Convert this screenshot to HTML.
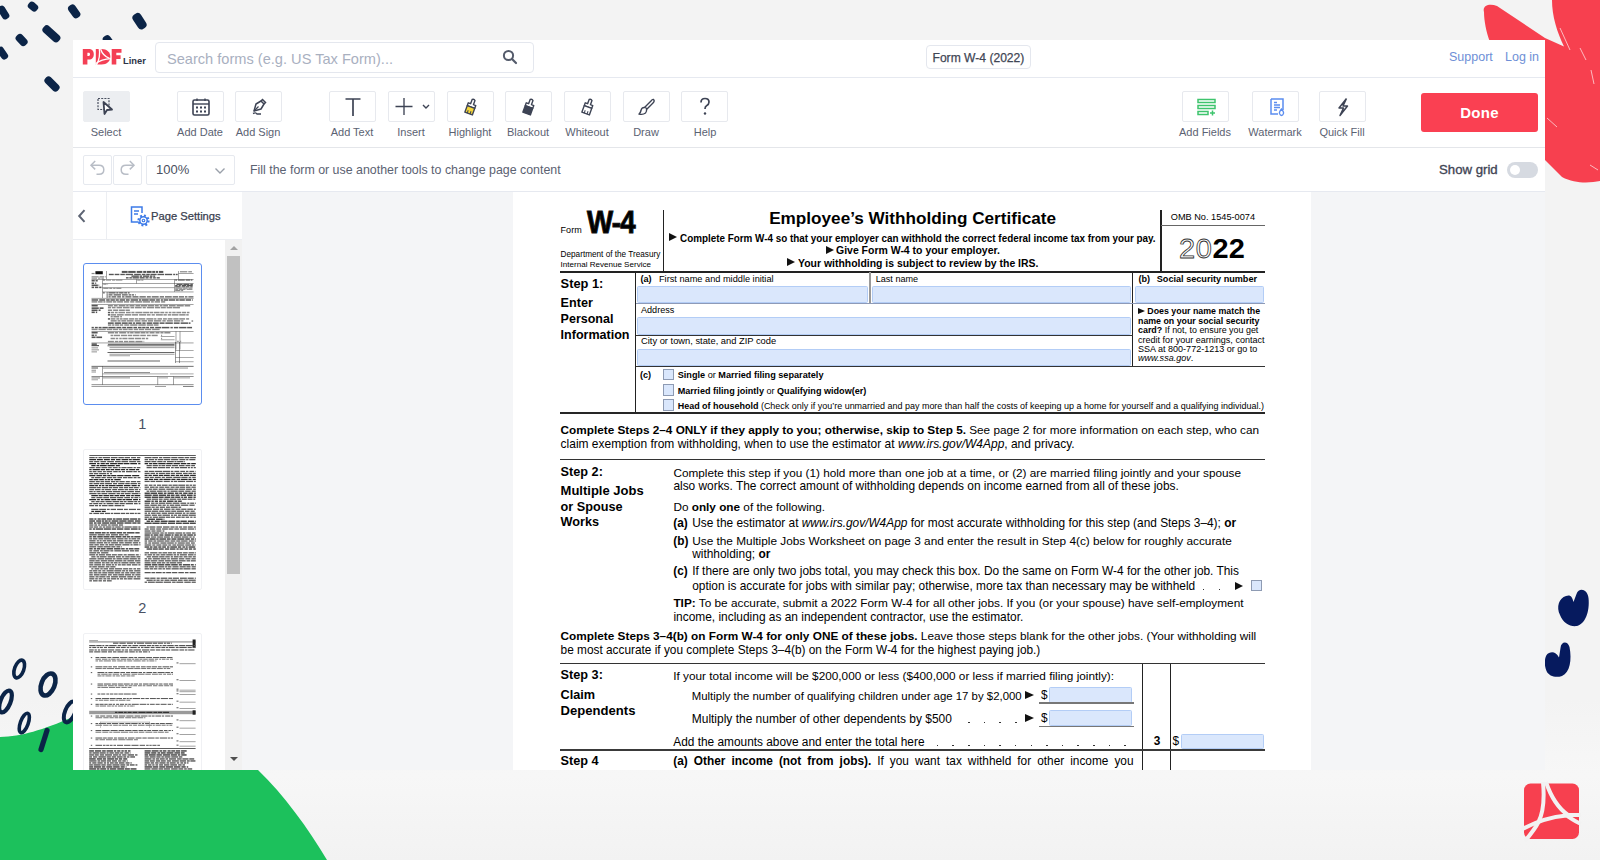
<!DOCTYPE html>
<html><head><meta charset="utf-8">
<style>
*{box-sizing:border-box;margin:0;padding:0}
html,body{width:1600px;height:860px;overflow:hidden}
body{position:relative;background:linear-gradient(to bottom,#f3f3f3 0,#f3f3f3 700px,#f7f7f7 775px,#f2f2f2 860px);font-family:"Liberation Sans",sans-serif;color:#3c4250}
.a{position:absolute}
#app{position:absolute;left:73px;top:40px;width:1472px;height:730px;background:#fff;overflow:hidden}
.line{position:absolute;left:0;width:1472px;height:1px;background:#e6e9f0}
.btn{position:absolute;top:51px;width:47px;height:31px;border:1px solid #e7e9ee;border-radius:2px;background:#fff}
.btn svg{position:absolute;left:50%;top:50%;transform:translate(-50%,-50%)}
.lbl{position:absolute;top:86px;font-size:11px;line-height:13px;color:#5b6272;text-align:center;width:100px;margin-left:-50px;white-space:nowrap}
#side{position:absolute;left:73px;top:192px;width:169px;height:578px;background:#fff;overflow:hidden}
#doc{position:absolute;left:242px;top:192px;width:1303px;height:578px;background:#f4f5f7;overflow:hidden;color:#000}
#doc .t,#side .t{position:absolute;white-space:nowrap;line-height:1;transform-origin:0 0}
#doc .r,#side .r{position:absolute}
</style></head>
<body>
<svg class="a" style="left:0;top:0" width="1600" height="860" viewBox="0 0 1600 860">
<g fill="#0b2447">
<rect x="-3.75" y="8.75" width="14.5" height="7.5" rx="3.15" transform="rotate(58 3.5 12.5)"/>
<rect x="27.75" y="2.70" width="10.5" height="7.8" rx="3.28" transform="rotate(40 33 6.6)"/>
<rect x="66.95" y="7.30" width="14.5" height="8.2" rx="3.44" transform="rotate(55 74.2 11.4)"/>
<rect x="131.00" y="16.50" width="17" height="9.4" rx="3.95" transform="rotate(57 139.5 21.2)"/>
<rect x="41.15" y="29.60" width="20.5" height="8.4" rx="3.53" transform="rotate(42 51.4 33.8)"/>
<rect x="15.10" y="35.90" width="13" height="8.2" rx="3.44" transform="rotate(47 21.6 40)"/>
<rect x="-4.25" y="49.60" width="13.5" height="7.2" rx="3.02" transform="rotate(55 2.5 53.2)"/>
<rect x="102.00" y="37.30" width="13" height="8.4" rx="3.53" transform="rotate(55 108.5 41.5)"/>
<rect x="43.25" y="80.10" width="17.5" height="7.8" rx="3.28" transform="rotate(45 52 84)"/>
</g>
<path d="M1484 12 C1482 5,1490 3,1497 6 L1545 38 L1564 46.5 C1557 32,1552 16,1552 0 L1600 0 L1600 181 C1590 183,1575 184,1562 177 L1545 160 L1520 110 L1490 42 C1486 32,1484 20,1484 12 Z" fill="#f7404f"/>
<g stroke="#fff" stroke-width="0.8" opacity="0.8"><path d="M1560 28 L1570 50"/><path d="M1580 48 L1586 60"/><path d="M1591 70 L1594 84"/><path d="M1547 118 L1557 127"/><path d="M1590 165 L1598 170"/></g>
<path d="M0 737 C22 736.5,42 730,73 717 L150 680 L258 770 C284 795,308 828,327 860 L0 860 Z" fill="#1cc15c"/>
<g fill="none" stroke="#0b2447">
<ellipse cx="19.2" cy="669" rx="4.6" ry="9.3" transform="rotate(20 19.2 669)" stroke-width="3.6"/>
<ellipse cx="48" cy="684.5" rx="6.6" ry="11.6" transform="rotate(22 48 684.5)" stroke-width="4.6"/>
<ellipse cx="5.5" cy="701.5" rx="5" ry="11.6" transform="rotate(22 5.5 701.5)" stroke-width="4.2"/>
<ellipse cx="24.3" cy="723" rx="3.9" ry="10.2" transform="rotate(20 24.3 723)" stroke-width="3.6"/>
<ellipse cx="70" cy="712" rx="5" ry="11" transform="rotate(22 70 712)" stroke-width="4"/>
</g>
<path d="M47 730.5 L41 749.5" stroke="#0b2447" stroke-width="5.2" stroke-linecap="round"/>
<g fill="#061a5e">
<path d="M1566 596 C1559 598,1556 607,1560 615 C1563 623,1570 627,1577 626 C1585 624,1590 612,1588.5 598 C1587.5 589,1579 587,1576.5 594 L1573.5 602 C1572 596,1570 594.5,1566 596 Z"/>
<path d="M1549 653 C1544 655,1544 665,1546.5 671 C1549 676.5,1556 678,1562 676 C1570 672.5,1572 660,1569.5 647 C1567.5 640.5,1561 641.5,1560.5 648 L1559 657.5 C1556 652,1552.5 651.5,1549 653 Z"/>
</g>
<rect x="1524" y="783.6" width="55" height="55.3" rx="6.5" fill="#f7404f"/>
<g fill="none" stroke="#f2f2f2" stroke-width="4">
<path d="M1543 782 C1544.5 798,1543.5 812,1538.5 822 C1535 829,1530 835,1525 841"/>
<path d="M1546 782 C1551 797,1558 808,1568 815 L1581 815"/>
<path d="M1521 830 C1535 822,1550 817,1566.5 815.5 C1571 818.5,1576 822,1581 824"/>
</g>
</svg>
<div id="app">
  <!-- header -->
  <svg class="a" style="left:-73px;top:-40px" width="200" height="80" viewBox="0 0 200 80"><g fill="#f43f55" fill-rule="evenodd">
<path d="M82.8 49.1 H89 C92.2 49.1 93.8 51.3 93.8 54.3 C93.8 57.4 92.2 59.6 89 59.6 H87.4 V64.6 H82.8 Z M87.4 52.7 V56 H88.7 C89.6 56 90 55.3 90 54.35 C90 53.4 89.6 52.7 88.7 52.7 Z"/>
<path d="M95.8 49.1 H101.6 C106.9 49.1 110.3 52.2 110.3 56.85 C110.3 61.5 106.9 64.6 101.6 64.6 H95.8 Z"/>
<path d="M111.7 49.1 H121.5 V52.8 H116.3 V55.3 H120.6 V58.9 H116.3 V64.6 H111.7 Z"/>
</g><g fill="none" stroke="#fff" stroke-width="1.3"><path d="M99.2 48 C100.2 53,99.8 58.5,96.3 65.5"/><path d="M100.6 49 C102 53.5,104.5 56.5,109.5 58.3"/><path d="M95.5 63.8 C99.5 60.5,104 58.8,111 58.6"/></g>
<text x="123" y="64.2" font-family="Liberation Sans" font-weight="bold" font-size="9.8" fill="#2c3447" textLength="22.8" lengthAdjust="spacingAndGlyphs">Liner</text></svg>
  <div class="a" style="left:81.5px;top:2px;width:379.5px;height:31px;border:1px solid #e4e7ee;border-radius:4px"></div>
  <div class="a" style="left:94px;top:10.6px;font-size:14.6px;line-height:17px;color:#a9b0bf;white-space:nowrap">Search forms (e.g. US Tax Form)...</div>
  <svg class="a" style="left:429px;top:9px" width="16" height="16" viewBox="0 0 16 16"><circle cx="6.5" cy="6.5" r="4.6" fill="none" stroke="#545b6b" stroke-width="2"/><path d="M10 10 L14 14" stroke="#545b6b" stroke-width="2.2" stroke-linecap="round"/></svg>
  <div class="a" style="left:853px;top:5px;width:105px;height:24px;border:1px solid #e4e7ee;border-radius:4px"></div>
  <div class="a" style="left:859.5px;top:10.7px;font-size:12.1px;line-height:14px;color:#3f4655;white-space:nowrap;-webkit-text-stroke:0.25px #3f4655">Form W-4 (2022)</div>
  <div class="a" style="left:1376px;top:10px;font-size:12.5px;line-height:14px;color:#6e8fd6;white-space:nowrap">Support</div>
  <div class="a" style="left:1432px;top:10px;font-size:12.5px;line-height:14px;color:#6e8fd6;white-space:nowrap">Log in</div>
  <div class="line" style="top:37px"></div>

  <!-- toolbar -->
  <div class="btn" style="left:10px;background:#eceef1;border-color:#eceef1"><svg width="24" height="20" viewBox="0 0 24 20"><rect x="3" y="1.5" width="11" height="11" fill="none" stroke="#4a5060" stroke-width="1.2" stroke-dasharray="2 1.2"/><path d="M8.5 5 L9.5 17 L12 13 L17 12.5 Z" fill="#fff" stroke="#3d4354" stroke-width="1.8" stroke-linejoin="round"/></svg></div>
  <div class="lbl" style="left:33px">Select</div>

  <div class="btn" style="left:104px"><svg width="20" height="20" viewBox="0 0 20 20"><rect x="2" y="3" width="16" height="15" rx="1.5" fill="none" stroke="#3d4354" stroke-width="1.6"/><path d="M2 7 H18" stroke="#3d4354" stroke-width="1.4"/><path d="M6 1.5 V4 M14 1.5 V4" stroke="#3d4354" stroke-width="1.4"/><g fill="#3d4354"><rect x="5" y="9.5" width="2" height="2"/><rect x="9" y="9.5" width="2" height="2"/><rect x="13" y="9.5" width="2" height="2"/><rect x="5" y="13.5" width="2" height="2"/><rect x="9" y="13.5" width="2" height="2"/><rect x="13" y="13.5" width="2" height="2"/></g></svg></div>
  <div class="lbl" style="left:127px">Add Date</div>

  <div class="btn" style="left:162px"><svg width="20" height="20" viewBox="0 0 20 20"><path d="M5 14 L7 7 L12 4 L15 7 L12 12 Z" fill="none" stroke="#3d4354" stroke-width="1.5" stroke-linejoin="round"/><path d="M12 4 L13.5 2.5 L16.5 5.5 L15 7" fill="none" stroke="#3d4354" stroke-width="1.5"/><path d="M5 14 L9.5 9.5" stroke="#3d4354" stroke-width="1.2"/><path d="M4 16.5 Q7 15 8 17 H12" fill="none" stroke="#3d4354" stroke-width="1.4"/></svg></div>
  <div class="lbl" style="left:185px">Add Sign</div>

  <div class="btn" style="left:256px"><svg width="20" height="22" viewBox="0 0 20 22"><path d="M2.5 3 H17.5 M10 3 V20" stroke="#3d4354" stroke-width="1.7"/></svg></div>
  <div class="lbl" style="left:279px">Add Text</div>

  <div class="btn" style="left:315px"><svg width="36" height="20" viewBox="0 0 36 20"><path d="M1.5 9.5 H18.5 M10 1 V18" stroke="#3d4354" stroke-width="1.35"/><path d="M29 8 L32 11 L35 8" fill="none" stroke="#3d4354" stroke-width="1.4"/></svg></div>
  <div class="lbl" style="left:338px">Insert</div>

  <div class="btn" style="left:374px"><svg width="20" height="20" viewBox="0 0 20 20"><g transform="rotate(20 10 10)"><path d="M8.5 2.5 Q10 1 11.5 2.5 V7 H14 V10 H6 V7 H8.5 Z" fill="none" stroke="#3d4354" stroke-width="1.4" stroke-linejoin="round"/><path d="M6 10 H14 V17 H6 Z" fill="#f5d63a" stroke="#3d4354" stroke-width="1.4" stroke-linejoin="round"/><path d="M8.5 14 V17 M11.5 14 V17" stroke="#3d4354" stroke-width="1"/></g></svg></div>
  <div class="lbl" style="left:397px">Highlight</div>

  <div class="btn" style="left:432px"><svg width="20" height="20" viewBox="0 0 20 20"><g transform="rotate(20 10 10)"><path d="M8.5 2.5 Q10 1 11.5 2.5 V7 H14 V10 H6 V7 H8.5 Z" fill="none" stroke="#3d4354" stroke-width="1.4" stroke-linejoin="round"/><path d="M6 10 H14 V17 H6 Z" fill="#3d4354" stroke="#3d4354" stroke-width="1.4" stroke-linejoin="round"/></g></svg></div>
  <div class="lbl" style="left:455px">Blackout</div>

  <div class="btn" style="left:491px"><svg width="20" height="20" viewBox="0 0 20 20"><g transform="rotate(20 10 10)"><path d="M8.5 2.5 Q10 1 11.5 2.5 V7 H14 V10 H6 V7 H8.5 Z" fill="none" stroke="#3d4354" stroke-width="1.4" stroke-linejoin="round"/><path d="M6 10 H14 V17 H6 Z" fill="#fff" stroke="#3d4354" stroke-width="1.4" stroke-linejoin="round"/><path d="M8.5 14 V17 M11.5 14 V17" stroke="#3d4354" stroke-width="1"/></g></svg></div>
  <div class="lbl" style="left:514px">Whiteout</div>

  <div class="btn" style="left:550px"><svg width="20" height="20" viewBox="0 0 20 20"><path d="M16.5 2.5 Q18 4 16 6 L10 12 L8 10 L14 4 Q15.5 2 16.5 2.5 Z" fill="none" stroke="#3d4354" stroke-width="1.4" stroke-linejoin="round"/><path d="M8 10.5 Q4.5 10 4 13.5 Q3.5 16 2 17 Q6 18 8.5 16 Q10 14.5 9.5 12" fill="none" stroke="#3d4354" stroke-width="1.4" stroke-linejoin="round"/></svg></div>
  <div class="lbl" style="left:573px">Draw</div>

  <div class="btn" style="left:608px"><svg width="20" height="22" viewBox="0 0 20 22"><path d="M6 6.5 Q6 2.5 10 2.5 Q14 2.5 14 6 Q14 8.5 11.5 9.8 Q10 10.6 10 13" fill="none" stroke="#3d4354" stroke-width="1.7"/><circle cx="10" cy="17.5" r="1.2" fill="#3d4354"/></svg></div>
  <div class="lbl" style="left:632px">Help</div>

  <div class="btn" style="left:1109px"><svg width="22" height="20" viewBox="0 0 22 20"><rect x="3" y="2.5" width="17" height="3" fill="none" stroke="#3ec46d" stroke-width="1.5"/><rect x="3" y="8.5" width="17" height="3" fill="none" stroke="#3ec46d" stroke-width="1.5"/><rect x="3" y="14.5" width="10" height="3" fill="none" stroke="#3ec46d" stroke-width="1.5"/><path d="M15 16 H20 M17.5 13.5 V18.5" stroke="#3ec46d" stroke-width="1.5"/></svg></div>
  <div class="lbl" style="left:1132px">Add Fields</div>

  <div class="btn" style="left:1179px"><svg width="20" height="20" viewBox="0 0 20 20"><path d="M5 2 H17 V13 M5 2 V17 H12" fill="none" stroke="#5b8def" stroke-width="1.5"/><path d="M8 5.5 H11 M8 8 H14 M8 10.5 H14 M8 13 H11" stroke="#5b8def" stroke-width="1.3"/><path d="M15.5 12 Q13 15 13.5 16.5 Q14.3 18.5 15.5 18.5 Q16.8 18.5 17.5 16.5 Q18 15 15.5 12 Z" fill="none" stroke="#5b8def" stroke-width="1.3"/></svg></div>
  <div class="lbl" style="left:1202px">Watermark</div>

  <div class="btn" style="left:1246px"><svg width="20" height="20" viewBox="0 0 20 20"><path d="M13.5 1.5 L6 11 H10.5 L7 18.5 L14.5 9 H10 L13.5 1.5" fill="none" stroke="#3d4354" stroke-width="1.5" stroke-linejoin="round"/></svg></div>
  <div class="lbl" style="left:1269px">Quick Fill</div>

  <div class="a" style="left:1348px;top:53px;width:117px;height:39px;background:#fa4052;border-radius:3px;color:#fff;font-weight:bold;font-size:15px;line-height:39px;text-align:center;letter-spacing:0.3px">Done</div>
  <div class="line" style="top:107px;background:#e4e6ea"></div>

  <!-- sub toolbar -->
  <div class="a" style="left:10.4px;top:115px;width:29px;height:30px;border:1px solid #e6e9ef;border-radius:2px"></div>
  <div class="a" style="left:40.2px;top:115px;width:28.4px;height:30px;border:1px solid #e6e9ef;border-radius:2px"></div>
  <svg class="a" style="left:15.5px;top:119px" width="18" height="18" viewBox="0 0 18 18"><path d="M6.2 2 L2 6.2 L6.2 10.4" fill="none" stroke="#b8bdc6" stroke-width="1.5"/><path d="M2.2 6.2 H10 Q14.8 6.2 14.8 10.7 Q14.8 15.2 10 15.2 H7.5" fill="none" stroke="#b8bdc6" stroke-width="1.5"/></svg>
  <svg class="a" style="left:44.5px;top:119px" width="18" height="18" viewBox="0 0 18 18"><path d="M11.8 2 L16 6.2 L11.8 10.4" fill="none" stroke="#b8bdc6" stroke-width="1.5"/><path d="M15.8 6.2 H8 Q3.2 6.2 3.2 10.7 Q3.2 15.2 8 15.2 H10.5" fill="none" stroke="#b8bdc6" stroke-width="1.5"/></svg>
  <div class="a" style="left:73px;top:115px;width:89px;height:30px;border:1px solid #e6e9ef;border-radius:2px"></div>
  <div class="a" style="left:83px;top:122px;font-size:13px;line-height:15px;color:#4a5060">100%</div>
  <svg class="a" style="left:141px;top:127px" width="12" height="8" viewBox="0 0 12 8"><path d="M1.5 1.5 L6 6 L10.5 1.5" fill="none" stroke="#9aa0aa" stroke-width="1.4"/></svg>
  <div class="a" style="left:177px;top:122.7px;font-size:12.4px;line-height:15px;color:#5b6272;white-space:nowrap">Fill the form or use another tools to change page content</div>
  <div class="a" style="left:1366px;top:122px;font-size:13.2px;line-height:15px;color:#3f4554;white-space:nowrap;-webkit-text-stroke:0.35px #3f4554">Show grid</div>
  <div class="a" style="left:1434px;top:122px;width:31px;height:16px;border-radius:8px;background:#d6dae1"></div>
  <div class="a" style="left:1437px;top:125px;width:10px;height:10px;border-radius:5px;background:#fff"></div>
  <div class="line" style="top:151px"></div>

</div>
<div id="side"><svg class="r" style="left:4px;top:16px" width="10" height="16" viewBox="0 0 10 16"><path d="M7.5 2.2 L2.2 8 L7.5 13.8" fill="none" stroke="#5d6473" stroke-width="2"/></svg>
<div class="r" style="left:32.50px;top:0.00px;width:1.00px;height:47.50px;background:#eceef2"></div>
<svg class="r" style="left:56px;top:13px" width="21" height="22" viewBox="0 0 21 22"><path d="M11 17 H2.5 V2 H13 V8" fill="none" stroke="#3d7be8" stroke-width="1.5"/><path d="M5 6 H10 M5 9 H9" stroke="#3d7be8" stroke-width="1.5"/><circle cx="14.5" cy="15.5" r="5" fill="#fff" stroke="#3d7be8" stroke-width="2.2" stroke-dasharray="1.9 2.0"/><circle cx="14.5" cy="15.5" r="3.7" fill="#fff" stroke="#3d7be8" stroke-width="1.5"/><circle cx="14.5" cy="15.5" r="1.3" fill="none" stroke="#3d7be8" stroke-width="1.1"/></svg>
<div class="t" style="left:78px;top:18.5px;font-size:11.2px;color:#3a4150;-webkit-text-stroke:0.25px #3a4150">Page Settings</div>
<div class="r" style="left:0.00px;top:47.00px;width:169.00px;height:1.00px;background:#eceef2"></div>
<div class="r" style="left:152.20px;top:48.00px;width:16.80px;height:530.00px;background:#f1f1f1"></div>
<div class="r" style="left:154.00px;top:63.80px;width:13.00px;height:318.70px;background:#c1c1c1"></div>
<div class="r" style="left:156.5px;top:54px;width:0;height:0;border-left:4px solid transparent;border-right:4px solid transparent;border-bottom:4px solid #a3a3a3"></div>
<div class="r" style="left:156.5px;top:565px;width:0;height:0;border-left:4px solid transparent;border-right:4px solid transparent;border-top:4px solid #505050"></div>
<div class="r" style="left:9.80px;top:71.30px;width:118.80px;height:141.40px;border:1.6px solid #5b8def;border-radius:3px;background:#fff"></div>
<div class="r" style="left:9.80px;top:256.50px;width:119.20px;height:141.20px;border:1px solid #f0f1f4;border-radius:2px;background:#fff"></div>
<div class="r" style="left:9.90px;top:440.60px;width:119.00px;height:167.40px;border:1px solid #f0f1f4;border-radius:2px;background:#fff"></div>
<div class="t" style="left:69.3px;top:224.5px;width:0;font-size:14.5px;color:#4a5263"><span style="position:absolute;left:-4px">1</span></div>
<div class="t" style="left:69.3px;top:408.5px;width:0;font-size:14.5px;color:#4a5263"><span style="position:absolute;left:-4px">2</span></div>
<svg class="r" style="left:0;top:0" width="169" height="578" viewBox="73 192 169 578"><rect x="106.38" y="270.99" width="0.45" height="8.31" fill="#333"/><rect x="178.43" y="271.01" width="0.45" height="8.29" fill="#333"/><rect x="178.52" y="273.05" width="15.06" height="0.45" fill="#333"/><rect x="91.50" y="279.22" width="102.08" height="0.45" fill="#333"/><rect x="95.41" y="271.19" width="7.38" height="3.06" fill="#111"/><rect x="102.36" y="279.30" width="0.45" height="18.75" fill="#333"/><rect x="136.29" y="279.30" width="0.45" height="4.19" fill="#333"/><rect x="174.33" y="279.30" width="0.45" height="12.53" fill="#333"/><rect x="102.45" y="283.43" width="91.14" height="0.45" fill="#333"/><rect x="102.45" y="287.61" width="71.98" height="0.45" fill="#333"/><rect x="102.45" y="291.75" width="91.14" height="0.45" fill="#333"/><rect x="106.39" y="292.13" width="1.67" height="1.53" fill="#888"/><rect x="106.39" y="294.22" width="1.67" height="1.53" fill="#888"/><rect x="106.39" y="296.19" width="1.67" height="1.53" fill="#888"/><rect x="91.50" y="297.95" width="102.08" height="0.45" fill="#333"/><rect x="91.50" y="304.19" width="102.08" height="0.45" fill="#333"/><rect x="191.51" y="320.29" width="1.64" height="1.50" fill="#888"/><rect x="91.50" y="331.30" width="102.08" height="0.45" fill="#333"/><rect x="175.77" y="331.38" width="0.45" height="18.14" fill="#333"/><rect x="179.78" y="331.38" width="0.45" height="18.14" fill="#333"/><rect x="160.79" y="336.54" width="13.76" height="0.45" fill="#333"/><rect x="160.79" y="339.67" width="13.76" height="0.45" fill="#333"/><rect x="91.50" y="342.74" width="102.08" height="0.45" fill="#333"/><rect x="107.86" y="343.81" width="66.61" height="1.1" fill="#666"/><rect x="91.59" y="272.91" width="3.00" height="1.22" fill="#8a8a8a"/><rect x="91.59" y="276.24" width="7.08" height="1.14" fill="#8a8a8a"/><rect x="99.50" y="276.24" width="4.79" height="1.14" fill="#8a8a8a"/><rect x="105.19" y="276.24" width="0.79" height="1.14" fill="#8a8a8a"/><rect x="91.59" y="277.58" width="5.46" height="1.12" fill="#8a8a8a"/><rect x="98.05" y="277.58" width="2.52" height="1.12" fill="#8a8a8a"/><rect x="101.32" y="277.58" width="2.50" height="1.12" fill="#8a8a8a"/><rect x="121.79" y="270.92" width="5.81" height="1.99" fill="#555"/><rect x="128.23" y="270.92" width="7.40" height="1.99" fill="#555"/><rect x="136.71" y="270.92" width="5.60" height="1.99" fill="#555"/><rect x="143.22" y="270.92" width="2.87" height="1.99" fill="#555"/><rect x="146.69" y="270.92" width="4.91" height="1.99" fill="#555"/><rect x="152.23" y="270.92" width="3.05" height="1.99" fill="#555"/><rect x="155.99" y="270.92" width="2.17" height="1.99" fill="#555"/><rect x="158.99" y="270.92" width="4.30" height="1.99" fill="#555"/><rect x="108.88" y="273.79" width="4.86" height="1.38" fill="#555"/><rect x="114.65" y="273.79" width="4.75" height="1.38" fill="#555"/><rect x="120.33" y="273.79" width="4.52" height="1.38" fill="#555"/><rect x="125.59" y="273.79" width="7.49" height="1.38" fill="#555"/><rect x="134.17" y="273.79" width="6.62" height="1.38" fill="#555"/><rect x="141.75" y="273.79" width="3.73" height="1.38" fill="#555"/><rect x="146.19" y="273.79" width="3.59" height="1.38" fill="#555"/><rect x="150.42" y="273.79" width="6.21" height="1.38" fill="#555"/><rect x="157.43" y="273.79" width="6.66" height="1.38" fill="#555"/><rect x="164.88" y="273.79" width="7.27" height="1.38" fill="#555"/><rect x="173.18" y="273.79" width="2.00" height="1.38" fill="#555"/><rect x="175.88" y="273.79" width="1.80" height="1.38" fill="#555"/><rect x="131.46" y="275.46" width="7.39" height="1.38" fill="#555"/><rect x="139.66" y="275.46" width="2.40" height="1.38" fill="#555"/><rect x="142.97" y="275.46" width="6.28" height="1.38" fill="#555"/><rect x="149.99" y="275.46" width="2.48" height="1.38" fill="#555"/><rect x="153.23" y="275.46" width="1.91" height="1.38" fill="#555"/><rect x="125.96" y="277.14" width="2.65" height="1.38" fill="#555"/><rect x="129.33" y="277.14" width="2.56" height="1.38" fill="#555"/><rect x="132.52" y="277.14" width="6.38" height="1.38" fill="#555"/><rect x="139.59" y="277.14" width="5.08" height="1.38" fill="#555"/><rect x="145.49" y="277.14" width="3.05" height="1.38" fill="#555"/><rect x="149.51" y="277.14" width="2.72" height="1.38" fill="#555"/><rect x="153.15" y="277.14" width="2.64" height="1.38" fill="#555"/><rect x="156.60" y="277.14" width="3.17" height="1.38" fill="#555"/><rect x="179.94" y="271.15" width="7.34" height="1.23" fill="#8a8a8a"/><rect x="188.28" y="271.15" width="3.67" height="1.23" fill="#8a8a8a"/><rect x="91.59" y="279.94" width="3.16" height="1.58" fill="#555"/><rect x="95.54" y="279.94" width="2.18" height="1.58" fill="#555"/><rect x="91.59" y="282.46" width="2.55" height="1.56" fill="#555"/><rect x="95.23" y="282.46" width="0.97" height="1.56" fill="#555"/><rect x="91.59" y="284.51" width="6.25" height="1.55" fill="#555"/><rect x="98.60" y="284.51" width="0.57" height="1.55" fill="#555"/><rect x="91.59" y="286.59" width="2.50" height="1.55" fill="#555"/><rect x="94.97" y="286.59" width="3.34" height="1.55" fill="#555"/><rect x="99.21" y="286.59" width="2.29" height="1.55" fill="#555"/><rect x="103.14" y="279.40" width="1.61" height="1.22" fill="#555"/><rect x="105.84" y="279.36" width="5.16" height="1.23" fill="#8a8a8a"/><rect x="112.03" y="279.36" width="3.01" height="1.23" fill="#8a8a8a"/><rect x="115.71" y="279.36" width="6.66" height="1.23" fill="#8a8a8a"/><rect x="137.21" y="279.38" width="3.37" height="1.22" fill="#8a8a8a"/><rect x="141.28" y="279.38" width="2.08" height="1.22" fill="#8a8a8a"/><rect x="175.27" y="279.38" width="1.68" height="1.22" fill="#555"/><rect x="177.92" y="279.37" width="6.85" height="1.22" fill="#555"/><rect x="185.67" y="279.37" width="4.32" height="1.22" fill="#555"/><rect x="190.64" y="279.37" width="1.74" height="1.22" fill="#555"/><rect x="103.23" y="283.49" width="3.31" height="1.22" fill="#8a8a8a"/><rect x="107.49" y="283.49" width="0.57" height="1.22" fill="#8a8a8a"/><rect x="103.23" y="287.65" width="5.28" height="1.24" fill="#8a8a8a"/><rect x="109.26" y="287.65" width="2.96" height="1.24" fill="#8a8a8a"/><rect x="113.18" y="287.65" width="2.38" height="1.24" fill="#8a8a8a"/><rect x="116.27" y="287.65" width="5.08" height="1.24" fill="#8a8a8a"/><rect x="103.08" y="292.24" width="1.61" height="1.22" fill="#555"/><rect x="108.54" y="292.24" width="7.05" height="1.23" fill="#555"/><rect x="116.29" y="292.24" width="2.09" height="1.23" fill="#555"/><rect x="119.12" y="292.24" width="4.45" height="1.23" fill="#555"/><rect x="124.20" y="292.24" width="2.97" height="1.23" fill="#555"/><rect x="127.95" y="292.24" width="1.67" height="1.23" fill="#555"/><rect x="108.54" y="294.28" width="3.99" height="1.22" fill="#555"/><rect x="113.58" y="294.28" width="7.39" height="1.22" fill="#555"/><rect x="121.90" y="294.28" width="5.80" height="1.22" fill="#555"/><rect x="128.60" y="294.28" width="2.77" height="1.22" fill="#555"/><rect x="131.98" y="294.28" width="2.10" height="1.22" fill="#555"/><rect x="135.14" y="294.28" width="0.67" height="1.22" fill="#555"/><rect x="108.54" y="296.26" width="2.12" height="1.21" fill="#555"/><rect x="111.58" y="296.26" width="4.65" height="1.21" fill="#555"/><rect x="117.20" y="296.26" width="3.75" height="1.21" fill="#555"/><rect x="122.05" y="296.26" width="2.41" height="1.21" fill="#555"/><rect x="125.34" y="296.26" width="6.05" height="1.21" fill="#555"/><rect x="132.44" y="296.26" width="6.05" height="1.21" fill="#555"/><rect x="139.45" y="296.26" width="6.36" height="1.21" fill="#555"/><rect x="146.87" y="296.26" width="3.94" height="1.21" fill="#555"/><rect x="151.74" y="296.26" width="6.95" height="1.21" fill="#555"/><rect x="159.73" y="296.26" width="4.29" height="1.21" fill="#555"/><rect x="165.02" y="296.26" width="6.75" height="1.21" fill="#555"/><rect x="172.66" y="296.26" width="5.44" height="1.21" fill="#555"/><rect x="178.89" y="296.26" width="5.20" height="1.21" fill="#555"/><rect x="185.00" y="296.26" width="2.44" height="1.21" fill="#555"/><rect x="188.36" y="296.26" width="5.08" height="1.21" fill="#555"/><rect x="176.54" y="283.73" width="6.01" height="1.20" fill="#555"/><rect x="183.34" y="283.73" width="6.04" height="1.20" fill="#555"/><rect x="190.27" y="283.73" width="2.59" height="1.20" fill="#555"/><rect x="175.19" y="284.99" width="2.46" height="1.19" fill="#555"/><rect x="178.63" y="284.99" width="2.16" height="1.19" fill="#555"/><rect x="181.69" y="284.99" width="4.65" height="1.19" fill="#555"/><rect x="187.06" y="284.99" width="5.69" height="1.19" fill="#555"/><rect x="175.19" y="286.22" width="5.38" height="1.20" fill="#555"/><rect x="181.63" y="286.22" width="3.41" height="1.20" fill="#555"/><rect x="185.65" y="286.22" width="3.66" height="1.20" fill="#555"/><rect x="190.24" y="286.22" width="2.36" height="1.20" fill="#555"/><rect x="175.19" y="287.46" width="6.98" height="1.22" fill="#8a8a8a"/><rect x="183.11" y="287.46" width="4.43" height="1.22" fill="#8a8a8a"/><rect x="188.58" y="287.46" width="3.80" height="1.22" fill="#8a8a8a"/><rect x="175.19" y="288.69" width="3.09" height="1.21" fill="#8a8a8a"/><rect x="179.10" y="288.69" width="6.43" height="1.21" fill="#8a8a8a"/><rect x="186.59" y="288.69" width="5.83" height="1.21" fill="#8a8a8a"/><rect x="175.19" y="289.95" width="5.21" height="1.22" fill="#8a8a8a"/><rect x="181.16" y="289.95" width="2.00" height="1.22" fill="#8a8a8a"/><rect x="91.59" y="299.25" width="6.60" height="1.48" fill="#555"/><rect x="99.22" y="299.25" width="5.91" height="1.48" fill="#555"/><rect x="106.20" y="299.25" width="3.52" height="1.48" fill="#555"/><rect x="110.41" y="299.25" width="4.48" height="1.48" fill="#555"/><rect x="115.63" y="299.25" width="3.18" height="1.48" fill="#555"/><rect x="119.61" y="299.25" width="5.44" height="1.48" fill="#555"/><rect x="125.90" y="299.25" width="3.73" height="1.48" fill="#555"/><rect x="130.65" y="299.25" width="7.40" height="1.48" fill="#555"/><rect x="138.88" y="299.25" width="2.41" height="1.48" fill="#555"/><rect x="141.91" y="299.25" width="6.80" height="1.48" fill="#555"/><rect x="149.33" y="299.25" width="5.90" height="1.48" fill="#555"/><rect x="156.11" y="299.25" width="3.70" height="1.48" fill="#555"/><rect x="160.81" y="299.25" width="2.11" height="1.48" fill="#555"/><rect x="163.58" y="299.25" width="4.50" height="1.48" fill="#555"/><rect x="168.69" y="299.25" width="6.56" height="1.48" fill="#555"/><rect x="175.97" y="299.25" width="2.77" height="1.48" fill="#555"/><rect x="179.37" y="299.25" width="5.46" height="1.48" fill="#555"/><rect x="185.66" y="299.25" width="5.46" height="1.48" fill="#555"/><rect x="192.05" y="299.25" width="0.74" height="1.48" fill="#555"/><rect x="91.59" y="301.13" width="5.76" height="1.50" fill="#8a8a8a"/><rect x="98.05" y="301.13" width="4.61" height="1.50" fill="#8a8a8a"/><rect x="103.35" y="301.13" width="2.06" height="1.50" fill="#8a8a8a"/><rect x="106.25" y="301.13" width="5.93" height="1.50" fill="#8a8a8a"/><rect x="112.87" y="301.13" width="3.50" height="1.50" fill="#8a8a8a"/><rect x="117.14" y="301.13" width="5.84" height="1.50" fill="#8a8a8a"/><rect x="123.83" y="301.13" width="5.38" height="1.50" fill="#8a8a8a"/><rect x="130.19" y="301.13" width="4.16" height="1.50" fill="#8a8a8a"/><rect x="135.35" y="301.13" width="6.98" height="1.50" fill="#8a8a8a"/><rect x="142.98" y="301.13" width="7.13" height="1.50" fill="#8a8a8a"/><rect x="151.07" y="301.13" width="2.71" height="1.50" fill="#8a8a8a"/><rect x="154.61" y="301.13" width="5.44" height="1.50" fill="#8a8a8a"/><rect x="161.11" y="301.13" width="4.07" height="1.50" fill="#8a8a8a"/><rect x="91.59" y="304.92" width="6.13" height="1.57" fill="#555"/><rect x="91.59" y="307.34" width="7.19" height="1.60" fill="#555"/><rect x="99.61" y="307.34" width="3.94" height="1.60" fill="#555"/><rect x="91.59" y="309.47" width="5.97" height="1.57" fill="#555"/><rect x="98.57" y="309.47" width="2.00" height="1.57" fill="#555"/><rect x="91.59" y="311.52" width="3.17" height="1.57" fill="#555"/><rect x="95.81" y="311.52" width="1.36" height="1.57" fill="#555"/><rect x="107.92" y="305.01" width="4.95" height="1.48" fill="#8a8a8a"/><rect x="113.87" y="305.01" width="3.76" height="1.48" fill="#8a8a8a"/><rect x="118.69" y="305.01" width="6.71" height="1.48" fill="#8a8a8a"/><rect x="126.17" y="305.01" width="2.46" height="1.48" fill="#8a8a8a"/><rect x="129.44" y="305.01" width="5.03" height="1.48" fill="#8a8a8a"/><rect x="135.45" y="305.01" width="4.68" height="1.48" fill="#8a8a8a"/><rect x="140.75" y="305.01" width="6.45" height="1.48" fill="#8a8a8a"/><rect x="147.83" y="305.01" width="6.40" height="1.48" fill="#8a8a8a"/><rect x="154.92" y="305.01" width="3.84" height="1.48" fill="#8a8a8a"/><rect x="159.75" y="305.01" width="2.77" height="1.48" fill="#8a8a8a"/><rect x="163.20" y="305.01" width="4.84" height="1.48" fill="#8a8a8a"/><rect x="169.00" y="305.01" width="6.62" height="1.48" fill="#8a8a8a"/><rect x="176.57" y="305.01" width="7.20" height="1.48" fill="#8a8a8a"/><rect x="184.62" y="305.01" width="5.57" height="1.48" fill="#8a8a8a"/><rect x="107.92" y="306.86" width="3.22" height="1.49" fill="#8a8a8a"/><rect x="112.00" y="306.86" width="3.60" height="1.49" fill="#8a8a8a"/><rect x="116.56" y="306.86" width="5.51" height="1.49" fill="#8a8a8a"/><rect x="122.94" y="306.86" width="6.64" height="1.49" fill="#8a8a8a"/><rect x="130.46" y="306.86" width="3.71" height="1.49" fill="#8a8a8a"/><rect x="134.96" y="306.86" width="6.65" height="1.49" fill="#8a8a8a"/><rect x="142.66" y="306.86" width="3.15" height="1.49" fill="#8a8a8a"/><rect x="146.83" y="306.86" width="7.33" height="1.49" fill="#8a8a8a"/><rect x="155.02" y="306.86" width="5.15" height="1.49" fill="#8a8a8a"/><rect x="160.87" y="306.86" width="4.95" height="1.49" fill="#8a8a8a"/><rect x="166.67" y="306.86" width="5.33" height="1.49" fill="#8a8a8a"/><rect x="172.61" y="306.86" width="7.33" height="1.49" fill="#8a8a8a"/><rect x="107.92" y="309.50" width="4.20" height="1.48" fill="#8a8a8a"/><rect x="113.12" y="309.50" width="5.10" height="1.48" fill="#8a8a8a"/><rect x="119.07" y="309.50" width="5.80" height="1.48" fill="#8a8a8a"/><rect x="125.50" y="309.50" width="4.34" height="1.48" fill="#8a8a8a"/><rect x="107.91" y="311.80" width="2.10" height="1.48" fill="#555"/><rect x="110.64" y="311.79" width="3.48" height="1.49" fill="#8a8a8a"/><rect x="114.96" y="311.79" width="2.70" height="1.49" fill="#8a8a8a"/><rect x="118.47" y="311.79" width="6.49" height="1.49" fill="#8a8a8a"/><rect x="126.01" y="311.79" width="4.62" height="1.49" fill="#8a8a8a"/><rect x="131.39" y="311.79" width="3.05" height="1.49" fill="#8a8a8a"/><rect x="135.35" y="311.79" width="7.09" height="1.49" fill="#8a8a8a"/><rect x="143.11" y="311.79" width="6.29" height="1.49" fill="#8a8a8a"/><rect x="150.00" y="311.79" width="3.07" height="1.49" fill="#8a8a8a"/><rect x="153.79" y="311.79" width="5.78" height="1.49" fill="#8a8a8a"/><rect x="160.33" y="311.79" width="3.95" height="1.49" fill="#8a8a8a"/><rect x="165.19" y="311.79" width="2.58" height="1.49" fill="#8a8a8a"/><rect x="168.73" y="311.79" width="2.68" height="1.49" fill="#8a8a8a"/><rect x="172.26" y="311.79" width="3.38" height="1.49" fill="#8a8a8a"/><rect x="176.34" y="311.79" width="4.92" height="1.49" fill="#8a8a8a"/><rect x="182.07" y="311.79" width="4.07" height="1.49" fill="#8a8a8a"/><rect x="186.95" y="311.79" width="2.49" height="1.49" fill="#8a8a8a"/><rect x="107.91" y="314.11" width="2.19" height="1.48" fill="#555"/><rect x="110.64" y="314.11" width="5.51" height="1.48" fill="#8a8a8a"/><rect x="117.02" y="314.11" width="6.68" height="1.48" fill="#8a8a8a"/><rect x="124.61" y="314.11" width="6.71" height="1.48" fill="#8a8a8a"/><rect x="132.04" y="314.11" width="6.07" height="1.48" fill="#8a8a8a"/><rect x="139.11" y="314.11" width="6.96" height="1.48" fill="#8a8a8a"/><rect x="146.84" y="314.11" width="3.73" height="1.48" fill="#8a8a8a"/><rect x="151.63" y="314.11" width="3.20" height="1.48" fill="#8a8a8a"/><rect x="155.93" y="314.11" width="6.88" height="1.48" fill="#8a8a8a"/><rect x="163.48" y="314.11" width="3.32" height="1.48" fill="#8a8a8a"/><rect x="167.76" y="314.11" width="3.43" height="1.48" fill="#8a8a8a"/><rect x="171.83" y="314.11" width="6.58" height="1.48" fill="#8a8a8a"/><rect x="179.22" y="314.11" width="6.34" height="1.48" fill="#8a8a8a"/><rect x="186.23" y="314.11" width="2.47" height="1.48" fill="#8a8a8a"/><rect x="110.64" y="315.93" width="2.10" height="1.49" fill="#8a8a8a"/><rect x="113.44" y="315.93" width="5.75" height="1.49" fill="#8a8a8a"/><rect x="120.25" y="315.93" width="1.66" height="1.49" fill="#8a8a8a"/><rect x="107.91" y="318.17" width="2.10" height="1.48" fill="#555"/><rect x="110.64" y="318.16" width="4.77" height="1.49" fill="#8a8a8a"/><rect x="116.35" y="318.16" width="3.04" height="1.49" fill="#8a8a8a"/><rect x="120.03" y="318.16" width="2.58" height="1.49" fill="#8a8a8a"/><rect x="123.23" y="318.16" width="5.03" height="1.49" fill="#8a8a8a"/><rect x="129.12" y="318.16" width="5.13" height="1.49" fill="#8a8a8a"/><rect x="134.92" y="318.16" width="3.01" height="1.49" fill="#8a8a8a"/><rect x="138.64" y="318.16" width="6.62" height="1.49" fill="#8a8a8a"/><rect x="146.35" y="318.16" width="7.10" height="1.49" fill="#8a8a8a"/><rect x="154.10" y="318.16" width="2.34" height="1.49" fill="#8a8a8a"/><rect x="157.52" y="318.16" width="4.54" height="1.49" fill="#8a8a8a"/><rect x="163.04" y="318.16" width="3.80" height="1.49" fill="#8a8a8a"/><rect x="167.67" y="318.16" width="4.83" height="1.49" fill="#8a8a8a"/><rect x="173.32" y="318.16" width="5.31" height="1.49" fill="#8a8a8a"/><rect x="179.23" y="318.16" width="5.86" height="1.49" fill="#8a8a8a"/><rect x="186.11" y="318.16" width="3.00" height="1.49" fill="#8a8a8a"/><rect x="110.64" y="320.11" width="6.07" height="1.49" fill="#8a8a8a"/><rect x="117.51" y="320.11" width="3.07" height="1.49" fill="#8a8a8a"/><rect x="121.27" y="320.11" width="4.82" height="1.49" fill="#8a8a8a"/><rect x="126.69" y="320.11" width="6.91" height="1.49" fill="#8a8a8a"/><rect x="134.61" y="320.11" width="5.88" height="1.49" fill="#8a8a8a"/><rect x="141.51" y="320.11" width="5.46" height="1.49" fill="#8a8a8a"/><rect x="147.78" y="320.11" width="5.30" height="1.49" fill="#8a8a8a"/><rect x="153.93" y="320.11" width="7.40" height="1.49" fill="#8a8a8a"/><rect x="162.33" y="320.11" width="3.42" height="1.49" fill="#8a8a8a"/><rect x="166.81" y="320.11" width="6.09" height="1.49" fill="#8a8a8a"/><rect x="173.89" y="320.11" width="6.48" height="1.49" fill="#8a8a8a"/><rect x="181.18" y="320.11" width="2.23" height="1.49" fill="#8a8a8a"/><rect x="107.92" y="322.40" width="5.82" height="1.48" fill="#555"/><rect x="114.73" y="322.40" width="6.21" height="1.48" fill="#555"/><rect x="121.74" y="322.40" width="5.97" height="1.48" fill="#555"/><rect x="128.35" y="322.40" width="3.88" height="1.48" fill="#555"/><rect x="133.06" y="322.40" width="2.06" height="1.48" fill="#555"/><rect x="135.90" y="322.40" width="5.51" height="1.48" fill="#555"/><rect x="142.32" y="322.40" width="3.28" height="1.48" fill="#555"/><rect x="146.67" y="322.40" width="5.66" height="1.48" fill="#555"/><rect x="153.10" y="322.40" width="5.63" height="1.48" fill="#555"/><rect x="159.62" y="322.40" width="4.93" height="1.48" fill="#555"/><rect x="165.34" y="322.40" width="7.50" height="1.48" fill="#555"/><rect x="173.76" y="322.40" width="5.86" height="1.48" fill="#555"/><rect x="180.60" y="322.40" width="7.39" height="1.48" fill="#555"/><rect x="188.60" y="322.40" width="1.88" height="1.48" fill="#555"/><rect x="107.92" y="324.28" width="3.41" height="1.49" fill="#8a8a8a"/><rect x="112.13" y="324.28" width="2.28" height="1.49" fill="#8a8a8a"/><rect x="115.11" y="324.28" width="4.07" height="1.49" fill="#8a8a8a"/><rect x="119.82" y="324.28" width="3.38" height="1.49" fill="#8a8a8a"/><rect x="124.26" y="324.28" width="5.03" height="1.49" fill="#8a8a8a"/><rect x="130.14" y="324.28" width="7.32" height="1.49" fill="#8a8a8a"/><rect x="138.34" y="324.28" width="7.47" height="1.49" fill="#8a8a8a"/><rect x="146.73" y="324.28" width="6.45" height="1.49" fill="#8a8a8a"/><rect x="153.82" y="324.28" width="4.72" height="1.49" fill="#8a8a8a"/><rect x="91.59" y="326.86" width="2.25" height="1.48" fill="#555"/><rect x="94.90" y="326.86" width="2.88" height="1.48" fill="#555"/><rect x="98.62" y="326.86" width="2.93" height="1.48" fill="#555"/><rect x="102.39" y="326.86" width="5.36" height="1.48" fill="#555"/><rect x="108.38" y="326.86" width="7.20" height="1.48" fill="#555"/><rect x="116.39" y="326.86" width="4.90" height="1.48" fill="#555"/><rect x="122.19" y="326.86" width="4.01" height="1.48" fill="#555"/><rect x="126.94" y="326.86" width="5.60" height="1.48" fill="#555"/><rect x="133.43" y="326.86" width="3.56" height="1.48" fill="#555"/><rect x="137.94" y="326.86" width="3.63" height="1.48" fill="#555"/><rect x="142.18" y="326.86" width="3.35" height="1.48" fill="#555"/><rect x="146.15" y="326.86" width="2.86" height="1.48" fill="#555"/><rect x="149.99" y="326.86" width="4.14" height="1.48" fill="#555"/><rect x="155.18" y="326.86" width="6.12" height="1.48" fill="#555"/><rect x="161.92" y="326.86" width="7.44" height="1.48" fill="#555"/><rect x="170.43" y="326.86" width="2.40" height="1.48" fill="#555"/><rect x="173.89" y="326.86" width="4.36" height="1.48" fill="#555"/><rect x="179.09" y="326.86" width="7.35" height="1.48" fill="#555"/><rect x="187.16" y="326.86" width="4.88" height="1.48" fill="#555"/><rect x="91.59" y="328.67" width="5.98" height="1.48" fill="#8a8a8a"/><rect x="98.40" y="328.67" width="7.38" height="1.48" fill="#8a8a8a"/><rect x="106.79" y="328.67" width="5.32" height="1.48" fill="#8a8a8a"/><rect x="112.77" y="328.67" width="5.43" height="1.48" fill="#8a8a8a"/><rect x="119.03" y="328.67" width="3.12" height="1.48" fill="#8a8a8a"/><rect x="122.77" y="328.67" width="4.90" height="1.48" fill="#8a8a8a"/><rect x="128.34" y="328.67" width="4.44" height="1.48" fill="#8a8a8a"/><rect x="133.71" y="328.67" width="4.51" height="1.48" fill="#8a8a8a"/><rect x="138.95" y="328.67" width="5.20" height="1.48" fill="#8a8a8a"/><rect x="144.96" y="328.67" width="6.28" height="1.48" fill="#8a8a8a"/><rect x="152.10" y="328.67" width="7.49" height="1.48" fill="#8a8a8a"/><rect x="91.59" y="331.92" width="6.04" height="1.57" fill="#555"/><rect x="91.59" y="334.52" width="2.63" height="1.57" fill="#555"/><rect x="95.26" y="334.52" width="1.33" height="1.57" fill="#555"/><rect x="91.59" y="336.51" width="3.98" height="1.60" fill="#555"/><rect x="96.30" y="336.51" width="5.77" height="1.60" fill="#555"/><rect x="91.59" y="343.33" width="5.25" height="1.57" fill="#555"/><rect x="107.91" y="332.00" width="6.14" height="1.48" fill="#8a8a8a"/><rect x="114.74" y="332.00" width="3.37" height="1.48" fill="#8a8a8a"/><rect x="119.20" y="332.00" width="7.04" height="1.48" fill="#8a8a8a"/><rect x="127.28" y="332.00" width="2.22" height="1.48" fill="#8a8a8a"/><rect x="130.13" y="332.00" width="3.49" height="1.48" fill="#8a8a8a"/><rect x="134.43" y="332.00" width="5.43" height="1.48" fill="#8a8a8a"/><rect x="140.51" y="332.00" width="4.98" height="1.48" fill="#8a8a8a"/><rect x="146.12" y="332.00" width="2.48" height="1.48" fill="#8a8a8a"/><rect x="149.54" y="332.00" width="5.03" height="1.48" fill="#8a8a8a"/><rect x="155.48" y="332.00" width="4.05" height="1.48" fill="#8a8a8a"/><rect x="160.37" y="332.00" width="3.16" height="1.48" fill="#8a8a8a"/><rect x="164.30" y="332.00" width="6.10" height="1.48" fill="#8a8a8a"/><rect x="110.58" y="334.74" width="2.41" height="1.44" fill="#8a8a8a"/><rect x="113.65" y="334.74" width="6.45" height="1.44" fill="#8a8a8a"/><rect x="121.01" y="334.74" width="6.23" height="1.44" fill="#8a8a8a"/><rect x="127.94" y="334.74" width="4.33" height="1.44" fill="#8a8a8a"/><rect x="133.01" y="334.74" width="6.45" height="1.44" fill="#8a8a8a"/><rect x="140.25" y="334.74" width="5.60" height="1.44" fill="#8a8a8a"/><rect x="146.93" y="334.74" width="3.79" height="1.44" fill="#8a8a8a"/><rect x="151.60" y="334.74" width="6.10" height="1.44" fill="#8a8a8a"/><rect x="110.58" y="337.76" width="4.35" height="1.50" fill="#8a8a8a"/><rect x="115.71" y="337.76" width="2.53" height="1.50" fill="#8a8a8a"/><rect x="119.29" y="337.76" width="2.43" height="1.50" fill="#8a8a8a"/><rect x="122.36" y="337.76" width="5.10" height="1.50" fill="#8a8a8a"/><rect x="128.30" y="337.76" width="5.77" height="1.50" fill="#8a8a8a"/><rect x="134.82" y="337.76" width="6.27" height="1.50" fill="#8a8a8a"/><rect x="141.73" y="337.76" width="3.17" height="1.50" fill="#8a8a8a"/><rect x="145.83" y="337.76" width="2.39" height="1.50" fill="#8a8a8a"/><rect x="107.91" y="340.84" width="5.99" height="1.49" fill="#8a8a8a"/><rect x="114.84" y="340.84" width="3.56" height="1.49" fill="#8a8a8a"/><rect x="119.07" y="340.84" width="3.97" height="1.49" fill="#8a8a8a"/><rect x="124.00" y="340.84" width="4.02" height="1.49" fill="#8a8a8a"/><rect x="128.67" y="340.84" width="5.90" height="1.49" fill="#8a8a8a"/><rect x="135.46" y="340.84" width="7.05" height="1.49" fill="#8a8a8a"/><rect x="143.58" y="340.84" width="0.63" height="1.49" fill="#8a8a8a"/><rect x="177.47" y="340.71" width="0.95" height="1.48" fill="#555"/><rect x="161.15" y="334.70" width="0.95" height="1.48" fill="#8a8a8a"/><rect x="161.15" y="337.77" width="0.95" height="1.48" fill="#8a8a8a"/><rect x="180.18" y="340.71" width="0.95" height="1.48" fill="#8a8a8a"/><rect x="91.50" y="345.00" width="7.50" height="1.20" fill="#555"/><rect x="91.50" y="347.50" width="6.50" height="0.80" fill="#777"/><rect x="91.50" y="349.50" width="7.50" height="0.80" fill="#777"/><rect x="91.50" y="351.50" width="5.50" height="0.80" fill="#777"/><rect x="107.50" y="345.30" width="67.00" height="1.00" fill="#666"/><rect x="109.50" y="347.30" width="65.00" height="0.80" fill="#888"/><rect x="109.50" y="349.00" width="30.50" height="0.80" fill="#888"/><rect x="107.50" y="352.00" width="67.00" height="1.00" fill="#666"/><rect x="109.50" y="353.80" width="65.00" height="0.80" fill="#888"/><rect x="109.50" y="355.40" width="20.50" height="0.80" fill="#888"/><rect x="107.50" y="360.50" width="52.50" height="1.00" fill="#666"/><rect x="175.50" y="350.20" width="18.10" height="0.50" fill="#555"/><rect x="175.50" y="357.30" width="18.10" height="0.50" fill="#555"/><rect x="175.50" y="361.60" width="18.10" height="0.50" fill="#555"/><rect x="175.10" y="342.00" width="0.50" height="21.00" fill="#333"/><rect x="179.10" y="342.00" width="0.50" height="21.00" fill="#333"/><rect x="91.50" y="365.90" width="102.10" height="0.70" fill="#333"/><rect x="91.50" y="367.50" width="6.50" height="1.00" fill="#555"/><rect x="91.50" y="369.80" width="4.50" height="0.80" fill="#777"/><rect x="91.50" y="371.60" width="4.50" height="0.80" fill="#777"/><rect x="102.00" y="366.00" width="0.50" height="18.80" fill="#444"/><rect x="103.00" y="367.60" width="85.00" height="0.90" fill="#888"/><rect x="104.00" y="372.30" width="46.00" height="0.80" fill="#666"/><rect x="102.50" y="373.70" width="65.50" height="0.50" fill="#555"/><rect x="170.00" y="373.70" width="23.60" height="0.50" fill="#555"/><rect x="91.50" y="376.40" width="102.10" height="0.60" fill="#444"/><rect x="91.50" y="377.50" width="8.50" height="0.90" fill="#777"/><rect x="91.50" y="379.50" width="6.50" height="0.70" fill="#777"/><rect x="103.00" y="377.50" width="27.00" height="0.80" fill="#777"/><rect x="158.50" y="377.50" width="9.50" height="0.80" fill="#888"/><rect x="174.00" y="377.50" width="16.00" height="0.80" fill="#888"/><rect x="157.60" y="376.50" width="0.50" height="8.30" fill="#444"/><rect x="173.00" y="376.50" width="0.50" height="8.30" fill="#444"/><rect x="91.50" y="384.50" width="102.10" height="0.60" fill="#444"/><rect x="91.50" y="386.00" width="48.50" height="0.80" fill="#888"/><rect x="155.00" y="386.00" width="11.00" height="0.80" fill="#888"/><rect x="183.00" y="386.00" width="10.60" height="0.80" fill="#666"/></svg>
<svg class="r" style="left:0;top:0" width="169" height="578" viewBox="73 192 169 578"><rect x="89.3" y="455" width="106.5" height="0.8" fill="#333"/><rect x="89.30" y="457.00" width="5.44" height="1.25" fill="#555"/><rect x="95.37" y="457.00" width="2.07" height="1.25" fill="#555"/><rect x="98.47" y="457.00" width="3.43" height="1.25" fill="#555"/><rect x="102.61" y="457.00" width="7.48" height="1.25" fill="#555"/><rect x="110.92" y="457.00" width="6.60" height="1.25" fill="#555"/><rect x="118.36" y="457.00" width="5.51" height="1.25" fill="#555"/><rect x="124.55" y="457.00" width="5.49" height="1.25" fill="#555"/><rect x="131.07" y="457.00" width="4.88" height="1.25" fill="#555"/><rect x="136.92" y="457.00" width="3.48" height="1.25" fill="#555"/><rect x="89.30" y="459.00" width="6.76" height="1.25" fill="#2a2a2a"/><rect x="96.90" y="459.00" width="5.95" height="1.25" fill="#2a2a2a"/><rect x="103.89" y="459.00" width="5.93" height="1.25" fill="#2a2a2a"/><rect x="110.88" y="459.00" width="4.17" height="1.25" fill="#2a2a2a"/><rect x="116.05" y="459.00" width="4.45" height="1.25" fill="#2a2a2a"/><rect x="121.56" y="459.00" width="6.83" height="1.25" fill="#2a2a2a"/><rect x="129.05" y="459.00" width="2.75" height="1.25" fill="#2a2a2a"/><rect x="132.50" y="459.00" width="7.31" height="1.25" fill="#2a2a2a"/><rect x="89.30" y="461.00" width="3.93" height="1.25" fill="#555"/><rect x="94.12" y="461.00" width="5.21" height="1.25" fill="#555"/><rect x="100.39" y="461.00" width="5.75" height="1.25" fill="#555"/><rect x="107.20" y="461.00" width="6.71" height="1.25" fill="#555"/><rect x="115.01" y="461.00" width="5.69" height="1.25" fill="#555"/><rect x="121.38" y="461.00" width="6.73" height="1.25" fill="#555"/><rect x="129.20" y="461.00" width="6.98" height="1.25" fill="#555"/><rect x="137.06" y="461.00" width="3.34" height="1.25" fill="#555"/><rect x="89.30" y="463.00" width="6.70" height="1.25" fill="#2a2a2a"/><rect x="97.09" y="463.00" width="2.49" height="1.25" fill="#2a2a2a"/><rect x="100.58" y="463.00" width="4.26" height="1.25" fill="#2a2a2a"/><rect x="105.51" y="463.00" width="3.62" height="1.25" fill="#2a2a2a"/><rect x="110.11" y="463.00" width="6.80" height="1.25" fill="#2a2a2a"/><rect x="117.53" y="463.00" width="5.38" height="1.25" fill="#2a2a2a"/><rect x="123.54" y="463.00" width="5.95" height="1.25" fill="#2a2a2a"/><rect x="130.25" y="463.00" width="6.84" height="1.25" fill="#2a2a2a"/><rect x="138.19" y="463.00" width="2.21" height="1.25" fill="#2a2a2a"/><rect x="91.30" y="465.00" width="4.24" height="1.25" fill="#2a2a2a"/><rect x="96.45" y="465.00" width="2.86" height="1.25" fill="#2a2a2a"/><rect x="99.93" y="465.00" width="6.77" height="1.25" fill="#2a2a2a"/><rect x="107.46" y="465.00" width="7.27" height="1.25" fill="#2a2a2a"/><rect x="115.78" y="465.00" width="4.08" height="1.25" fill="#2a2a2a"/><rect x="89.30" y="467.00" width="5.41" height="1.25" fill="#555"/><rect x="95.78" y="467.00" width="4.79" height="1.25" fill="#555"/><rect x="101.39" y="467.00" width="5.96" height="1.25" fill="#555"/><rect x="108.07" y="467.00" width="3.66" height="1.25" fill="#555"/><rect x="112.81" y="467.00" width="4.87" height="1.25" fill="#555"/><rect x="118.55" y="467.00" width="2.06" height="1.25" fill="#555"/><rect x="121.42" y="467.00" width="5.19" height="1.25" fill="#555"/><rect x="127.22" y="467.00" width="5.39" height="1.25" fill="#555"/><rect x="133.52" y="467.00" width="2.33" height="1.25" fill="#555"/><rect x="136.77" y="467.00" width="3.63" height="1.25" fill="#555"/><rect x="89.30" y="469.00" width="2.33" height="1.25" fill="#2a2a2a"/><rect x="92.57" y="469.00" width="7.30" height="1.25" fill="#2a2a2a"/><rect x="100.59" y="469.00" width="4.51" height="1.25" fill="#2a2a2a"/><rect x="106.00" y="469.00" width="3.76" height="1.25" fill="#2a2a2a"/><rect x="110.54" y="469.00" width="3.72" height="1.25" fill="#2a2a2a"/><rect x="115.05" y="469.00" width="5.28" height="1.25" fill="#2a2a2a"/><rect x="121.07" y="469.00" width="4.07" height="1.25" fill="#2a2a2a"/><rect x="126.13" y="469.00" width="2.15" height="1.25" fill="#2a2a2a"/><rect x="129.17" y="469.00" width="6.04" height="1.25" fill="#2a2a2a"/><rect x="135.97" y="469.00" width="3.22" height="1.25" fill="#2a2a2a"/><rect x="89.30" y="471.00" width="2.56" height="1.25" fill="#555"/><rect x="92.62" y="471.00" width="3.84" height="1.25" fill="#555"/><rect x="97.47" y="471.00" width="4.41" height="1.25" fill="#555"/><rect x="102.91" y="471.00" width="2.93" height="1.25" fill="#555"/><rect x="106.61" y="471.00" width="5.58" height="1.25" fill="#555"/><rect x="113.23" y="471.00" width="4.48" height="1.25" fill="#555"/><rect x="118.42" y="471.00" width="2.67" height="1.25" fill="#555"/><rect x="121.95" y="471.00" width="3.05" height="1.25" fill="#555"/><rect x="126.01" y="471.00" width="6.61" height="1.25" fill="#555"/><rect x="133.31" y="471.00" width="3.53" height="1.25" fill="#555"/><rect x="137.85" y="471.00" width="2.55" height="1.25" fill="#555"/><rect x="89.30" y="473.00" width="3.90" height="1.25" fill="#555"/><rect x="94.01" y="473.00" width="4.31" height="1.25" fill="#555"/><rect x="99.13" y="473.00" width="7.06" height="1.25" fill="#555"/><rect x="106.87" y="473.00" width="2.03" height="1.25" fill="#555"/><rect x="109.97" y="473.00" width="2.12" height="1.25" fill="#555"/><rect x="89.30" y="475.00" width="6.10" height="1.25" fill="#2a2a2a"/><rect x="96.42" y="475.00" width="5.65" height="1.25" fill="#2a2a2a"/><rect x="102.92" y="475.00" width="3.59" height="1.25" fill="#2a2a2a"/><rect x="107.28" y="475.00" width="3.25" height="1.25" fill="#2a2a2a"/><rect x="111.17" y="475.00" width="5.24" height="1.25" fill="#2a2a2a"/><rect x="117.15" y="475.00" width="6.46" height="1.25" fill="#2a2a2a"/><rect x="124.23" y="475.00" width="6.97" height="1.25" fill="#2a2a2a"/><rect x="132.15" y="475.00" width="7.08" height="1.25" fill="#2a2a2a"/><rect x="91.30" y="477.00" width="2.95" height="1.25" fill="#555"/><rect x="94.99" y="477.00" width="5.65" height="1.25" fill="#555"/><rect x="101.50" y="477.00" width="4.28" height="1.25" fill="#555"/><rect x="106.85" y="477.00" width="5.37" height="1.25" fill="#555"/><rect x="112.99" y="477.00" width="3.39" height="1.25" fill="#555"/><rect x="117.41" y="477.00" width="4.62" height="1.25" fill="#555"/><rect x="123.02" y="477.00" width="3.94" height="1.25" fill="#555"/><rect x="127.66" y="477.00" width="4.94" height="1.25" fill="#555"/><rect x="133.60" y="477.00" width="2.94" height="1.25" fill="#555"/><rect x="137.54" y="477.00" width="2.86" height="1.25" fill="#555"/><rect x="89.30" y="479.00" width="3.49" height="1.25" fill="#2a2a2a"/><rect x="93.53" y="479.00" width="4.90" height="1.25" fill="#2a2a2a"/><rect x="99.24" y="479.00" width="4.60" height="1.25" fill="#2a2a2a"/><rect x="104.83" y="479.00" width="2.01" height="1.25" fill="#2a2a2a"/><rect x="107.46" y="479.00" width="2.70" height="1.25" fill="#2a2a2a"/><rect x="110.83" y="479.00" width="2.38" height="1.25" fill="#2a2a2a"/><rect x="114.29" y="479.00" width="6.40" height="1.25" fill="#2a2a2a"/><rect x="89.30" y="481.00" width="5.56" height="1.25" fill="#555"/><rect x="95.75" y="481.00" width="3.98" height="1.25" fill="#555"/><rect x="100.43" y="481.00" width="3.81" height="1.25" fill="#555"/><rect x="104.90" y="481.00" width="5.06" height="1.25" fill="#555"/><rect x="110.92" y="481.00" width="4.09" height="1.25" fill="#555"/><rect x="115.65" y="481.00" width="2.98" height="1.25" fill="#555"/><rect x="119.41" y="481.00" width="5.32" height="1.25" fill="#555"/><rect x="125.73" y="481.00" width="4.09" height="1.25" fill="#555"/><rect x="130.82" y="481.00" width="5.43" height="1.25" fill="#555"/><rect x="137.06" y="481.00" width="3.34" height="1.25" fill="#555"/><rect x="89.30" y="483.00" width="3.35" height="1.25" fill="#555"/><rect x="93.52" y="483.00" width="5.82" height="1.25" fill="#555"/><rect x="99.98" y="483.00" width="4.34" height="1.25" fill="#555"/><rect x="105.12" y="483.00" width="6.84" height="1.25" fill="#555"/><rect x="113.03" y="483.00" width="4.06" height="1.25" fill="#555"/><rect x="118.14" y="483.00" width="6.35" height="1.25" fill="#555"/><rect x="125.22" y="483.00" width="4.55" height="1.25" fill="#555"/><rect x="130.43" y="483.00" width="6.47" height="1.25" fill="#555"/><rect x="137.84" y="483.00" width="2.56" height="1.25" fill="#555"/><rect x="89.30" y="485.00" width="5.23" height="1.25" fill="#2a2a2a"/><rect x="95.14" y="485.00" width="2.79" height="1.25" fill="#2a2a2a"/><rect x="98.91" y="485.00" width="2.24" height="1.25" fill="#2a2a2a"/><rect x="101.80" y="485.00" width="2.55" height="1.25" fill="#2a2a2a"/><rect x="105.39" y="485.00" width="2.99" height="1.25" fill="#2a2a2a"/><rect x="108.98" y="485.00" width="6.63" height="1.25" fill="#2a2a2a"/><rect x="116.27" y="485.00" width="6.64" height="1.25" fill="#2a2a2a"/><rect x="123.85" y="485.00" width="6.60" height="1.25" fill="#2a2a2a"/><rect x="131.53" y="485.00" width="5.18" height="1.25" fill="#2a2a2a"/><rect x="137.71" y="485.00" width="2.20" height="1.25" fill="#2a2a2a"/><rect x="89.30" y="487.00" width="7.14" height="1.25" fill="#555"/><rect x="97.07" y="487.00" width="3.78" height="1.25" fill="#555"/><rect x="101.74" y="487.00" width="6.55" height="1.25" fill="#555"/><rect x="109.01" y="487.00" width="2.99" height="1.25" fill="#555"/><rect x="112.73" y="487.00" width="5.39" height="1.25" fill="#555"/><rect x="119.09" y="487.00" width="4.17" height="1.25" fill="#555"/><rect x="124.04" y="487.00" width="4.18" height="1.25" fill="#555"/><rect x="129.00" y="487.00" width="4.30" height="1.25" fill="#555"/><rect x="133.94" y="487.00" width="4.75" height="1.25" fill="#555"/><rect x="139.78" y="487.00" width="0.62" height="1.25" fill="#555"/><rect x="89.30" y="489.00" width="4.84" height="1.25" fill="#555"/><rect x="94.99" y="489.00" width="5.54" height="1.25" fill="#555"/><rect x="101.57" y="489.00" width="2.82" height="1.25" fill="#555"/><rect x="105.04" y="489.00" width="6.11" height="1.25" fill="#555"/><rect x="112.21" y="489.00" width="4.84" height="1.25" fill="#555"/><rect x="117.88" y="489.00" width="5.95" height="1.25" fill="#555"/><rect x="124.53" y="489.00" width="3.47" height="1.25" fill="#555"/><rect x="128.70" y="489.00" width="5.22" height="1.25" fill="#555"/><rect x="134.68" y="489.00" width="3.28" height="1.25" fill="#555"/><rect x="138.90" y="489.00" width="1.50" height="1.25" fill="#555"/><rect x="89.30" y="491.00" width="3.47" height="1.25" fill="#555"/><rect x="93.48" y="491.00" width="2.13" height="1.25" fill="#555"/><rect x="96.45" y="491.00" width="4.11" height="1.25" fill="#555"/><rect x="101.24" y="491.00" width="3.98" height="1.25" fill="#555"/><rect x="105.98" y="491.00" width="6.26" height="1.25" fill="#555"/><rect x="112.91" y="491.00" width="7.45" height="1.25" fill="#555"/><rect x="121.20" y="491.00" width="5.29" height="1.25" fill="#555"/><rect x="127.33" y="491.00" width="6.59" height="1.25" fill="#555"/><rect x="134.93" y="491.00" width="5.06" height="1.25" fill="#555"/><rect x="89.30" y="493.00" width="7.28" height="1.25" fill="#555"/><rect x="97.42" y="493.00" width="3.26" height="1.25" fill="#555"/><rect x="101.40" y="493.00" width="5.95" height="1.25" fill="#555"/><rect x="108.28" y="493.00" width="7.27" height="1.25" fill="#555"/><rect x="116.58" y="493.00" width="3.33" height="1.25" fill="#555"/><rect x="120.61" y="493.00" width="3.42" height="1.25" fill="#555"/><rect x="124.72" y="493.00" width="5.88" height="1.25" fill="#555"/><rect x="131.63" y="493.00" width="6.95" height="1.25" fill="#555"/><rect x="139.30" y="493.00" width="1.10" height="1.25" fill="#555"/><rect x="91.30" y="495.00" width="6.59" height="1.25" fill="#2a2a2a"/><rect x="98.63" y="495.00" width="3.96" height="1.25" fill="#2a2a2a"/><rect x="103.48" y="495.00" width="5.72" height="1.25" fill="#2a2a2a"/><rect x="109.80" y="495.00" width="3.84" height="1.25" fill="#2a2a2a"/><rect x="114.46" y="495.00" width="4.67" height="1.25" fill="#2a2a2a"/><rect x="119.84" y="495.00" width="5.22" height="1.25" fill="#2a2a2a"/><rect x="126.14" y="495.00" width="4.15" height="1.25" fill="#2a2a2a"/><rect x="131.16" y="495.00" width="2.66" height="1.25" fill="#2a2a2a"/><rect x="134.55" y="495.00" width="5.66" height="1.25" fill="#2a2a2a"/><rect x="91.30" y="497.00" width="4.06" height="1.25" fill="#555"/><rect x="96.34" y="497.00" width="6.17" height="1.25" fill="#555"/><rect x="103.26" y="497.00" width="5.72" height="1.25" fill="#555"/><rect x="109.90" y="497.00" width="6.43" height="1.25" fill="#555"/><rect x="117.07" y="497.00" width="6.15" height="1.25" fill="#555"/><rect x="124.30" y="497.00" width="5.70" height="1.25" fill="#555"/><rect x="130.87" y="497.00" width="2.62" height="1.25" fill="#555"/><rect x="134.34" y="497.00" width="3.94" height="1.25" fill="#555"/><rect x="139.23" y="497.00" width="1.17" height="1.25" fill="#555"/><rect x="89.30" y="499.00" width="6.89" height="1.25" fill="#2a2a2a"/><rect x="97.12" y="499.00" width="2.68" height="1.25" fill="#2a2a2a"/><rect x="100.87" y="499.00" width="2.78" height="1.25" fill="#2a2a2a"/><rect x="104.41" y="499.00" width="5.96" height="1.25" fill="#2a2a2a"/><rect x="111.27" y="499.00" width="5.05" height="1.25" fill="#2a2a2a"/><rect x="117.25" y="499.00" width="4.52" height="1.25" fill="#2a2a2a"/><rect x="122.52" y="499.00" width="2.97" height="1.25" fill="#2a2a2a"/><rect x="126.12" y="499.00" width="5.94" height="1.25" fill="#2a2a2a"/><rect x="133.04" y="499.00" width="4.99" height="1.25" fill="#2a2a2a"/><rect x="139.00" y="499.00" width="1.40" height="1.25" fill="#2a2a2a"/><rect x="91.30" y="501.00" width="3.36" height="1.25" fill="#555"/><rect x="95.64" y="501.00" width="3.95" height="1.25" fill="#555"/><rect x="100.36" y="501.00" width="4.22" height="1.25" fill="#555"/><rect x="105.45" y="501.00" width="6.24" height="1.25" fill="#555"/><rect x="112.47" y="501.00" width="6.66" height="1.25" fill="#555"/><rect x="119.78" y="501.00" width="3.49" height="1.25" fill="#555"/><rect x="123.92" y="501.00" width="2.62" height="1.25" fill="#555"/><rect x="127.53" y="501.00" width="6.00" height="1.25" fill="#555"/><rect x="134.22" y="501.00" width="3.04" height="1.25" fill="#555"/><rect x="138.07" y="501.00" width="2.33" height="1.25" fill="#555"/><rect x="89.30" y="503.00" width="3.07" height="1.25" fill="#555"/><rect x="93.23" y="503.00" width="5.13" height="1.25" fill="#555"/><rect x="99.06" y="503.00" width="3.38" height="1.25" fill="#555"/><rect x="103.42" y="503.00" width="2.17" height="1.25" fill="#555"/><rect x="106.59" y="503.00" width="6.90" height="1.25" fill="#555"/><rect x="114.57" y="503.00" width="4.11" height="1.25" fill="#555"/><rect x="119.55" y="503.00" width="5.21" height="1.25" fill="#555"/><rect x="125.67" y="503.00" width="7.37" height="1.25" fill="#555"/><rect x="133.99" y="503.00" width="3.65" height="1.25" fill="#555"/><rect x="138.67" y="503.00" width="1.73" height="1.25" fill="#555"/><rect x="89.30" y="505.00" width="4.88" height="1.25" fill="#555"/><rect x="95.01" y="505.00" width="3.06" height="1.25" fill="#555"/><rect x="98.94" y="505.00" width="2.20" height="1.25" fill="#555"/><rect x="101.99" y="505.00" width="5.55" height="1.25" fill="#555"/><rect x="108.37" y="505.00" width="5.11" height="1.25" fill="#555"/><rect x="114.56" y="505.00" width="6.91" height="1.25" fill="#555"/><rect x="122.13" y="505.00" width="2.18" height="1.25" fill="#555"/><rect x="91.30" y="508.80" width="7.11" height="1.25" fill="#555"/><rect x="99.18" y="508.80" width="6.79" height="1.25" fill="#555"/><rect x="106.91" y="508.80" width="2.74" height="1.25" fill="#555"/><rect x="110.68" y="508.80" width="5.31" height="1.25" fill="#555"/><rect x="117.05" y="508.80" width="5.94" height="1.25" fill="#555"/><rect x="123.96" y="508.80" width="3.89" height="1.25" fill="#555"/><rect x="128.85" y="508.80" width="7.12" height="1.25" fill="#555"/><rect x="137.00" y="508.80" width="3.40" height="1.25" fill="#555"/><rect x="91.30" y="510.80" width="2.88" height="1.25" fill="#2a2a2a"/><rect x="95.03" y="510.80" width="5.85" height="1.25" fill="#2a2a2a"/><rect x="101.75" y="510.80" width="3.97" height="1.25" fill="#2a2a2a"/><rect x="89.30" y="512.80" width="2.99" height="1.25" fill="#555"/><rect x="93.34" y="512.80" width="5.96" height="1.25" fill="#555"/><rect x="100.08" y="512.80" width="4.04" height="1.25" fill="#555"/><rect x="104.99" y="512.80" width="5.28" height="1.25" fill="#555"/><rect x="110.98" y="512.80" width="2.01" height="1.25" fill="#555"/><rect x="113.70" y="512.80" width="6.31" height="1.25" fill="#555"/><rect x="120.68" y="512.80" width="4.53" height="1.25" fill="#555"/><rect x="125.91" y="512.80" width="3.15" height="1.25" fill="#555"/><rect x="129.74" y="512.80" width="4.22" height="1.25" fill="#555"/><rect x="134.65" y="512.80" width="2.15" height="1.25" fill="#555"/><rect x="137.46" y="512.80" width="2.93" height="1.25" fill="#555"/><rect x="89.30" y="518.40" width="4.22" height="1.25" fill="#2a2a2a"/><rect x="94.32" y="518.40" width="2.15" height="1.25" fill="#2a2a2a"/><rect x="97.55" y="518.40" width="3.20" height="1.25" fill="#2a2a2a"/><rect x="101.40" y="518.40" width="4.61" height="1.25" fill="#2a2a2a"/><rect x="106.69" y="518.40" width="5.42" height="1.25" fill="#2a2a2a"/><rect x="112.89" y="518.40" width="2.68" height="1.25" fill="#2a2a2a"/><rect x="116.19" y="518.40" width="6.00" height="1.25" fill="#2a2a2a"/><rect x="122.93" y="518.40" width="6.33" height="1.25" fill="#2a2a2a"/><rect x="130.10" y="518.40" width="7.13" height="1.25" fill="#2a2a2a"/><rect x="137.98" y="518.40" width="2.42" height="1.25" fill="#2a2a2a"/><rect x="89.30" y="520.40" width="5.75" height="1.25" fill="#2a2a2a"/><rect x="96.14" y="520.40" width="5.26" height="1.25" fill="#2a2a2a"/><rect x="102.00" y="520.40" width="2.17" height="1.25" fill="#2a2a2a"/><rect x="104.81" y="520.40" width="2.94" height="1.25" fill="#2a2a2a"/><rect x="108.36" y="520.40" width="2.30" height="1.25" fill="#2a2a2a"/><rect x="111.59" y="520.40" width="6.95" height="1.25" fill="#2a2a2a"/><rect x="119.24" y="520.40" width="7.36" height="1.25" fill="#2a2a2a"/><rect x="127.43" y="520.40" width="6.42" height="1.25" fill="#2a2a2a"/><rect x="134.91" y="520.40" width="5.49" height="1.25" fill="#2a2a2a"/><rect x="89.30" y="522.40" width="3.61" height="1.25" fill="#2a2a2a"/><rect x="93.94" y="522.40" width="2.63" height="1.25" fill="#2a2a2a"/><rect x="97.36" y="522.40" width="3.84" height="1.25" fill="#2a2a2a"/><rect x="102.14" y="522.40" width="7.11" height="1.25" fill="#2a2a2a"/><rect x="109.94" y="522.40" width="6.07" height="1.25" fill="#2a2a2a"/><rect x="116.97" y="522.40" width="6.60" height="1.25" fill="#2a2a2a"/><rect x="124.45" y="522.40" width="7.08" height="1.25" fill="#2a2a2a"/><rect x="132.31" y="522.40" width="4.28" height="1.25" fill="#2a2a2a"/><rect x="137.30" y="522.40" width="3.10" height="1.25" fill="#2a2a2a"/><rect x="89.30" y="524.40" width="4.13" height="1.25" fill="#555"/><rect x="94.27" y="524.40" width="2.85" height="1.25" fill="#555"/><rect x="98.07" y="524.40" width="2.13" height="1.25" fill="#555"/><rect x="101.03" y="524.40" width="6.17" height="1.25" fill="#555"/><rect x="108.14" y="524.40" width="2.53" height="1.25" fill="#555"/><rect x="111.40" y="524.40" width="6.64" height="1.25" fill="#555"/><rect x="118.96" y="524.40" width="4.09" height="1.25" fill="#555"/><rect x="89.30" y="526.40" width="4.04" height="1.25" fill="#555"/><rect x="93.97" y="526.40" width="4.20" height="1.25" fill="#555"/><rect x="99.25" y="526.40" width="2.58" height="1.25" fill="#555"/><rect x="102.71" y="526.40" width="2.61" height="1.25" fill="#555"/><rect x="105.95" y="526.40" width="5.57" height="1.25" fill="#555"/><rect x="112.24" y="526.40" width="2.27" height="1.25" fill="#555"/><rect x="115.19" y="526.40" width="5.55" height="1.25" fill="#555"/><rect x="121.63" y="526.40" width="2.06" height="1.25" fill="#555"/><rect x="124.41" y="526.40" width="7.32" height="1.25" fill="#555"/><rect x="132.44" y="526.40" width="5.09" height="1.25" fill="#555"/><rect x="138.34" y="526.40" width="2.06" height="1.25" fill="#555"/><rect x="89.30" y="528.40" width="2.44" height="1.25" fill="#2a2a2a"/><rect x="92.75" y="528.40" width="2.62" height="1.25" fill="#2a2a2a"/><rect x="95.98" y="528.40" width="7.32" height="1.25" fill="#2a2a2a"/><rect x="103.99" y="528.40" width="6.91" height="1.25" fill="#2a2a2a"/><rect x="111.55" y="528.40" width="4.56" height="1.25" fill="#2a2a2a"/><rect x="116.82" y="528.40" width="6.56" height="1.25" fill="#2a2a2a"/><rect x="124.29" y="528.40" width="5.53" height="1.25" fill="#2a2a2a"/><rect x="130.80" y="528.40" width="6.79" height="1.25" fill="#2a2a2a"/><rect x="138.37" y="528.40" width="2.03" height="1.25" fill="#2a2a2a"/><rect x="89.30" y="532.20" width="4.97" height="1.25" fill="#2a2a2a"/><rect x="95.10" y="532.20" width="6.00" height="1.25" fill="#2a2a2a"/><rect x="101.74" y="532.20" width="3.90" height="1.25" fill="#2a2a2a"/><rect x="106.49" y="532.20" width="2.39" height="1.25" fill="#2a2a2a"/><rect x="109.76" y="532.20" width="6.04" height="1.25" fill="#2a2a2a"/><rect x="116.61" y="532.20" width="5.57" height="1.25" fill="#2a2a2a"/><rect x="123.08" y="532.20" width="3.18" height="1.25" fill="#2a2a2a"/><rect x="127.03" y="532.20" width="7.48" height="1.25" fill="#2a2a2a"/><rect x="135.28" y="532.20" width="4.37" height="1.25" fill="#2a2a2a"/><rect x="89.30" y="534.20" width="7.43" height="1.25" fill="#555"/><rect x="97.63" y="534.20" width="7.12" height="1.25" fill="#555"/><rect x="105.62" y="534.20" width="4.30" height="1.25" fill="#555"/><rect x="111.00" y="534.20" width="6.97" height="1.25" fill="#555"/><rect x="119.04" y="534.20" width="4.66" height="1.25" fill="#555"/><rect x="124.69" y="534.20" width="3.72" height="1.25" fill="#555"/><rect x="89.30" y="536.20" width="2.53" height="1.25" fill="#2a2a2a"/><rect x="92.79" y="536.20" width="3.62" height="1.25" fill="#2a2a2a"/><rect x="97.27" y="536.20" width="5.52" height="1.25" fill="#2a2a2a"/><rect x="103.40" y="536.20" width="6.10" height="1.25" fill="#2a2a2a"/><rect x="110.24" y="536.20" width="4.38" height="1.25" fill="#2a2a2a"/><rect x="115.39" y="536.20" width="6.08" height="1.25" fill="#2a2a2a"/><rect x="122.44" y="536.20" width="3.58" height="1.25" fill="#2a2a2a"/><rect x="126.68" y="536.20" width="3.65" height="1.25" fill="#2a2a2a"/><rect x="131.13" y="536.20" width="2.43" height="1.25" fill="#2a2a2a"/><rect x="134.23" y="536.20" width="6.17" height="1.25" fill="#2a2a2a"/><rect x="89.30" y="538.20" width="2.89" height="1.25" fill="#555"/><rect x="92.94" y="538.20" width="4.55" height="1.25" fill="#555"/><rect x="98.35" y="538.20" width="4.98" height="1.25" fill="#555"/><rect x="104.11" y="538.20" width="6.69" height="1.25" fill="#555"/><rect x="111.55" y="538.20" width="4.55" height="1.25" fill="#555"/><rect x="117.14" y="538.20" width="6.44" height="1.25" fill="#555"/><rect x="124.33" y="538.20" width="3.33" height="1.25" fill="#555"/><rect x="128.66" y="538.20" width="2.06" height="1.25" fill="#555"/><rect x="131.38" y="538.20" width="4.92" height="1.25" fill="#555"/><rect x="137.17" y="538.20" width="2.91" height="1.25" fill="#555"/><rect x="89.30" y="540.20" width="6.32" height="1.25" fill="#555"/><rect x="96.71" y="540.20" width="2.19" height="1.25" fill="#555"/><rect x="99.60" y="540.20" width="2.07" height="1.25" fill="#555"/><rect x="102.48" y="540.20" width="3.86" height="1.25" fill="#555"/><rect x="106.97" y="540.20" width="5.00" height="1.25" fill="#555"/><rect x="112.62" y="540.20" width="3.71" height="1.25" fill="#555"/><rect x="117.06" y="540.20" width="6.41" height="1.25" fill="#555"/><rect x="124.28" y="540.20" width="3.43" height="1.25" fill="#555"/><rect x="128.33" y="540.20" width="4.36" height="1.25" fill="#555"/><rect x="133.61" y="540.20" width="5.71" height="1.25" fill="#555"/><rect x="89.30" y="542.20" width="6.34" height="1.25" fill="#555"/><rect x="96.50" y="542.20" width="6.57" height="1.25" fill="#555"/><rect x="103.94" y="542.20" width="3.54" height="1.25" fill="#555"/><rect x="108.17" y="542.20" width="2.09" height="1.25" fill="#555"/><rect x="111.18" y="542.20" width="6.93" height="1.25" fill="#555"/><rect x="119.17" y="542.20" width="4.57" height="1.25" fill="#555"/><rect x="124.67" y="542.20" width="7.11" height="1.25" fill="#555"/><rect x="132.79" y="542.20" width="5.31" height="1.25" fill="#555"/><rect x="138.91" y="542.20" width="1.49" height="1.25" fill="#555"/><rect x="89.30" y="544.20" width="4.24" height="1.25" fill="#555"/><rect x="94.32" y="544.20" width="4.50" height="1.25" fill="#555"/><rect x="99.82" y="544.20" width="4.49" height="1.25" fill="#555"/><rect x="105.39" y="544.20" width="2.85" height="1.25" fill="#555"/><rect x="109.00" y="544.20" width="4.87" height="1.25" fill="#555"/><rect x="114.68" y="544.20" width="6.68" height="1.25" fill="#555"/><rect x="122.38" y="544.20" width="7.12" height="1.25" fill="#555"/><rect x="130.40" y="544.20" width="2.17" height="1.25" fill="#555"/><rect x="133.46" y="544.20" width="5.02" height="1.25" fill="#555"/><rect x="139.33" y="544.20" width="1.07" height="1.25" fill="#555"/><rect x="89.30" y="546.20" width="6.93" height="1.25" fill="#555"/><rect x="97.31" y="546.20" width="5.54" height="1.25" fill="#555"/><rect x="103.54" y="546.20" width="7.06" height="1.25" fill="#555"/><rect x="111.30" y="546.20" width="4.11" height="1.25" fill="#555"/><rect x="116.42" y="546.20" width="3.74" height="1.25" fill="#555"/><rect x="120.89" y="546.20" width="0.82" height="1.25" fill="#555"/><rect x="89.30" y="548.20" width="3.38" height="1.25" fill="#2a2a2a"/><rect x="93.77" y="548.20" width="2.44" height="1.25" fill="#2a2a2a"/><rect x="96.92" y="548.20" width="3.10" height="1.25" fill="#2a2a2a"/><rect x="100.66" y="548.20" width="4.89" height="1.25" fill="#2a2a2a"/><rect x="106.52" y="548.20" width="6.61" height="1.25" fill="#2a2a2a"/><rect x="114.05" y="548.20" width="6.50" height="1.25" fill="#2a2a2a"/><rect x="121.15" y="548.20" width="3.55" height="1.25" fill="#2a2a2a"/><rect x="125.78" y="548.20" width="2.38" height="1.25" fill="#2a2a2a"/><rect x="128.90" y="548.20" width="4.66" height="1.25" fill="#2a2a2a"/><rect x="134.29" y="548.20" width="5.00" height="1.25" fill="#2a2a2a"/><rect x="89.30" y="550.20" width="2.98" height="1.25" fill="#555"/><rect x="93.37" y="550.20" width="5.71" height="1.25" fill="#555"/><rect x="100.01" y="550.20" width="2.78" height="1.25" fill="#555"/><rect x="103.42" y="550.20" width="6.18" height="1.25" fill="#555"/><rect x="110.28" y="550.20" width="3.04" height="1.25" fill="#555"/><rect x="114.34" y="550.20" width="6.81" height="1.25" fill="#555"/><rect x="121.77" y="550.20" width="7.28" height="1.25" fill="#555"/><rect x="129.92" y="550.20" width="4.10" height="1.25" fill="#555"/><rect x="134.68" y="550.20" width="4.14" height="1.25" fill="#555"/><rect x="89.30" y="552.20" width="7.03" height="1.25" fill="#555"/><rect x="96.97" y="552.20" width="3.06" height="1.25" fill="#555"/><rect x="101.10" y="552.20" width="7.24" height="1.25" fill="#555"/><rect x="89.30" y="554.20" width="5.87" height="1.25" fill="#555"/><rect x="95.93" y="554.20" width="2.12" height="1.25" fill="#555"/><rect x="98.82" y="554.20" width="6.11" height="1.25" fill="#555"/><rect x="105.92" y="554.20" width="5.13" height="1.25" fill="#555"/><rect x="111.88" y="554.20" width="4.96" height="1.25" fill="#555"/><rect x="117.66" y="554.20" width="4.94" height="1.25" fill="#555"/><rect x="123.62" y="554.20" width="3.10" height="1.25" fill="#555"/><rect x="127.62" y="554.20" width="7.13" height="1.25" fill="#555"/><rect x="135.77" y="554.20" width="2.99" height="1.25" fill="#555"/><rect x="139.84" y="554.20" width="0.56" height="1.25" fill="#555"/><rect x="91.30" y="556.20" width="4.25" height="1.25" fill="#555"/><rect x="96.59" y="556.20" width="2.63" height="1.25" fill="#555"/><rect x="99.82" y="556.20" width="6.78" height="1.25" fill="#555"/><rect x="107.61" y="556.20" width="7.45" height="1.25" fill="#555"/><rect x="116.00" y="556.20" width="4.89" height="1.25" fill="#555"/><rect x="121.87" y="556.20" width="2.51" height="1.25" fill="#555"/><rect x="125.25" y="556.20" width="4.43" height="1.25" fill="#555"/><rect x="130.35" y="556.20" width="5.30" height="1.25" fill="#555"/><rect x="136.42" y="556.20" width="3.98" height="1.25" fill="#555"/><rect x="89.30" y="558.20" width="7.15" height="1.25" fill="#555"/><rect x="97.48" y="558.20" width="6.59" height="1.25" fill="#555"/><rect x="104.82" y="558.20" width="7.37" height="1.25" fill="#555"/><rect x="112.92" y="558.20" width="2.68" height="1.25" fill="#555"/><rect x="116.45" y="558.20" width="6.03" height="1.25" fill="#555"/><rect x="123.25" y="558.20" width="5.55" height="1.25" fill="#555"/><rect x="129.54" y="558.20" width="7.32" height="1.25" fill="#555"/><rect x="137.68" y="558.20" width="2.72" height="1.25" fill="#555"/><rect x="89.30" y="560.20" width="5.40" height="1.25" fill="#555"/><rect x="95.33" y="560.20" width="4.34" height="1.25" fill="#555"/><rect x="100.70" y="560.20" width="6.28" height="1.25" fill="#555"/><rect x="107.60" y="560.20" width="6.70" height="1.25" fill="#555"/><rect x="115.09" y="560.20" width="7.40" height="1.25" fill="#555"/><rect x="123.27" y="560.20" width="3.18" height="1.25" fill="#555"/><rect x="127.33" y="560.20" width="6.86" height="1.25" fill="#555"/><rect x="135.01" y="560.20" width="5.39" height="1.25" fill="#555"/><rect x="89.30" y="562.20" width="4.05" height="1.25" fill="#555"/><rect x="94.27" y="562.20" width="6.81" height="1.25" fill="#555"/><rect x="101.98" y="562.20" width="2.80" height="1.25" fill="#555"/><rect x="105.49" y="562.20" width="4.04" height="1.25" fill="#555"/><rect x="110.44" y="562.20" width="2.77" height="1.25" fill="#555"/><rect x="113.85" y="562.20" width="3.76" height="1.25" fill="#555"/><rect x="118.35" y="562.20" width="2.16" height="1.25" fill="#555"/><rect x="121.39" y="562.20" width="7.07" height="1.25" fill="#555"/><rect x="129.32" y="562.20" width="6.06" height="1.25" fill="#555"/><rect x="136.39" y="562.20" width="4.01" height="1.25" fill="#555"/><rect x="89.30" y="564.20" width="4.08" height="1.25" fill="#555"/><rect x="94.22" y="564.20" width="6.90" height="1.25" fill="#555"/><rect x="101.86" y="564.20" width="3.04" height="1.25" fill="#555"/><rect x="105.91" y="564.20" width="5.29" height="1.25" fill="#555"/><rect x="111.85" y="564.20" width="2.15" height="1.25" fill="#555"/><rect x="114.78" y="564.20" width="2.04" height="1.25" fill="#555"/><rect x="117.84" y="564.20" width="3.01" height="1.25" fill="#555"/><rect x="121.58" y="564.20" width="4.14" height="1.25" fill="#555"/><rect x="126.58" y="564.20" width="4.38" height="1.25" fill="#555"/><rect x="131.87" y="564.20" width="5.63" height="1.25" fill="#555"/><rect x="138.32" y="564.20" width="2.08" height="1.25" fill="#555"/><rect x="89.30" y="566.20" width="2.36" height="1.25" fill="#555"/><rect x="92.27" y="566.20" width="4.64" height="1.25" fill="#555"/><rect x="97.72" y="566.20" width="6.92" height="1.25" fill="#555"/><rect x="105.65" y="566.20" width="3.82" height="1.25" fill="#555"/><rect x="110.28" y="566.20" width="5.21" height="1.25" fill="#555"/><rect x="91.30" y="568.20" width="2.15" height="1.25" fill="#555"/><rect x="94.51" y="568.20" width="4.88" height="1.25" fill="#555"/><rect x="100.28" y="568.20" width="2.47" height="1.25" fill="#555"/><rect x="103.47" y="568.20" width="4.58" height="1.25" fill="#555"/><rect x="109.07" y="568.20" width="4.96" height="1.25" fill="#555"/><rect x="114.78" y="568.20" width="7.40" height="1.25" fill="#555"/><rect x="123.11" y="568.20" width="4.91" height="1.25" fill="#555"/><rect x="128.72" y="568.20" width="3.64" height="1.25" fill="#555"/><rect x="133.41" y="568.20" width="2.73" height="1.25" fill="#555"/><rect x="137.01" y="568.20" width="3.39" height="1.25" fill="#555"/><rect x="89.30" y="570.20" width="3.12" height="1.25" fill="#555"/><rect x="93.05" y="570.20" width="4.38" height="1.25" fill="#555"/><rect x="98.19" y="570.20" width="3.07" height="1.25" fill="#555"/><rect x="102.29" y="570.20" width="3.19" height="1.25" fill="#555"/><rect x="106.49" y="570.20" width="7.16" height="1.25" fill="#555"/><rect x="114.31" y="570.20" width="7.02" height="1.25" fill="#555"/><rect x="122.13" y="570.20" width="3.17" height="1.25" fill="#555"/><rect x="125.99" y="570.20" width="2.21" height="1.25" fill="#555"/><rect x="129.04" y="570.20" width="4.11" height="1.25" fill="#555"/><rect x="134.18" y="570.20" width="6.22" height="1.25" fill="#555"/><rect x="89.30" y="572.20" width="3.45" height="1.25" fill="#555"/><rect x="93.70" y="572.20" width="3.87" height="1.25" fill="#555"/><rect x="98.22" y="572.20" width="3.21" height="1.25" fill="#555"/><rect x="102.26" y="572.20" width="5.11" height="1.25" fill="#555"/><rect x="108.08" y="572.20" width="5.85" height="1.25" fill="#555"/><rect x="114.64" y="572.20" width="5.69" height="1.25" fill="#555"/><rect x="121.23" y="572.20" width="2.97" height="1.25" fill="#555"/><rect x="125.18" y="572.20" width="4.17" height="1.25" fill="#555"/><rect x="130.21" y="572.20" width="5.29" height="1.25" fill="#555"/><rect x="136.42" y="572.20" width="3.98" height="1.25" fill="#555"/><rect x="89.30" y="574.20" width="3.48" height="1.25" fill="#555"/><rect x="93.83" y="574.20" width="5.77" height="1.25" fill="#555"/><rect x="100.31" y="574.20" width="6.50" height="1.25" fill="#555"/><rect x="107.90" y="574.20" width="3.90" height="1.25" fill="#555"/><rect x="112.90" y="574.20" width="4.66" height="1.25" fill="#555"/><rect x="118.24" y="574.20" width="5.94" height="1.25" fill="#555"/><rect x="124.96" y="574.20" width="6.03" height="1.25" fill="#555"/><rect x="131.88" y="574.20" width="2.59" height="1.25" fill="#555"/><rect x="135.33" y="574.20" width="5.07" height="1.25" fill="#555"/><rect x="89.30" y="576.20" width="5.21" height="1.25" fill="#555"/><rect x="95.52" y="576.20" width="3.12" height="1.25" fill="#555"/><rect x="99.28" y="576.20" width="6.19" height="1.25" fill="#555"/><rect x="106.34" y="576.20" width="3.67" height="1.25" fill="#555"/><rect x="111.06" y="576.20" width="6.87" height="1.25" fill="#555"/><rect x="118.79" y="576.20" width="7.44" height="1.25" fill="#555"/><rect x="127.25" y="576.20" width="6.11" height="1.25" fill="#555"/><rect x="134.11" y="576.20" width="2.06" height="1.25" fill="#555"/><rect x="137.10" y="576.20" width="3.30" height="1.25" fill="#555"/><rect x="89.30" y="578.20" width="5.09" height="1.25" fill="#555"/><rect x="95.19" y="578.20" width="2.60" height="1.25" fill="#555"/><rect x="98.67" y="578.20" width="3.76" height="1.25" fill="#555"/><rect x="103.39" y="578.20" width="2.95" height="1.25" fill="#555"/><rect x="107.13" y="578.20" width="3.08" height="1.25" fill="#555"/><rect x="111.02" y="578.20" width="5.17" height="1.25" fill="#555"/><rect x="116.84" y="578.20" width="2.30" height="1.25" fill="#555"/><rect x="119.98" y="578.20" width="3.11" height="1.25" fill="#555"/><rect x="123.94" y="578.20" width="2.92" height="1.25" fill="#555"/><rect x="127.51" y="578.20" width="4.96" height="1.25" fill="#555"/><rect x="133.53" y="578.20" width="6.78" height="1.25" fill="#555"/><rect x="89.30" y="580.20" width="2.64" height="1.25" fill="#555"/><rect x="93.02" y="580.20" width="4.62" height="1.25" fill="#555"/><rect x="98.46" y="580.20" width="3.44" height="1.25" fill="#555"/><rect x="102.98" y="580.20" width="3.02" height="1.25" fill="#555"/><rect x="106.89" y="580.20" width="4.80" height="1.25" fill="#555"/><rect x="144.60" y="457.00" width="6.97" height="1.25" fill="#555"/><rect x="152.22" y="457.00" width="5.87" height="1.25" fill="#555"/><rect x="159.06" y="457.00" width="3.24" height="1.25" fill="#555"/><rect x="163.13" y="457.00" width="7.36" height="1.25" fill="#555"/><rect x="171.25" y="457.00" width="6.19" height="1.25" fill="#555"/><rect x="178.13" y="457.00" width="5.67" height="1.25" fill="#555"/><rect x="184.53" y="457.00" width="4.80" height="1.25" fill="#555"/><rect x="190.12" y="457.00" width="5.68" height="1.25" fill="#555"/><rect x="144.60" y="459.00" width="3.42" height="1.25" fill="#555"/><rect x="148.89" y="459.00" width="5.22" height="1.25" fill="#555"/><rect x="154.90" y="459.00" width="2.26" height="1.25" fill="#555"/><rect x="157.84" y="459.00" width="5.52" height="1.25" fill="#555"/><rect x="164.07" y="459.00" width="6.17" height="1.25" fill="#555"/><rect x="171.09" y="459.00" width="7.24" height="1.25" fill="#555"/><rect x="179.36" y="459.00" width="6.00" height="1.25" fill="#555"/><rect x="186.15" y="459.00" width="2.24" height="1.25" fill="#555"/><rect x="189.27" y="459.00" width="6.10" height="1.25" fill="#555"/><rect x="144.60" y="461.00" width="6.06" height="1.25" fill="#555"/><rect x="151.34" y="461.00" width="4.99" height="1.25" fill="#555"/><rect x="157.26" y="461.00" width="5.32" height="1.25" fill="#555"/><rect x="163.26" y="461.00" width="2.75" height="1.25" fill="#555"/><rect x="166.93" y="461.00" width="6.86" height="1.25" fill="#555"/><rect x="174.46" y="461.00" width="2.04" height="1.25" fill="#555"/><rect x="177.14" y="461.00" width="6.32" height="1.25" fill="#555"/><rect x="184.26" y="461.00" width="0.80" height="1.25" fill="#555"/><rect x="144.60" y="463.00" width="3.55" height="1.25" fill="#2a2a2a"/><rect x="149.10" y="463.00" width="2.94" height="1.25" fill="#2a2a2a"/><rect x="152.65" y="463.00" width="4.85" height="1.25" fill="#2a2a2a"/><rect x="158.27" y="463.00" width="7.34" height="1.25" fill="#2a2a2a"/><rect x="166.26" y="463.00" width="6.41" height="1.25" fill="#2a2a2a"/><rect x="173.47" y="463.00" width="6.43" height="1.25" fill="#2a2a2a"/><rect x="180.72" y="463.00" width="5.67" height="1.25" fill="#2a2a2a"/><rect x="187.15" y="463.00" width="3.24" height="1.25" fill="#2a2a2a"/><rect x="191.21" y="463.00" width="4.59" height="1.25" fill="#2a2a2a"/><rect x="146.60" y="465.00" width="5.15" height="1.25" fill="#555"/><rect x="152.62" y="465.00" width="5.29" height="1.25" fill="#555"/><rect x="158.65" y="465.00" width="2.14" height="1.25" fill="#555"/><rect x="161.40" y="465.00" width="3.86" height="1.25" fill="#555"/><rect x="165.97" y="465.00" width="5.13" height="1.25" fill="#555"/><rect x="171.83" y="465.00" width="6.19" height="1.25" fill="#555"/><rect x="178.92" y="465.00" width="5.64" height="1.25" fill="#555"/><rect x="185.53" y="465.00" width="4.87" height="1.25" fill="#555"/><rect x="191.21" y="465.00" width="3.70" height="1.25" fill="#555"/><rect x="146.60" y="467.00" width="5.20" height="1.25" fill="#555"/><rect x="152.71" y="467.00" width="4.41" height="1.25" fill="#555"/><rect x="157.79" y="467.00" width="7.50" height="1.25" fill="#555"/><rect x="165.97" y="467.00" width="4.01" height="1.25" fill="#555"/><rect x="171.08" y="467.00" width="2.67" height="1.25" fill="#555"/><rect x="174.61" y="467.00" width="4.64" height="1.25" fill="#555"/><rect x="179.97" y="467.00" width="7.09" height="1.25" fill="#555"/><rect x="187.86" y="467.00" width="2.06" height="1.25" fill="#555"/><rect x="190.76" y="467.00" width="2.03" height="1.25" fill="#555"/><rect x="193.74" y="467.00" width="2.06" height="1.25" fill="#555"/><rect x="144.60" y="470.80" width="3.68" height="1.25" fill="#555"/><rect x="148.94" y="470.80" width="5.44" height="1.25" fill="#555"/><rect x="155.03" y="470.80" width="7.30" height="1.25" fill="#555"/><rect x="162.95" y="470.80" width="7.30" height="1.25" fill="#555"/><rect x="170.95" y="470.80" width="2.46" height="1.25" fill="#555"/><rect x="174.38" y="470.80" width="4.92" height="1.25" fill="#555"/><rect x="180.29" y="470.80" width="4.80" height="1.25" fill="#555"/><rect x="186.00" y="470.80" width="2.45" height="1.25" fill="#555"/><rect x="189.39" y="470.80" width="4.82" height="1.25" fill="#555"/><rect x="195.29" y="470.80" width="0.51" height="1.25" fill="#555"/><rect x="144.60" y="472.80" width="5.08" height="1.25" fill="#555"/><rect x="150.48" y="472.80" width="4.56" height="1.25" fill="#555"/><rect x="155.94" y="472.80" width="2.16" height="1.25" fill="#555"/><rect x="158.85" y="472.80" width="6.06" height="1.25" fill="#555"/><rect x="165.64" y="472.80" width="4.60" height="1.25" fill="#555"/><rect x="170.97" y="472.80" width="3.97" height="1.25" fill="#555"/><rect x="175.86" y="472.80" width="6.09" height="1.25" fill="#555"/><rect x="183.03" y="472.80" width="4.62" height="1.25" fill="#555"/><rect x="188.35" y="472.80" width="3.85" height="1.25" fill="#555"/><rect x="192.84" y="472.80" width="2.96" height="1.25" fill="#555"/><rect x="144.60" y="474.80" width="2.98" height="1.25" fill="#2a2a2a"/><rect x="148.43" y="474.80" width="3.40" height="1.25" fill="#2a2a2a"/><rect x="152.88" y="474.80" width="5.11" height="1.25" fill="#2a2a2a"/><rect x="158.76" y="474.80" width="4.37" height="1.25" fill="#2a2a2a"/><rect x="163.75" y="474.80" width="6.03" height="1.25" fill="#2a2a2a"/><rect x="170.75" y="474.80" width="4.00" height="1.25" fill="#2a2a2a"/><rect x="175.72" y="474.80" width="3.50" height="1.25" fill="#2a2a2a"/><rect x="179.92" y="474.80" width="3.26" height="1.25" fill="#2a2a2a"/><rect x="183.88" y="474.80" width="5.33" height="1.25" fill="#2a2a2a"/><rect x="190.13" y="474.80" width="5.67" height="1.25" fill="#2a2a2a"/><rect x="144.60" y="476.80" width="4.38" height="1.25" fill="#555"/><rect x="149.68" y="476.80" width="4.17" height="1.25" fill="#555"/><rect x="154.78" y="476.80" width="5.93" height="1.25" fill="#555"/><rect x="161.77" y="476.80" width="3.07" height="1.25" fill="#555"/><rect x="165.88" y="476.80" width="6.40" height="1.25" fill="#555"/><rect x="173.24" y="476.80" width="7.39" height="1.25" fill="#555"/><rect x="181.30" y="476.80" width="6.27" height="1.25" fill="#555"/><rect x="188.62" y="476.80" width="2.67" height="1.25" fill="#555"/><rect x="192.19" y="476.80" width="3.61" height="1.25" fill="#555"/><rect x="144.60" y="478.80" width="3.19" height="1.25" fill="#2a2a2a"/><rect x="148.80" y="478.80" width="4.32" height="1.25" fill="#2a2a2a"/><rect x="153.88" y="478.80" width="4.44" height="1.25" fill="#2a2a2a"/><rect x="159.38" y="478.80" width="3.40" height="1.25" fill="#2a2a2a"/><rect x="163.39" y="478.80" width="7.22" height="1.25" fill="#2a2a2a"/><rect x="171.37" y="478.80" width="4.12" height="1.25" fill="#2a2a2a"/><rect x="176.57" y="478.80" width="3.55" height="1.25" fill="#2a2a2a"/><rect x="180.77" y="478.80" width="6.88" height="1.25" fill="#2a2a2a"/><rect x="188.37" y="478.80" width="3.22" height="1.25" fill="#2a2a2a"/><rect x="192.66" y="478.80" width="3.14" height="1.25" fill="#2a2a2a"/><rect x="144.60" y="480.80" width="5.08" height="1.25" fill="#555"/><rect x="150.48" y="480.80" width="4.79" height="1.25" fill="#555"/><rect x="156.02" y="480.80" width="6.61" height="1.25" fill="#555"/><rect x="163.69" y="480.80" width="6.14" height="1.25" fill="#555"/><rect x="170.85" y="480.80" width="2.39" height="1.25" fill="#555"/><rect x="173.96" y="480.80" width="3.12" height="1.25" fill="#555"/><rect x="177.76" y="480.80" width="7.33" height="1.25" fill="#555"/><rect x="186.14" y="480.80" width="7.03" height="1.25" fill="#555"/><rect x="194.04" y="480.80" width="1.76" height="1.25" fill="#555"/><rect x="144.60" y="484.60" width="3.10" height="1.25" fill="#555"/><rect x="148.76" y="484.60" width="3.71" height="1.25" fill="#555"/><rect x="153.41" y="484.60" width="2.59" height="1.25" fill="#555"/><rect x="157.04" y="484.60" width="4.19" height="1.25" fill="#555"/><rect x="162.01" y="484.60" width="5.60" height="1.25" fill="#555"/><rect x="168.50" y="484.60" width="3.38" height="1.25" fill="#555"/><rect x="172.55" y="484.60" width="5.17" height="1.25" fill="#555"/><rect x="178.32" y="484.60" width="6.79" height="1.25" fill="#555"/><rect x="185.89" y="484.60" width="2.93" height="1.25" fill="#555"/><rect x="189.59" y="484.60" width="2.63" height="1.25" fill="#555"/><rect x="192.97" y="484.60" width="2.83" height="1.25" fill="#555"/><rect x="144.60" y="486.60" width="4.41" height="1.25" fill="#555"/><rect x="149.99" y="486.60" width="4.65" height="1.25" fill="#555"/><rect x="155.31" y="486.60" width="2.94" height="1.25" fill="#555"/><rect x="159.27" y="486.60" width="4.64" height="1.25" fill="#555"/><rect x="164.69" y="486.60" width="4.84" height="1.25" fill="#555"/><rect x="170.55" y="486.60" width="4.06" height="1.25" fill="#555"/><rect x="175.40" y="486.60" width="4.01" height="1.25" fill="#555"/><rect x="180.02" y="486.60" width="5.00" height="1.25" fill="#555"/><rect x="185.85" y="486.60" width="4.73" height="1.25" fill="#555"/><rect x="191.41" y="486.60" width="4.39" height="1.25" fill="#555"/><rect x="144.60" y="488.60" width="2.96" height="1.25" fill="#555"/><rect x="148.56" y="488.60" width="3.43" height="1.25" fill="#555"/><rect x="152.63" y="488.60" width="4.97" height="1.25" fill="#555"/><rect x="158.63" y="488.60" width="6.65" height="1.25" fill="#555"/><rect x="166.31" y="488.60" width="7.39" height="1.25" fill="#555"/><rect x="174.33" y="488.60" width="4.08" height="1.25" fill="#555"/><rect x="179.07" y="488.60" width="6.15" height="1.25" fill="#555"/><rect x="186.05" y="488.60" width="6.09" height="1.25" fill="#555"/><rect x="193.14" y="488.60" width="2.66" height="1.25" fill="#555"/><rect x="146.60" y="490.60" width="2.50" height="1.25" fill="#555"/><rect x="149.74" y="490.60" width="6.57" height="1.25" fill="#555"/><rect x="157.05" y="490.60" width="5.64" height="1.25" fill="#555"/><rect x="163.31" y="490.60" width="3.16" height="1.25" fill="#555"/><rect x="167.43" y="490.60" width="2.21" height="1.25" fill="#555"/><rect x="170.49" y="490.60" width="7.16" height="1.25" fill="#555"/><rect x="178.35" y="490.60" width="5.88" height="1.25" fill="#555"/><rect x="185.20" y="490.60" width="5.41" height="1.25" fill="#555"/><rect x="191.59" y="490.60" width="4.21" height="1.25" fill="#555"/><rect x="144.60" y="492.60" width="5.23" height="1.25" fill="#2a2a2a"/><rect x="150.49" y="492.60" width="6.66" height="1.25" fill="#2a2a2a"/><rect x="157.97" y="492.60" width="4.87" height="1.25" fill="#2a2a2a"/><rect x="163.78" y="492.60" width="2.75" height="1.25" fill="#2a2a2a"/><rect x="167.49" y="492.60" width="6.40" height="1.25" fill="#2a2a2a"/><rect x="174.92" y="492.60" width="3.55" height="1.25" fill="#2a2a2a"/><rect x="179.19" y="492.60" width="2.91" height="1.25" fill="#2a2a2a"/><rect x="183.14" y="492.60" width="4.41" height="1.25" fill="#2a2a2a"/><rect x="188.35" y="492.60" width="4.86" height="1.25" fill="#2a2a2a"/><rect x="194.16" y="492.60" width="1.64" height="1.25" fill="#2a2a2a"/><rect x="144.60" y="494.60" width="7.10" height="1.25" fill="#2a2a2a"/><rect x="152.67" y="494.60" width="5.27" height="1.25" fill="#2a2a2a"/><rect x="158.74" y="494.60" width="7.27" height="1.25" fill="#2a2a2a"/><rect x="166.83" y="494.60" width="3.19" height="1.25" fill="#2a2a2a"/><rect x="170.67" y="494.60" width="3.93" height="1.25" fill="#2a2a2a"/><rect x="175.50" y="494.60" width="4.00" height="1.25" fill="#2a2a2a"/><rect x="180.58" y="494.60" width="5.57" height="1.25" fill="#2a2a2a"/><rect x="186.98" y="494.60" width="5.63" height="1.25" fill="#2a2a2a"/><rect x="193.51" y="494.60" width="2.29" height="1.25" fill="#2a2a2a"/><rect x="144.60" y="496.60" width="6.32" height="1.25" fill="#2a2a2a"/><rect x="151.67" y="496.60" width="6.67" height="1.25" fill="#2a2a2a"/><rect x="158.97" y="496.60" width="4.67" height="1.25" fill="#2a2a2a"/><rect x="164.46" y="496.60" width="5.91" height="1.25" fill="#2a2a2a"/><rect x="171.08" y="496.60" width="3.44" height="1.25" fill="#2a2a2a"/><rect x="175.19" y="496.60" width="5.09" height="1.25" fill="#2a2a2a"/><rect x="181.16" y="496.60" width="2.00" height="1.25" fill="#2a2a2a"/><rect x="183.86" y="496.60" width="3.10" height="1.25" fill="#2a2a2a"/><rect x="188.03" y="496.60" width="4.50" height="1.25" fill="#2a2a2a"/><rect x="193.42" y="496.60" width="2.38" height="1.25" fill="#2a2a2a"/><rect x="146.60" y="498.60" width="4.69" height="1.25" fill="#555"/><rect x="151.91" y="498.60" width="6.34" height="1.25" fill="#555"/><rect x="159.01" y="498.60" width="3.61" height="1.25" fill="#555"/><rect x="163.54" y="498.60" width="5.22" height="1.25" fill="#555"/><rect x="169.61" y="498.60" width="6.73" height="1.25" fill="#555"/><rect x="177.19" y="498.60" width="3.89" height="1.25" fill="#555"/><rect x="181.71" y="498.60" width="5.04" height="1.25" fill="#555"/><rect x="187.53" y="498.60" width="4.95" height="1.25" fill="#555"/><rect x="193.26" y="498.60" width="2.04" height="1.25" fill="#555"/><rect x="144.60" y="500.60" width="5.91" height="1.25" fill="#2a2a2a"/><rect x="151.43" y="500.60" width="2.34" height="1.25" fill="#2a2a2a"/><rect x="154.74" y="500.60" width="3.26" height="1.25" fill="#2a2a2a"/><rect x="159.10" y="500.60" width="2.78" height="1.25" fill="#2a2a2a"/><rect x="162.62" y="500.60" width="3.37" height="1.25" fill="#2a2a2a"/><rect x="167.02" y="500.60" width="6.50" height="1.25" fill="#2a2a2a"/><rect x="174.42" y="500.60" width="2.82" height="1.25" fill="#2a2a2a"/><rect x="178.05" y="500.60" width="3.71" height="1.25" fill="#2a2a2a"/><rect x="144.60" y="502.60" width="5.40" height="1.25" fill="#555"/><rect x="151.08" y="502.60" width="3.47" height="1.25" fill="#555"/><rect x="155.31" y="502.60" width="2.68" height="1.25" fill="#555"/><rect x="158.67" y="502.60" width="6.39" height="1.25" fill="#555"/><rect x="165.71" y="502.60" width="6.09" height="1.25" fill="#555"/><rect x="172.60" y="502.60" width="6.83" height="1.25" fill="#555"/><rect x="180.41" y="502.60" width="5.78" height="1.25" fill="#555"/><rect x="187.21" y="502.60" width="2.23" height="1.25" fill="#555"/><rect x="190.18" y="502.60" width="4.03" height="1.25" fill="#555"/><rect x="195.02" y="502.60" width="0.78" height="1.25" fill="#555"/><rect x="144.60" y="504.60" width="4.79" height="1.25" fill="#555"/><rect x="150.37" y="504.60" width="6.48" height="1.25" fill="#555"/><rect x="157.63" y="504.60" width="3.95" height="1.25" fill="#555"/><rect x="162.50" y="504.60" width="3.26" height="1.25" fill="#555"/><rect x="166.79" y="504.60" width="2.00" height="1.25" fill="#555"/><rect x="169.72" y="504.60" width="4.67" height="1.25" fill="#555"/><rect x="175.09" y="504.60" width="5.14" height="1.25" fill="#555"/><rect x="181.06" y="504.60" width="7.29" height="1.25" fill="#555"/><rect x="189.39" y="504.60" width="5.23" height="1.25" fill="#555"/><rect x="144.60" y="506.60" width="6.18" height="1.25" fill="#555"/><rect x="151.57" y="506.60" width="3.14" height="1.25" fill="#555"/><rect x="155.64" y="506.60" width="3.16" height="1.25" fill="#555"/><rect x="159.77" y="506.60" width="5.16" height="1.25" fill="#555"/><rect x="165.94" y="506.60" width="3.96" height="1.25" fill="#555"/><rect x="170.66" y="506.60" width="6.97" height="1.25" fill="#555"/><rect x="178.56" y="506.60" width="2.58" height="1.25" fill="#555"/><rect x="144.60" y="508.60" width="7.39" height="1.25" fill="#555"/><rect x="153.03" y="508.60" width="6.17" height="1.25" fill="#555"/><rect x="159.94" y="508.60" width="3.07" height="1.25" fill="#555"/><rect x="163.98" y="508.60" width="6.52" height="1.25" fill="#555"/><rect x="171.43" y="508.60" width="3.17" height="1.25" fill="#555"/><rect x="175.56" y="508.60" width="4.88" height="1.25" fill="#555"/><rect x="181.22" y="508.60" width="5.24" height="1.25" fill="#555"/><rect x="187.29" y="508.60" width="5.57" height="1.25" fill="#555"/><rect x="193.83" y="508.60" width="1.97" height="1.25" fill="#555"/><rect x="144.60" y="510.60" width="6.69" height="1.25" fill="#555"/><rect x="151.91" y="510.60" width="6.36" height="1.25" fill="#555"/><rect x="159.18" y="510.60" width="5.21" height="1.25" fill="#555"/><rect x="165.15" y="510.60" width="5.41" height="1.25" fill="#555"/><rect x="171.22" y="510.60" width="4.89" height="1.25" fill="#555"/><rect x="176.83" y="510.60" width="7.12" height="1.25" fill="#555"/><rect x="184.96" y="510.60" width="4.60" height="1.25" fill="#555"/><rect x="190.54" y="510.60" width="4.12" height="1.25" fill="#555"/><rect x="144.60" y="512.60" width="2.46" height="1.25" fill="#555"/><rect x="148.07" y="512.60" width="2.07" height="1.25" fill="#555"/><rect x="151.02" y="512.60" width="4.68" height="1.25" fill="#555"/><rect x="156.33" y="512.60" width="4.32" height="1.25" fill="#555"/><rect x="161.69" y="512.60" width="5.43" height="1.25" fill="#555"/><rect x="167.88" y="512.60" width="6.48" height="1.25" fill="#555"/><rect x="175.14" y="512.60" width="6.93" height="1.25" fill="#555"/><rect x="182.87" y="512.60" width="2.43" height="1.25" fill="#555"/><rect x="186.39" y="512.60" width="2.39" height="1.25" fill="#555"/><rect x="189.50" y="512.60" width="6.24" height="1.25" fill="#555"/><rect x="144.60" y="514.60" width="6.17" height="1.25" fill="#555"/><rect x="151.78" y="514.60" width="5.19" height="1.25" fill="#555"/><rect x="157.88" y="514.60" width="3.77" height="1.25" fill="#555"/><rect x="162.46" y="514.60" width="7.46" height="1.25" fill="#555"/><rect x="171.00" y="514.60" width="2.01" height="1.25" fill="#555"/><rect x="173.71" y="514.60" width="3.24" height="1.25" fill="#555"/><rect x="177.94" y="514.60" width="3.10" height="1.25" fill="#555"/><rect x="181.73" y="514.60" width="6.21" height="1.25" fill="#555"/><rect x="188.63" y="514.60" width="7.17" height="1.25" fill="#555"/><rect x="144.60" y="516.60" width="4.28" height="1.25" fill="#555"/><rect x="149.59" y="516.60" width="2.25" height="1.25" fill="#555"/><rect x="152.80" y="516.60" width="5.09" height="1.25" fill="#555"/><rect x="158.64" y="516.60" width="6.58" height="1.25" fill="#555"/><rect x="165.91" y="516.60" width="4.45" height="1.25" fill="#555"/><rect x="171.00" y="516.60" width="3.93" height="1.25" fill="#555"/><rect x="175.97" y="516.60" width="4.75" height="1.25" fill="#555"/><rect x="181.40" y="516.60" width="3.30" height="1.25" fill="#555"/><rect x="185.62" y="516.60" width="3.53" height="1.25" fill="#555"/><rect x="190.20" y="516.60" width="2.33" height="1.25" fill="#555"/><rect x="193.56" y="516.60" width="2.24" height="1.25" fill="#555"/><rect x="144.60" y="518.60" width="2.61" height="1.25" fill="#2a2a2a"/><rect x="148.20" y="518.60" width="6.83" height="1.25" fill="#2a2a2a"/><rect x="156.05" y="518.60" width="6.61" height="1.25" fill="#2a2a2a"/><rect x="163.54" y="518.60" width="0.83" height="1.25" fill="#2a2a2a"/><rect x="146.60" y="520.60" width="3.37" height="1.25" fill="#2a2a2a"/><rect x="150.80" y="520.60" width="2.67" height="1.25" fill="#2a2a2a"/><rect x="154.55" y="520.60" width="5.17" height="1.25" fill="#2a2a2a"/><rect x="160.70" y="520.60" width="6.91" height="1.25" fill="#2a2a2a"/><rect x="168.32" y="520.60" width="6.87" height="1.25" fill="#2a2a2a"/><rect x="176.27" y="520.60" width="3.47" height="1.25" fill="#2a2a2a"/><rect x="180.41" y="520.60" width="6.40" height="1.25" fill="#2a2a2a"/><rect x="187.85" y="520.60" width="6.39" height="1.25" fill="#2a2a2a"/><rect x="195.05" y="520.60" width="0.75" height="1.25" fill="#2a2a2a"/><rect x="144.60" y="522.60" width="7.11" height="1.25" fill="#2a2a2a"/><rect x="152.32" y="522.60" width="7.33" height="1.25" fill="#2a2a2a"/><rect x="160.37" y="522.60" width="6.50" height="1.25" fill="#2a2a2a"/><rect x="167.88" y="522.60" width="7.25" height="1.25" fill="#2a2a2a"/><rect x="175.97" y="522.60" width="5.84" height="1.25" fill="#2a2a2a"/><rect x="182.56" y="522.60" width="6.58" height="1.25" fill="#2a2a2a"/><rect x="189.79" y="522.60" width="6.01" height="1.25" fill="#2a2a2a"/><rect x="146.60" y="526.40" width="2.15" height="1.25" fill="#555"/><rect x="149.49" y="526.40" width="5.90" height="1.25" fill="#555"/><rect x="156.49" y="526.40" width="5.47" height="1.25" fill="#555"/><rect x="162.99" y="526.40" width="6.52" height="1.25" fill="#555"/><rect x="170.47" y="526.40" width="4.11" height="1.25" fill="#555"/><rect x="175.31" y="526.40" width="2.86" height="1.25" fill="#555"/><rect x="179.04" y="526.40" width="3.12" height="1.25" fill="#555"/><rect x="183.13" y="526.40" width="3.76" height="1.25" fill="#555"/><rect x="187.79" y="526.40" width="5.01" height="1.25" fill="#555"/><rect x="193.71" y="526.40" width="2.09" height="1.25" fill="#555"/><rect x="144.60" y="528.40" width="4.14" height="1.25" fill="#555"/><rect x="149.82" y="528.40" width="5.38" height="1.25" fill="#555"/><rect x="156.27" y="528.40" width="4.89" height="1.25" fill="#555"/><rect x="162.14" y="528.40" width="5.75" height="1.25" fill="#555"/><rect x="168.59" y="528.40" width="4.85" height="1.25" fill="#555"/><rect x="174.33" y="528.40" width="4.55" height="1.25" fill="#555"/><rect x="179.81" y="528.40" width="7.00" height="1.25" fill="#555"/><rect x="187.81" y="528.40" width="6.47" height="1.25" fill="#555"/><rect x="194.95" y="528.40" width="0.85" height="1.25" fill="#555"/><rect x="144.60" y="530.40" width="5.88" height="1.25" fill="#555"/><rect x="151.38" y="530.40" width="4.19" height="1.25" fill="#555"/><rect x="156.39" y="530.40" width="5.09" height="1.25" fill="#555"/><rect x="162.57" y="530.40" width="1.80" height="1.25" fill="#555"/><rect x="144.60" y="532.40" width="6.84" height="1.25" fill="#555"/><rect x="152.08" y="532.40" width="7.32" height="1.25" fill="#555"/><rect x="160.30" y="532.40" width="3.43" height="1.25" fill="#555"/><rect x="164.56" y="532.40" width="2.53" height="1.25" fill="#555"/><rect x="167.81" y="532.40" width="6.61" height="1.25" fill="#555"/><rect x="175.37" y="532.40" width="6.76" height="1.25" fill="#555"/><rect x="182.82" y="532.40" width="2.59" height="1.25" fill="#555"/><rect x="186.20" y="532.40" width="4.73" height="1.25" fill="#555"/><rect x="191.89" y="532.40" width="3.64" height="1.25" fill="#555"/><rect x="144.60" y="534.40" width="5.26" height="1.25" fill="#2a2a2a"/><rect x="150.55" y="534.40" width="2.23" height="1.25" fill="#2a2a2a"/><rect x="153.62" y="534.40" width="4.86" height="1.25" fill="#2a2a2a"/><rect x="159.39" y="534.40" width="4.06" height="1.25" fill="#2a2a2a"/><rect x="164.52" y="534.40" width="6.31" height="1.25" fill="#2a2a2a"/><rect x="171.51" y="534.40" width="2.03" height="1.25" fill="#2a2a2a"/><rect x="174.61" y="534.40" width="4.26" height="1.25" fill="#2a2a2a"/><rect x="179.53" y="534.40" width="2.98" height="1.25" fill="#2a2a2a"/><rect x="183.46" y="534.40" width="2.97" height="1.25" fill="#2a2a2a"/><rect x="187.21" y="534.40" width="5.72" height="1.25" fill="#2a2a2a"/><rect x="193.71" y="534.40" width="2.09" height="1.25" fill="#2a2a2a"/><rect x="144.60" y="536.40" width="5.52" height="1.25" fill="#555"/><rect x="151.05" y="536.40" width="5.23" height="1.25" fill="#555"/><rect x="157.12" y="536.40" width="6.13" height="1.25" fill="#555"/><rect x="163.96" y="536.40" width="5.92" height="1.25" fill="#555"/><rect x="170.97" y="536.40" width="2.20" height="1.25" fill="#555"/><rect x="173.89" y="536.40" width="7.42" height="1.25" fill="#555"/><rect x="181.96" y="536.40" width="6.50" height="1.25" fill="#555"/><rect x="189.34" y="536.40" width="2.38" height="1.25" fill="#555"/><rect x="192.64" y="536.40" width="2.04" height="1.25" fill="#555"/><rect x="144.60" y="538.40" width="4.22" height="1.25" fill="#2a2a2a"/><rect x="149.49" y="538.40" width="6.17" height="1.25" fill="#2a2a2a"/><rect x="156.31" y="538.40" width="2.41" height="1.25" fill="#2a2a2a"/><rect x="159.37" y="538.40" width="6.72" height="1.25" fill="#2a2a2a"/><rect x="166.82" y="538.40" width="3.78" height="1.25" fill="#2a2a2a"/><rect x="171.42" y="538.40" width="5.04" height="1.25" fill="#2a2a2a"/><rect x="177.26" y="538.40" width="7.21" height="1.25" fill="#2a2a2a"/><rect x="185.24" y="538.40" width="4.62" height="1.25" fill="#2a2a2a"/><rect x="190.89" y="538.40" width="3.34" height="1.25" fill="#2a2a2a"/><rect x="194.91" y="538.40" width="0.89" height="1.25" fill="#2a2a2a"/><rect x="144.60" y="540.40" width="2.56" height="1.25" fill="#555"/><rect x="148.19" y="540.40" width="4.43" height="1.25" fill="#555"/><rect x="153.40" y="540.40" width="2.97" height="1.25" fill="#555"/><rect x="157.08" y="540.40" width="6.81" height="1.25" fill="#555"/><rect x="164.55" y="540.40" width="5.05" height="1.25" fill="#555"/><rect x="170.52" y="540.40" width="4.86" height="1.25" fill="#555"/><rect x="176.23" y="540.40" width="4.19" height="1.25" fill="#555"/><rect x="181.11" y="540.40" width="6.52" height="1.25" fill="#555"/><rect x="188.68" y="540.40" width="5.10" height="1.25" fill="#555"/><rect x="194.50" y="540.40" width="1.30" height="1.25" fill="#555"/><rect x="144.60" y="542.40" width="2.60" height="1.25" fill="#555"/><rect x="148.29" y="542.40" width="2.86" height="1.25" fill="#555"/><rect x="151.92" y="542.40" width="7.44" height="1.25" fill="#555"/><rect x="160.36" y="542.40" width="6.16" height="1.25" fill="#555"/><rect x="167.15" y="542.40" width="6.68" height="1.25" fill="#555"/><rect x="174.63" y="542.40" width="2.06" height="1.25" fill="#555"/><rect x="177.69" y="542.40" width="7.12" height="1.25" fill="#555"/><rect x="185.43" y="542.40" width="4.50" height="1.25" fill="#555"/><rect x="190.98" y="542.40" width="3.83" height="1.25" fill="#555"/><rect x="144.60" y="544.40" width="6.72" height="1.25" fill="#555"/><rect x="152.28" y="544.40" width="3.07" height="1.25" fill="#555"/><rect x="156.29" y="544.40" width="5.18" height="1.25" fill="#555"/><rect x="162.31" y="544.40" width="5.12" height="1.25" fill="#555"/><rect x="168.18" y="544.40" width="3.09" height="1.25" fill="#555"/><rect x="172.33" y="544.40" width="4.02" height="1.25" fill="#555"/><rect x="177.00" y="544.40" width="7.37" height="1.25" fill="#555"/><rect x="185.22" y="544.40" width="5.72" height="1.25" fill="#555"/><rect x="191.71" y="544.40" width="2.82" height="1.25" fill="#555"/><rect x="195.29" y="544.40" width="0.51" height="1.25" fill="#555"/><rect x="144.60" y="546.40" width="4.44" height="1.25" fill="#2a2a2a"/><rect x="149.70" y="546.40" width="2.82" height="1.25" fill="#2a2a2a"/><rect x="153.38" y="546.40" width="4.01" height="1.25" fill="#2a2a2a"/><rect x="158.26" y="546.40" width="3.19" height="1.25" fill="#2a2a2a"/><rect x="162.20" y="546.40" width="3.77" height="1.25" fill="#2a2a2a"/><rect x="167.02" y="546.40" width="2.44" height="1.25" fill="#2a2a2a"/><rect x="170.28" y="546.40" width="6.70" height="1.25" fill="#2a2a2a"/><rect x="177.86" y="546.40" width="3.41" height="1.25" fill="#2a2a2a"/><rect x="182.37" y="546.40" width="2.60" height="1.25" fill="#2a2a2a"/><rect x="185.63" y="546.40" width="2.09" height="1.25" fill="#2a2a2a"/><rect x="188.54" y="546.40" width="6.72" height="1.25" fill="#2a2a2a"/><rect x="146.60" y="548.40" width="5.65" height="1.25" fill="#2a2a2a"/><rect x="152.89" y="548.40" width="4.90" height="1.25" fill="#2a2a2a"/><rect x="158.47" y="548.40" width="5.31" height="1.25" fill="#2a2a2a"/><rect x="164.80" y="548.40" width="4.49" height="1.25" fill="#2a2a2a"/><rect x="170.03" y="548.40" width="5.43" height="1.25" fill="#2a2a2a"/><rect x="176.41" y="548.40" width="2.31" height="1.25" fill="#2a2a2a"/><rect x="179.44" y="548.40" width="4.07" height="1.25" fill="#2a2a2a"/><rect x="184.37" y="548.40" width="3.50" height="1.25" fill="#2a2a2a"/><rect x="188.80" y="548.40" width="3.40" height="1.25" fill="#2a2a2a"/><rect x="193.26" y="548.40" width="2.54" height="1.25" fill="#2a2a2a"/><rect x="144.60" y="552.20" width="4.44" height="1.25" fill="#555"/><rect x="150.12" y="552.20" width="7.32" height="1.25" fill="#555"/><rect x="158.42" y="552.20" width="3.32" height="1.25" fill="#555"/><rect x="162.50" y="552.20" width="4.78" height="1.25" fill="#555"/><rect x="168.01" y="552.20" width="3.91" height="1.25" fill="#555"/><rect x="172.62" y="552.20" width="3.33" height="1.25" fill="#555"/><rect x="176.92" y="552.20" width="5.32" height="1.25" fill="#555"/><rect x="183.07" y="552.20" width="4.59" height="1.25" fill="#555"/><rect x="188.57" y="552.20" width="5.77" height="1.25" fill="#555"/><rect x="194.94" y="552.20" width="0.86" height="1.25" fill="#555"/><rect x="144.60" y="554.20" width="2.13" height="1.25" fill="#555"/><rect x="147.55" y="554.20" width="4.42" height="1.25" fill="#555"/><rect x="152.76" y="554.20" width="2.54" height="1.25" fill="#555"/><rect x="156.19" y="554.20" width="3.40" height="1.25" fill="#555"/><rect x="160.57" y="554.20" width="4.91" height="1.25" fill="#555"/><rect x="166.22" y="554.20" width="6.54" height="1.25" fill="#555"/><rect x="173.59" y="554.20" width="2.46" height="1.25" fill="#555"/><rect x="176.79" y="554.20" width="2.29" height="1.25" fill="#555"/><rect x="179.90" y="554.20" width="7.00" height="1.25" fill="#555"/><rect x="187.96" y="554.20" width="5.59" height="1.25" fill="#555"/><rect x="194.23" y="554.20" width="1.57" height="1.25" fill="#555"/><rect x="146.60" y="556.20" width="4.34" height="1.25" fill="#555"/><rect x="151.87" y="556.20" width="6.55" height="1.25" fill="#555"/><rect x="159.22" y="556.20" width="5.32" height="1.25" fill="#555"/><rect x="165.27" y="556.20" width="4.50" height="1.25" fill="#555"/><rect x="170.68" y="556.20" width="2.29" height="1.25" fill="#555"/><rect x="173.83" y="556.20" width="4.76" height="1.25" fill="#555"/><rect x="179.28" y="556.20" width="3.37" height="1.25" fill="#555"/><rect x="183.66" y="556.20" width="3.92" height="1.25" fill="#555"/><rect x="188.28" y="556.20" width="3.57" height="1.25" fill="#555"/><rect x="192.71" y="556.20" width="3.09" height="1.25" fill="#555"/><rect x="144.60" y="558.20" width="2.49" height="1.25" fill="#555"/><rect x="147.99" y="558.20" width="3.69" height="1.25" fill="#555"/><rect x="152.77" y="558.20" width="7.16" height="1.25" fill="#555"/><rect x="160.59" y="558.20" width="5.83" height="1.25" fill="#555"/><rect x="167.19" y="558.20" width="2.61" height="1.25" fill="#555"/><rect x="170.84" y="558.20" width="7.00" height="1.25" fill="#555"/><rect x="178.83" y="558.20" width="5.50" height="1.25" fill="#555"/><rect x="185.42" y="558.20" width="5.06" height="1.25" fill="#555"/><rect x="191.42" y="558.20" width="4.38" height="1.25" fill="#555"/><rect x="144.60" y="560.20" width="5.24" height="1.25" fill="#555"/><rect x="150.62" y="560.20" width="6.73" height="1.25" fill="#555"/><rect x="158.38" y="560.20" width="5.78" height="1.25" fill="#555"/><rect x="165.02" y="560.20" width="5.82" height="1.25" fill="#555"/><rect x="171.55" y="560.20" width="6.44" height="1.25" fill="#555"/><rect x="178.65" y="560.20" width="6.97" height="1.25" fill="#555"/><rect x="186.53" y="560.20" width="3.53" height="1.25" fill="#555"/><rect x="190.75" y="560.20" width="5.05" height="1.25" fill="#555"/><rect x="144.60" y="562.20" width="6.06" height="1.25" fill="#555"/><rect x="151.57" y="562.20" width="4.45" height="1.25" fill="#555"/><rect x="156.76" y="562.20" width="4.56" height="1.25" fill="#555"/><rect x="161.94" y="562.20" width="3.41" height="1.25" fill="#555"/><rect x="166.36" y="562.20" width="2.66" height="1.25" fill="#555"/><rect x="169.66" y="562.20" width="6.66" height="1.25" fill="#555"/><rect x="177.11" y="562.20" width="4.91" height="1.25" fill="#555"/><rect x="144.60" y="564.20" width="6.66" height="1.25" fill="#2a2a2a"/><rect x="152.02" y="564.20" width="5.44" height="1.25" fill="#2a2a2a"/><rect x="158.21" y="564.20" width="6.12" height="1.25" fill="#2a2a2a"/><rect x="165.12" y="564.20" width="5.31" height="1.25" fill="#2a2a2a"/><rect x="171.19" y="564.20" width="6.58" height="1.25" fill="#2a2a2a"/><rect x="178.76" y="564.20" width="3.11" height="1.25" fill="#2a2a2a"/><rect x="182.84" y="564.20" width="7.18" height="1.25" fill="#2a2a2a"/><rect x="190.74" y="564.20" width="3.05" height="1.25" fill="#2a2a2a"/><rect x="194.86" y="564.20" width="0.94" height="1.25" fill="#2a2a2a"/><rect x="144.60" y="566.20" width="3.64" height="1.25" fill="#555"/><rect x="149.23" y="566.20" width="4.80" height="1.25" fill="#555"/><rect x="154.86" y="566.20" width="2.69" height="1.25" fill="#555"/><rect x="158.47" y="566.20" width="5.85" height="1.25" fill="#555"/><rect x="165.07" y="566.20" width="2.25" height="1.25" fill="#555"/><rect x="167.96" y="566.20" width="3.43" height="1.25" fill="#555"/><rect x="172.49" y="566.20" width="6.09" height="1.25" fill="#555"/><rect x="179.63" y="566.20" width="6.12" height="1.25" fill="#555"/><rect x="186.42" y="566.20" width="4.12" height="1.25" fill="#555"/><rect x="191.62" y="566.20" width="4.18" height="1.25" fill="#555"/><rect x="144.60" y="568.20" width="4.36" height="1.25" fill="#555"/><rect x="149.58" y="568.20" width="3.72" height="1.25" fill="#555"/><rect x="153.90" y="568.20" width="3.50" height="1.25" fill="#555"/><rect x="158.30" y="568.20" width="3.51" height="1.25" fill="#555"/><rect x="162.53" y="568.20" width="2.52" height="1.25" fill="#555"/><rect x="165.83" y="568.20" width="4.84" height="1.25" fill="#555"/><rect x="171.57" y="568.20" width="7.19" height="1.25" fill="#555"/><rect x="179.39" y="568.20" width="3.40" height="1.25" fill="#555"/><rect x="183.43" y="568.20" width="7.12" height="1.25" fill="#555"/><rect x="191.46" y="568.20" width="4.34" height="1.25" fill="#555"/><rect x="144.60" y="572.00" width="6.10" height="1.25" fill="#555"/><rect x="151.45" y="572.00" width="3.53" height="1.25" fill="#555"/><rect x="155.70" y="572.00" width="5.99" height="1.25" fill="#555"/><rect x="162.52" y="572.00" width="2.85" height="1.25" fill="#555"/><rect x="166.15" y="572.00" width="5.12" height="1.25" fill="#555"/><rect x="172.06" y="572.00" width="5.26" height="1.25" fill="#555"/><rect x="178.34" y="572.00" width="5.52" height="1.25" fill="#555"/><rect x="184.86" y="572.00" width="3.67" height="1.25" fill="#555"/><rect x="189.57" y="572.00" width="6.23" height="1.25" fill="#555"/><rect x="144.60" y="577.60" width="4.97" height="1.25" fill="#555"/><rect x="150.23" y="577.60" width="5.29" height="1.25" fill="#555"/><rect x="156.62" y="577.60" width="3.13" height="1.25" fill="#555"/><rect x="160.66" y="577.60" width="6.68" height="1.25" fill="#555"/><rect x="168.26" y="577.60" width="3.93" height="1.25" fill="#555"/><rect x="172.91" y="577.60" width="6.03" height="1.25" fill="#555"/><rect x="180.00" y="577.60" width="6.83" height="1.25" fill="#555"/><rect x="187.63" y="577.60" width="6.10" height="1.25" fill="#555"/><rect x="194.73" y="577.60" width="1.07" height="1.25" fill="#555"/><rect x="146.60" y="579.60" width="6.14" height="1.25" fill="#555"/><rect x="153.36" y="579.60" width="2.34" height="1.25" fill="#555"/><rect x="156.46" y="579.60" width="3.15" height="1.25" fill="#555"/><rect x="160.57" y="579.60" width="3.04" height="1.25" fill="#555"/><rect x="164.51" y="579.60" width="5.03" height="1.25" fill="#555"/><rect x="170.31" y="579.60" width="6.70" height="1.25" fill="#555"/><rect x="177.83" y="579.60" width="4.82" height="1.25" fill="#555"/><rect x="183.58" y="579.60" width="4.22" height="1.25" fill="#555"/><rect x="188.50" y="579.60" width="7.24" height="1.25" fill="#555"/><rect x="144.60" y="581.60" width="2.40" height="1.25" fill="#555"/><rect x="147.87" y="581.60" width="6.95" height="1.25" fill="#555"/><rect x="155.47" y="581.60" width="7.40" height="1.25" fill="#555"/><rect x="163.65" y="581.60" width="7.49" height="1.25" fill="#555"/><rect x="172.13" y="581.60" width="3.50" height="1.25" fill="#555"/><rect x="176.33" y="581.60" width="6.89" height="1.25" fill="#555"/><rect x="184.31" y="581.60" width="6.43" height="1.25" fill="#555"/><rect x="191.63" y="581.60" width="4.17" height="1.25" fill="#555"/></svg>
<svg class="r" style="left:0;top:0" width="169" height="578" viewBox="73 192 169 578"><rect x="89.20" y="640.20" width="8.80" height="0.70" fill="#888"/><rect x="89.20" y="641.60" width="106.40" height="0.70" fill="#444"/><rect x="113.00" y="642.60" width="5.43" height="1.10" fill="#444"/><rect x="119.40" y="642.60" width="6.37" height="1.10" fill="#444"/><rect x="126.84" y="642.60" width="6.07" height="1.10" fill="#444"/><rect x="133.97" y="642.60" width="2.16" height="1.10" fill="#444"/><rect x="136.96" y="642.60" width="7.19" height="1.10" fill="#444"/><rect x="145.08" y="642.60" width="6.95" height="1.10" fill="#444"/><rect x="152.69" y="642.60" width="4.58" height="1.10" fill="#444"/><rect x="157.99" y="642.60" width="4.99" height="1.10" fill="#444"/><rect x="163.87" y="642.60" width="2.07" height="1.10" fill="#444"/><rect x="166.65" y="642.60" width="3.54" height="1.10" fill="#444"/><rect x="171.25" y="642.60" width="0.75" height="1.10" fill="#444"/><rect x="192.60" y="639.50" width="3.00" height="8.00" fill="#222"/><rect x="89.20" y="645.00" width="6.38" height="1.15" fill="#555"/><rect x="96.25" y="645.00" width="5.40" height="1.15" fill="#555"/><rect x="102.31" y="645.00" width="2.01" height="1.15" fill="#555"/><rect x="105.36" y="645.00" width="3.15" height="1.15" fill="#555"/><rect x="109.22" y="645.00" width="7.40" height="1.15" fill="#555"/><rect x="117.66" y="645.00" width="3.59" height="1.15" fill="#555"/><rect x="122.33" y="645.00" width="4.97" height="1.15" fill="#555"/><rect x="128.23" y="645.00" width="3.13" height="1.15" fill="#555"/><rect x="132.43" y="645.00" width="5.80" height="1.15" fill="#555"/><rect x="139.31" y="645.00" width="6.92" height="1.15" fill="#555"/><rect x="146.98" y="645.00" width="3.99" height="1.15" fill="#555"/><rect x="151.65" y="645.00" width="2.80" height="1.15" fill="#555"/><rect x="155.08" y="645.00" width="3.66" height="1.15" fill="#555"/><rect x="159.64" y="645.00" width="2.02" height="1.15" fill="#555"/><rect x="162.60" y="645.00" width="3.86" height="1.15" fill="#555"/><rect x="167.21" y="645.00" width="6.50" height="1.15" fill="#555"/><rect x="174.55" y="645.00" width="3.74" height="1.15" fill="#555"/><rect x="179.13" y="645.00" width="5.88" height="1.15" fill="#555"/><rect x="185.64" y="645.00" width="7.36" height="1.15" fill="#555"/><rect x="193.61" y="645.00" width="1.99" height="1.15" fill="#555"/><rect x="89.20" y="646.90" width="2.10" height="1.15" fill="#555"/><rect x="92.29" y="646.90" width="4.01" height="1.15" fill="#555"/><rect x="97.20" y="646.90" width="2.05" height="1.15" fill="#555"/><rect x="99.87" y="646.90" width="3.00" height="1.15" fill="#555"/><rect x="103.94" y="646.90" width="3.08" height="1.15" fill="#555"/><rect x="108.00" y="646.90" width="7.11" height="1.15" fill="#555"/><rect x="116.19" y="646.90" width="3.89" height="1.15" fill="#555"/><rect x="120.86" y="646.90" width="4.89" height="1.15" fill="#555"/><rect x="126.73" y="646.90" width="2.59" height="1.15" fill="#555"/><rect x="130.30" y="646.90" width="6.38" height="1.15" fill="#555"/><rect x="137.71" y="646.90" width="2.20" height="1.15" fill="#555"/><rect x="140.99" y="646.90" width="2.50" height="1.15" fill="#555"/><rect x="144.26" y="646.90" width="5.36" height="1.15" fill="#555"/><rect x="150.68" y="646.90" width="3.87" height="1.15" fill="#555"/><rect x="155.61" y="646.90" width="5.00" height="1.15" fill="#555"/><rect x="161.36" y="646.90" width="3.74" height="1.15" fill="#555"/><rect x="165.80" y="646.90" width="2.43" height="1.15" fill="#555"/><rect x="168.90" y="646.90" width="5.79" height="1.15" fill="#555"/><rect x="175.79" y="646.90" width="2.89" height="1.15" fill="#555"/><rect x="179.30" y="646.90" width="7.43" height="1.15" fill="#555"/><rect x="187.60" y="646.90" width="4.23" height="1.15" fill="#555"/><rect x="192.55" y="646.90" width="3.05" height="1.15" fill="#555"/><rect x="89.20" y="649.40" width="4.51" height="1.15" fill="#555"/><rect x="94.52" y="649.40" width="2.31" height="1.15" fill="#555"/><rect x="97.88" y="649.40" width="2.18" height="1.15" fill="#555"/><rect x="100.91" y="649.40" width="6.61" height="1.15" fill="#555"/><rect x="108.18" y="649.40" width="6.02" height="1.15" fill="#555"/><rect x="115.28" y="649.40" width="5.47" height="1.15" fill="#555"/><rect x="121.75" y="649.40" width="2.59" height="1.15" fill="#555"/><rect x="125.15" y="649.40" width="2.82" height="1.15" fill="#555"/><rect x="128.99" y="649.40" width="3.62" height="1.15" fill="#555"/><rect x="133.44" y="649.40" width="7.50" height="1.15" fill="#555"/><rect x="141.96" y="649.40" width="7.37" height="1.15" fill="#555"/><rect x="150.16" y="649.40" width="4.68" height="1.15" fill="#555"/><rect x="155.81" y="649.40" width="4.63" height="1.15" fill="#555"/><rect x="161.19" y="649.40" width="4.22" height="1.15" fill="#555"/><rect x="166.08" y="649.40" width="4.07" height="1.15" fill="#555"/><rect x="171.25" y="649.40" width="7.28" height="1.15" fill="#555"/><rect x="179.44" y="649.40" width="4.75" height="1.15" fill="#555"/><rect x="184.96" y="649.40" width="2.49" height="1.15" fill="#555"/><rect x="188.18" y="649.40" width="6.30" height="1.15" fill="#555"/><rect x="89.20" y="651.30" width="3.99" height="1.15" fill="#555"/><rect x="94.18" y="651.30" width="6.26" height="1.15" fill="#555"/><rect x="101.39" y="651.30" width="5.65" height="1.15" fill="#555"/><rect x="108.02" y="651.30" width="4.00" height="1.15" fill="#555"/><rect x="112.97" y="651.30" width="3.54" height="1.15" fill="#555"/><rect x="117.36" y="651.30" width="6.23" height="1.15" fill="#555"/><rect x="124.54" y="651.30" width="3.62" height="1.15" fill="#555"/><rect x="129.23" y="651.30" width="5.57" height="1.15" fill="#555"/><rect x="135.69" y="651.30" width="2.06" height="1.15" fill="#555"/><rect x="138.63" y="651.30" width="3.38" height="1.15" fill="#555"/><rect x="142.94" y="651.30" width="4.55" height="1.15" fill="#555"/><rect x="148.50" y="651.30" width="1.50" height="1.15" fill="#555"/><rect x="90.80" y="657.00" width="1.40" height="1.10" fill="#666"/><rect x="95.50" y="657.00" width="3.91" height="1.05" fill="#5a5a5a"/><rect x="100.34" y="657.00" width="6.06" height="1.05" fill="#5a5a5a"/><rect x="107.41" y="657.00" width="3.93" height="1.05" fill="#5a5a5a"/><rect x="112.35" y="657.00" width="6.78" height="1.05" fill="#5a5a5a"/><rect x="120.08" y="657.00" width="7.37" height="1.05" fill="#5a5a5a"/><rect x="128.53" y="657.00" width="4.85" height="1.05" fill="#5a5a5a"/><rect x="134.24" y="657.00" width="2.91" height="1.05" fill="#5a5a5a"/><rect x="138.18" y="657.00" width="7.16" height="1.05" fill="#5a5a5a"/><rect x="146.17" y="657.00" width="5.80" height="1.05" fill="#5a5a5a"/><rect x="152.93" y="657.00" width="6.02" height="1.05" fill="#5a5a5a"/><rect x="159.64" y="657.00" width="6.29" height="1.05" fill="#5a5a5a"/><rect x="166.82" y="657.00" width="5.66" height="1.05" fill="#5a5a5a"/><rect x="95.50" y="658.70" width="5.43" height="1.05" fill="#7a7a7a"/><rect x="101.92" y="658.70" width="5.50" height="1.05" fill="#7a7a7a"/><rect x="108.38" y="658.70" width="2.15" height="1.05" fill="#7a7a7a"/><rect x="111.21" y="658.70" width="4.43" height="1.05" fill="#7a7a7a"/><rect x="116.56" y="658.70" width="3.20" height="1.05" fill="#7a7a7a"/><rect x="120.71" y="658.70" width="5.47" height="1.05" fill="#7a7a7a"/><rect x="126.80" y="658.70" width="4.59" height="1.05" fill="#7a7a7a"/><rect x="132.11" y="658.70" width="2.30" height="1.05" fill="#7a7a7a"/><rect x="135.07" y="658.70" width="3.75" height="1.05" fill="#7a7a7a"/><rect x="139.51" y="658.70" width="3.06" height="1.05" fill="#7a7a7a"/><rect x="143.19" y="658.70" width="4.56" height="1.05" fill="#7a7a7a"/><rect x="148.54" y="658.70" width="5.36" height="1.05" fill="#7a7a7a"/><rect x="154.80" y="658.70" width="3.31" height="1.05" fill="#7a7a7a"/><rect x="159.16" y="658.70" width="2.00" height="1.05" fill="#7a7a7a"/><rect x="161.97" y="658.70" width="3.53" height="1.05" fill="#7a7a7a"/><rect x="166.30" y="658.70" width="2.63" height="1.05" fill="#7a7a7a"/><rect x="169.95" y="658.70" width="3.05" height="1.05" fill="#7a7a7a"/><rect x="95.50" y="660.40" width="2.52" height="1.05" fill="#7a7a7a"/><rect x="98.89" y="660.40" width="3.87" height="1.05" fill="#7a7a7a"/><rect x="103.65" y="660.40" width="7.27" height="1.05" fill="#7a7a7a"/><rect x="111.93" y="660.40" width="4.31" height="1.05" fill="#7a7a7a"/><rect x="117.24" y="660.40" width="5.53" height="1.05" fill="#7a7a7a"/><rect x="123.56" y="660.40" width="2.78" height="1.05" fill="#7a7a7a"/><rect x="127.24" y="660.40" width="5.10" height="1.05" fill="#7a7a7a"/><rect x="133.42" y="660.40" width="7.32" height="1.05" fill="#7a7a7a"/><rect x="141.65" y="660.40" width="3.93" height="1.05" fill="#7a7a7a"/><rect x="146.63" y="660.40" width="2.01" height="1.05" fill="#7a7a7a"/><rect x="149.28" y="660.40" width="5.11" height="1.05" fill="#7a7a7a"/><rect x="155.30" y="660.40" width="1.08" height="1.05" fill="#7a7a7a"/><rect x="179.50" y="663.50" width="16.10" height="0.60" fill="#666"/><rect x="176.50" y="662.30" width="2.00" height="1.20" fill="#777"/><rect x="90.80" y="666.30" width="1.40" height="1.10" fill="#666"/><rect x="95.50" y="666.30" width="6.90" height="1.05" fill="#5a5a5a"/><rect x="103.19" y="666.30" width="4.37" height="1.05" fill="#5a5a5a"/><rect x="108.28" y="666.30" width="3.60" height="1.05" fill="#5a5a5a"/><rect x="112.97" y="666.30" width="4.09" height="1.05" fill="#5a5a5a"/><rect x="118.14" y="666.30" width="7.03" height="1.05" fill="#5a5a5a"/><rect x="126.06" y="666.30" width="3.43" height="1.05" fill="#5a5a5a"/><rect x="130.58" y="666.30" width="4.73" height="1.05" fill="#5a5a5a"/><rect x="136.12" y="666.30" width="3.76" height="1.05" fill="#5a5a5a"/><rect x="140.96" y="666.30" width="4.70" height="1.05" fill="#5a5a5a"/><rect x="146.41" y="666.30" width="4.62" height="1.05" fill="#5a5a5a"/><rect x="151.70" y="666.30" width="5.42" height="1.05" fill="#5a5a5a"/><rect x="157.94" y="666.30" width="3.61" height="1.05" fill="#5a5a5a"/><rect x="162.54" y="666.30" width="6.55" height="1.05" fill="#5a5a5a"/><rect x="169.69" y="666.30" width="3.31" height="1.05" fill="#5a5a5a"/><rect x="95.50" y="668.00" width="6.30" height="1.05" fill="#7a7a7a"/><rect x="102.52" y="668.00" width="3.47" height="1.05" fill="#7a7a7a"/><rect x="106.67" y="668.00" width="7.44" height="1.05" fill="#7a7a7a"/><rect x="114.86" y="668.00" width="5.34" height="1.05" fill="#7a7a7a"/><rect x="121.04" y="668.00" width="5.55" height="1.05" fill="#7a7a7a"/><rect x="127.49" y="668.00" width="6.09" height="1.05" fill="#7a7a7a"/><rect x="134.24" y="668.00" width="6.18" height="1.05" fill="#7a7a7a"/><rect x="141.17" y="668.00" width="4.93" height="1.05" fill="#7a7a7a"/><rect x="146.87" y="668.00" width="3.63" height="1.05" fill="#7a7a7a"/><rect x="151.37" y="668.00" width="4.55" height="1.05" fill="#7a7a7a"/><rect x="156.70" y="668.00" width="6.10" height="1.05" fill="#7a7a7a"/><rect x="163.70" y="668.00" width="2.20" height="1.05" fill="#7a7a7a"/><rect x="166.62" y="668.00" width="3.59" height="1.05" fill="#7a7a7a"/><rect x="90.80" y="672.00" width="1.40" height="1.10" fill="#666"/><rect x="97.50" y="672.00" width="6.88" height="1.05" fill="#5a5a5a"/><rect x="105.26" y="672.00" width="2.08" height="1.05" fill="#5a5a5a"/><rect x="108.33" y="672.00" width="4.35" height="1.05" fill="#5a5a5a"/><rect x="113.57" y="672.00" width="5.89" height="1.05" fill="#5a5a5a"/><rect x="120.38" y="672.00" width="4.65" height="1.05" fill="#5a5a5a"/><rect x="126.08" y="672.00" width="4.12" height="1.05" fill="#5a5a5a"/><rect x="131.00" y="672.00" width="6.69" height="1.05" fill="#5a5a5a"/><rect x="138.38" y="672.00" width="3.63" height="1.05" fill="#5a5a5a"/><rect x="143.03" y="672.00" width="2.36" height="1.05" fill="#5a5a5a"/><rect x="146.41" y="672.00" width="5.82" height="1.05" fill="#5a5a5a"/><rect x="153.05" y="672.00" width="3.57" height="1.05" fill="#5a5a5a"/><rect x="157.61" y="672.00" width="7.01" height="1.05" fill="#5a5a5a"/><rect x="165.29" y="672.00" width="4.63" height="1.05" fill="#5a5a5a"/><rect x="170.80" y="672.00" width="2.20" height="1.05" fill="#5a5a5a"/><rect x="97.50" y="673.70" width="2.84" height="1.05" fill="#7a7a7a"/><rect x="101.24" y="673.70" width="6.47" height="1.05" fill="#7a7a7a"/><rect x="108.34" y="673.70" width="3.27" height="1.05" fill="#7a7a7a"/><rect x="112.61" y="673.70" width="6.35" height="1.05" fill="#7a7a7a"/><rect x="119.90" y="673.70" width="2.14" height="1.05" fill="#7a7a7a"/><rect x="123.00" y="673.70" width="7.38" height="1.05" fill="#7a7a7a"/><rect x="131.48" y="673.70" width="5.86" height="1.05" fill="#7a7a7a"/><rect x="137.96" y="673.70" width="6.63" height="1.05" fill="#7a7a7a"/><rect x="145.30" y="673.70" width="5.55" height="1.05" fill="#7a7a7a"/><rect x="151.93" y="673.70" width="5.92" height="1.05" fill="#7a7a7a"/><rect x="158.52" y="673.70" width="3.61" height="1.05" fill="#7a7a7a"/><rect x="163.19" y="673.70" width="2.82" height="1.05" fill="#7a7a7a"/><rect x="166.91" y="673.70" width="4.28" height="1.05" fill="#7a7a7a"/><rect x="171.87" y="673.70" width="1.13" height="1.05" fill="#7a7a7a"/><rect x="97.50" y="675.40" width="4.09" height="1.05" fill="#7a7a7a"/><rect x="102.22" y="675.40" width="2.32" height="1.05" fill="#7a7a7a"/><rect x="105.43" y="675.40" width="6.08" height="1.05" fill="#7a7a7a"/><rect x="112.55" y="675.40" width="2.74" height="1.05" fill="#7a7a7a"/><rect x="116.10" y="675.40" width="3.73" height="1.05" fill="#7a7a7a"/><rect x="120.73" y="675.40" width="4.69" height="1.05" fill="#7a7a7a"/><rect x="126.49" y="675.40" width="4.06" height="1.05" fill="#7a7a7a"/><rect x="131.18" y="675.40" width="3.47" height="1.05" fill="#7a7a7a"/><rect x="179.50" y="680.30" width="16.10" height="0.60" fill="#666"/><rect x="176.50" y="679.10" width="2.00" height="1.20" fill="#777"/><rect x="90.80" y="683.50" width="1.40" height="1.10" fill="#666"/><rect x="97.50" y="683.50" width="5.47" height="1.05" fill="#5a5a5a"/><rect x="103.83" y="683.50" width="7.01" height="1.05" fill="#5a5a5a"/><rect x="111.71" y="683.50" width="5.41" height="1.05" fill="#5a5a5a"/><rect x="117.86" y="683.50" width="5.03" height="1.05" fill="#5a5a5a"/><rect x="123.62" y="683.50" width="6.13" height="1.05" fill="#5a5a5a"/><rect x="130.60" y="683.50" width="2.74" height="1.05" fill="#5a5a5a"/><rect x="134.06" y="683.50" width="4.04" height="1.05" fill="#5a5a5a"/><rect x="139.07" y="683.50" width="2.99" height="1.05" fill="#5a5a5a"/><rect x="143.01" y="683.50" width="5.60" height="1.05" fill="#5a5a5a"/><rect x="149.26" y="683.50" width="5.67" height="1.05" fill="#5a5a5a"/><rect x="155.58" y="683.50" width="2.69" height="1.05" fill="#5a5a5a"/><rect x="159.16" y="683.50" width="3.31" height="1.05" fill="#5a5a5a"/><rect x="163.51" y="683.50" width="4.64" height="1.05" fill="#5a5a5a"/><rect x="168.91" y="683.50" width="4.09" height="1.05" fill="#5a5a5a"/><rect x="97.50" y="685.20" width="5.99" height="1.05" fill="#7a7a7a"/><rect x="104.11" y="685.20" width="2.83" height="1.05" fill="#7a7a7a"/><rect x="108.02" y="685.20" width="5.75" height="1.05" fill="#7a7a7a"/><rect x="114.48" y="685.20" width="2.64" height="1.05" fill="#7a7a7a"/><rect x="118.20" y="685.20" width="5.66" height="1.05" fill="#7a7a7a"/><rect x="124.87" y="685.20" width="2.77" height="1.05" fill="#7a7a7a"/><rect x="128.55" y="685.20" width="3.95" height="1.05" fill="#7a7a7a"/><rect x="133.22" y="685.20" width="3.83" height="1.05" fill="#7a7a7a"/><rect x="137.96" y="685.20" width="3.92" height="1.05" fill="#7a7a7a"/><rect x="142.67" y="685.20" width="2.75" height="1.05" fill="#7a7a7a"/><rect x="146.43" y="685.20" width="5.56" height="1.05" fill="#7a7a7a"/><rect x="153.00" y="685.20" width="4.38" height="1.05" fill="#7a7a7a"/><rect x="158.41" y="685.20" width="4.85" height="1.05" fill="#7a7a7a"/><rect x="164.15" y="685.20" width="5.15" height="1.05" fill="#7a7a7a"/><rect x="170.27" y="685.20" width="2.73" height="1.05" fill="#7a7a7a"/><rect x="97.50" y="686.90" width="3.11" height="1.05" fill="#7a7a7a"/><rect x="101.23" y="686.90" width="6.89" height="1.05" fill="#7a7a7a"/><rect x="108.96" y="686.90" width="6.18" height="1.05" fill="#7a7a7a"/><rect x="115.75" y="686.90" width="4.59" height="1.05" fill="#7a7a7a"/><rect x="121.38" y="686.90" width="5.41" height="1.05" fill="#7a7a7a"/><rect x="127.60" y="686.90" width="3.83" height="1.05" fill="#7a7a7a"/><rect x="179.50" y="689.80" width="16.10" height="0.60" fill="#666"/><rect x="176.50" y="688.60" width="2.00" height="1.20" fill="#777"/><rect x="179.50" y="691.50" width="16.10" height="0.60" fill="#666"/><rect x="176.50" y="690.30" width="2.00" height="1.20" fill="#777"/><rect x="90.80" y="693.50" width="1.40" height="1.10" fill="#666"/><rect x="97.50" y="693.50" width="2.87" height="1.05" fill="#5a5a5a"/><rect x="101.16" y="693.50" width="4.12" height="1.05" fill="#5a5a5a"/><rect x="106.32" y="693.50" width="2.84" height="1.05" fill="#5a5a5a"/><rect x="109.89" y="693.50" width="3.53" height="1.05" fill="#5a5a5a"/><rect x="114.09" y="693.50" width="3.58" height="1.05" fill="#5a5a5a"/><rect x="118.39" y="693.50" width="4.65" height="1.05" fill="#5a5a5a"/><rect x="123.66" y="693.50" width="7.08" height="1.05" fill="#5a5a5a"/><rect x="131.53" y="693.50" width="5.12" height="1.05" fill="#5a5a5a"/><rect x="179.50" y="694.30" width="16.10" height="0.60" fill="#666"/><rect x="176.50" y="693.10" width="2.00" height="1.20" fill="#777"/><rect x="90.80" y="698.00" width="1.40" height="1.10" fill="#666"/><rect x="95.50" y="698.00" width="5.71" height="1.05" fill="#5a5a5a"/><rect x="102.04" y="698.00" width="7.20" height="1.05" fill="#5a5a5a"/><rect x="109.90" y="698.00" width="5.68" height="1.05" fill="#5a5a5a"/><rect x="116.32" y="698.00" width="5.71" height="1.05" fill="#5a5a5a"/><rect x="123.00" y="698.00" width="2.90" height="1.05" fill="#5a5a5a"/><rect x="126.60" y="698.00" width="2.14" height="1.05" fill="#5a5a5a"/><rect x="129.45" y="698.00" width="2.43" height="1.05" fill="#5a5a5a"/><rect x="132.68" y="698.00" width="7.35" height="1.05" fill="#5a5a5a"/><rect x="140.82" y="698.00" width="3.72" height="1.05" fill="#5a5a5a"/><rect x="145.36" y="698.00" width="3.56" height="1.05" fill="#5a5a5a"/><rect x="149.89" y="698.00" width="5.95" height="1.05" fill="#5a5a5a"/><rect x="156.52" y="698.00" width="3.32" height="1.05" fill="#5a5a5a"/><rect x="160.78" y="698.00" width="7.17" height="1.05" fill="#5a5a5a"/><rect x="168.87" y="698.00" width="4.13" height="1.05" fill="#5a5a5a"/><rect x="95.50" y="699.70" width="2.33" height="1.05" fill="#7a7a7a"/><rect x="98.82" y="699.70" width="4.26" height="1.05" fill="#7a7a7a"/><rect x="103.70" y="699.70" width="5.02" height="1.05" fill="#7a7a7a"/><rect x="109.81" y="699.70" width="4.85" height="1.05" fill="#7a7a7a"/><rect x="115.44" y="699.70" width="2.52" height="1.05" fill="#7a7a7a"/><rect x="118.59" y="699.70" width="6.94" height="1.05" fill="#7a7a7a"/><rect x="126.38" y="699.70" width="3.89" height="1.05" fill="#7a7a7a"/><rect x="179.50" y="701.80" width="16.10" height="0.60" fill="#666"/><rect x="176.50" y="700.60" width="2.00" height="1.20" fill="#777"/><rect x="90.80" y="703.80" width="1.40" height="1.10" fill="#666"/><rect x="95.50" y="703.80" width="3.34" height="1.05" fill="#5a5a5a"/><rect x="99.46" y="703.80" width="4.19" height="1.05" fill="#5a5a5a"/><rect x="104.28" y="703.80" width="3.40" height="1.05" fill="#5a5a5a"/><rect x="108.49" y="703.80" width="3.68" height="1.05" fill="#5a5a5a"/><rect x="112.80" y="703.80" width="2.21" height="1.05" fill="#5a5a5a"/><rect x="116.09" y="703.80" width="2.99" height="1.05" fill="#5a5a5a"/><rect x="119.93" y="703.80" width="4.21" height="1.05" fill="#5a5a5a"/><rect x="125.01" y="703.80" width="2.46" height="1.05" fill="#5a5a5a"/><rect x="128.23" y="703.80" width="2.59" height="1.05" fill="#5a5a5a"/><rect x="131.69" y="703.80" width="7.07" height="1.05" fill="#5a5a5a"/><rect x="139.66" y="703.80" width="6.71" height="1.05" fill="#5a5a5a"/><rect x="147.08" y="703.80" width="2.10" height="1.05" fill="#5a5a5a"/><rect x="150.05" y="703.80" width="4.68" height="1.05" fill="#5a5a5a"/><rect x="155.61" y="703.80" width="4.07" height="1.05" fill="#5a5a5a"/><rect x="160.59" y="703.80" width="5.99" height="1.05" fill="#5a5a5a"/><rect x="167.64" y="703.80" width="3.69" height="1.05" fill="#5a5a5a"/><rect x="172.16" y="703.80" width="0.84" height="1.05" fill="#5a5a5a"/><rect x="95.50" y="705.50" width="3.71" height="1.05" fill="#7a7a7a"/><rect x="99.86" y="705.50" width="6.25" height="1.05" fill="#7a7a7a"/><rect x="107.12" y="705.50" width="3.72" height="1.05" fill="#7a7a7a"/><rect x="111.50" y="705.50" width="2.45" height="1.05" fill="#7a7a7a"/><rect x="114.68" y="705.50" width="2.46" height="1.05" fill="#7a7a7a"/><rect x="117.95" y="705.50" width="5.17" height="1.05" fill="#7a7a7a"/><rect x="123.85" y="705.50" width="2.34" height="1.05" fill="#7a7a7a"/><rect x="127.14" y="705.50" width="2.26" height="1.05" fill="#7a7a7a"/><rect x="130.10" y="705.50" width="3.57" height="1.05" fill="#7a7a7a"/><rect x="134.46" y="705.50" width="0.51" height="1.05" fill="#7a7a7a"/><rect x="179.50" y="708.30" width="16.10" height="0.60" fill="#666"/><rect x="176.50" y="707.10" width="2.00" height="1.20" fill="#777"/><rect x="90.80" y="715.50" width="1.40" height="1.10" fill="#666"/><rect x="95.50" y="715.50" width="3.73" height="1.05" fill="#5a5a5a"/><rect x="100.20" y="715.50" width="5.06" height="1.05" fill="#5a5a5a"/><rect x="106.31" y="715.50" width="5.60" height="1.05" fill="#5a5a5a"/><rect x="112.89" y="715.50" width="5.16" height="1.05" fill="#5a5a5a"/><rect x="118.87" y="715.50" width="6.49" height="1.05" fill="#5a5a5a"/><rect x="126.29" y="715.50" width="7.25" height="1.05" fill="#5a5a5a"/><rect x="134.50" y="715.50" width="5.86" height="1.05" fill="#5a5a5a"/><rect x="141.09" y="715.50" width="6.47" height="1.05" fill="#5a5a5a"/><rect x="148.35" y="715.50" width="2.72" height="1.05" fill="#5a5a5a"/><rect x="151.70" y="715.50" width="2.93" height="1.05" fill="#5a5a5a"/><rect x="155.36" y="715.50" width="5.72" height="1.05" fill="#5a5a5a"/><rect x="161.82" y="715.50" width="2.35" height="1.05" fill="#5a5a5a"/><rect x="165.16" y="715.50" width="5.06" height="1.05" fill="#5a5a5a"/><rect x="170.83" y="715.50" width="2.17" height="1.05" fill="#5a5a5a"/><rect x="95.50" y="717.20" width="6.73" height="1.05" fill="#7a7a7a"/><rect x="103.30" y="717.20" width="5.37" height="1.05" fill="#7a7a7a"/><rect x="109.39" y="717.20" width="4.36" height="1.05" fill="#7a7a7a"/><rect x="114.53" y="717.20" width="3.82" height="1.05" fill="#7a7a7a"/><rect x="118.95" y="717.20" width="5.21" height="1.05" fill="#7a7a7a"/><rect x="125.18" y="717.20" width="6.00" height="1.05" fill="#7a7a7a"/><rect x="131.82" y="717.20" width="4.92" height="1.05" fill="#7a7a7a"/><rect x="137.42" y="717.20" width="5.90" height="1.05" fill="#7a7a7a"/><rect x="144.15" y="717.20" width="1.21" height="1.05" fill="#7a7a7a"/><rect x="179.50" y="720.50" width="16.10" height="0.60" fill="#666"/><rect x="176.50" y="719.30" width="2.00" height="1.20" fill="#777"/><rect x="90.80" y="723.00" width="1.40" height="1.10" fill="#666"/><rect x="95.50" y="723.00" width="2.65" height="1.05" fill="#5a5a5a"/><rect x="98.91" y="723.00" width="7.03" height="1.05" fill="#5a5a5a"/><rect x="106.77" y="723.00" width="4.39" height="1.05" fill="#5a5a5a"/><rect x="111.98" y="723.00" width="6.22" height="1.05" fill="#5a5a5a"/><rect x="119.27" y="723.00" width="4.93" height="1.05" fill="#5a5a5a"/><rect x="125.28" y="723.00" width="5.28" height="1.05" fill="#5a5a5a"/><rect x="131.21" y="723.00" width="6.48" height="1.05" fill="#5a5a5a"/><rect x="138.50" y="723.00" width="2.29" height="1.05" fill="#5a5a5a"/><rect x="141.88" y="723.00" width="2.18" height="1.05" fill="#5a5a5a"/><rect x="144.95" y="723.00" width="4.65" height="1.05" fill="#5a5a5a"/><rect x="150.64" y="723.00" width="4.16" height="1.05" fill="#5a5a5a"/><rect x="155.51" y="723.00" width="3.52" height="1.05" fill="#5a5a5a"/><rect x="159.73" y="723.00" width="5.09" height="1.05" fill="#5a5a5a"/><rect x="165.60" y="723.00" width="6.13" height="1.05" fill="#5a5a5a"/><rect x="172.46" y="723.00" width="0.54" height="1.05" fill="#5a5a5a"/><rect x="95.50" y="724.70" width="6.62" height="1.05" fill="#7a7a7a"/><rect x="103.15" y="724.70" width="5.40" height="1.05" fill="#7a7a7a"/><rect x="109.35" y="724.70" width="2.79" height="1.05" fill="#7a7a7a"/><rect x="113.15" y="724.70" width="4.70" height="1.05" fill="#7a7a7a"/><rect x="118.46" y="724.70" width="2.93" height="1.05" fill="#7a7a7a"/><rect x="122.05" y="724.70" width="5.95" height="1.05" fill="#7a7a7a"/><rect x="129.04" y="724.70" width="3.10" height="1.05" fill="#7a7a7a"/><rect x="133.14" y="724.70" width="3.78" height="1.05" fill="#7a7a7a"/><rect x="137.86" y="724.70" width="6.75" height="1.05" fill="#7a7a7a"/><rect x="145.52" y="724.70" width="6.40" height="1.05" fill="#7a7a7a"/><rect x="152.71" y="724.70" width="2.06" height="1.05" fill="#7a7a7a"/><rect x="155.62" y="724.70" width="5.23" height="1.05" fill="#7a7a7a"/><rect x="161.54" y="724.70" width="4.14" height="1.05" fill="#7a7a7a"/><rect x="166.44" y="724.70" width="2.15" height="1.05" fill="#7a7a7a"/><rect x="169.34" y="724.70" width="2.90" height="1.05" fill="#7a7a7a"/><rect x="179.50" y="727.80" width="16.10" height="0.60" fill="#666"/><rect x="176.50" y="726.60" width="2.00" height="1.20" fill="#777"/><rect x="90.80" y="730.00" width="1.40" height="1.10" fill="#666"/><rect x="95.50" y="730.00" width="5.87" height="1.05" fill="#5a5a5a"/><rect x="102.17" y="730.00" width="7.40" height="1.05" fill="#5a5a5a"/><rect x="110.58" y="730.00" width="7.08" height="1.05" fill="#5a5a5a"/><rect x="118.61" y="730.00" width="5.69" height="1.05" fill="#5a5a5a"/><rect x="125.16" y="730.00" width="6.39" height="1.05" fill="#5a5a5a"/><rect x="132.34" y="730.00" width="5.26" height="1.05" fill="#5a5a5a"/><rect x="138.54" y="730.00" width="4.87" height="1.05" fill="#5a5a5a"/><rect x="144.15" y="730.00" width="2.43" height="1.05" fill="#5a5a5a"/><rect x="147.22" y="730.00" width="3.96" height="1.05" fill="#5a5a5a"/><rect x="152.07" y="730.00" width="6.18" height="1.05" fill="#5a5a5a"/><rect x="159.21" y="730.00" width="3.69" height="1.05" fill="#5a5a5a"/><rect x="163.96" y="730.00" width="3.51" height="1.05" fill="#5a5a5a"/><rect x="168.43" y="730.00" width="2.40" height="1.05" fill="#5a5a5a"/><rect x="171.80" y="730.00" width="1.20" height="1.05" fill="#5a5a5a"/><rect x="95.50" y="731.70" width="5.78" height="1.05" fill="#7a7a7a"/><rect x="102.30" y="731.70" width="6.06" height="1.05" fill="#7a7a7a"/><rect x="109.27" y="731.70" width="3.15" height="1.05" fill="#7a7a7a"/><rect x="113.28" y="731.70" width="6.93" height="1.05" fill="#7a7a7a"/><rect x="120.92" y="731.70" width="7.36" height="1.05" fill="#7a7a7a"/><rect x="129.16" y="731.70" width="4.16" height="1.05" fill="#7a7a7a"/><rect x="133.92" y="731.70" width="4.15" height="1.05" fill="#7a7a7a"/><rect x="138.76" y="731.70" width="5.59" height="1.05" fill="#7a7a7a"/><rect x="145.40" y="731.70" width="7.01" height="1.05" fill="#7a7a7a"/><rect x="153.31" y="731.70" width="4.13" height="1.05" fill="#7a7a7a"/><rect x="158.09" y="731.70" width="5.79" height="1.05" fill="#7a7a7a"/><rect x="164.76" y="731.70" width="3.82" height="1.05" fill="#7a7a7a"/><rect x="179.50" y="734.30" width="16.10" height="0.60" fill="#666"/><rect x="176.50" y="733.10" width="2.00" height="1.20" fill="#777"/><rect x="90.80" y="737.50" width="1.40" height="1.10" fill="#666"/><rect x="95.50" y="737.50" width="6.88" height="1.05" fill="#5a5a5a"/><rect x="103.08" y="737.50" width="3.68" height="1.05" fill="#5a5a5a"/><rect x="107.50" y="737.50" width="5.42" height="1.05" fill="#5a5a5a"/><rect x="113.97" y="737.50" width="2.92" height="1.05" fill="#5a5a5a"/><rect x="117.81" y="737.50" width="6.22" height="1.05" fill="#5a5a5a"/><rect x="124.73" y="737.50" width="2.34" height="1.05" fill="#5a5a5a"/><rect x="127.96" y="737.50" width="6.57" height="1.05" fill="#5a5a5a"/><rect x="135.57" y="737.50" width="6.00" height="1.05" fill="#5a5a5a"/><rect x="142.38" y="737.50" width="4.34" height="1.05" fill="#5a5a5a"/><rect x="147.58" y="737.50" width="6.98" height="1.05" fill="#5a5a5a"/><rect x="155.31" y="737.50" width="3.54" height="1.05" fill="#5a5a5a"/><rect x="159.76" y="737.50" width="7.32" height="1.05" fill="#5a5a5a"/><rect x="167.77" y="737.50" width="2.17" height="1.05" fill="#5a5a5a"/><rect x="170.59" y="737.50" width="2.41" height="1.05" fill="#5a5a5a"/><rect x="95.50" y="739.20" width="3.05" height="1.05" fill="#7a7a7a"/><rect x="99.44" y="739.20" width="5.55" height="1.05" fill="#7a7a7a"/><rect x="105.94" y="739.20" width="6.01" height="1.05" fill="#7a7a7a"/><rect x="112.58" y="739.20" width="4.67" height="1.05" fill="#7a7a7a"/><rect x="118.27" y="739.20" width="7.26" height="1.05" fill="#7a7a7a"/><rect x="126.29" y="739.20" width="6.68" height="1.05" fill="#7a7a7a"/><rect x="133.89" y="739.20" width="4.02" height="1.05" fill="#7a7a7a"/><rect x="179.50" y="741.50" width="16.10" height="0.60" fill="#666"/><rect x="176.50" y="740.30" width="2.00" height="1.20" fill="#777"/><rect x="90.80" y="744.80" width="1.40" height="1.10" fill="#666"/><rect x="95.50" y="744.80" width="6.62" height="1.05" fill="#5a5a5a"/><rect x="102.96" y="744.80" width="2.55" height="1.05" fill="#5a5a5a"/><rect x="106.21" y="744.80" width="2.86" height="1.05" fill="#5a5a5a"/><rect x="109.72" y="744.80" width="2.84" height="1.05" fill="#5a5a5a"/><rect x="113.47" y="744.80" width="2.58" height="1.05" fill="#5a5a5a"/><rect x="117.02" y="744.80" width="6.05" height="1.05" fill="#5a5a5a"/><rect x="124.08" y="744.80" width="6.42" height="1.05" fill="#5a5a5a"/><rect x="131.46" y="744.80" width="7.08" height="1.05" fill="#5a5a5a"/><rect x="139.62" y="744.80" width="5.44" height="1.05" fill="#5a5a5a"/><rect x="146.14" y="744.80" width="2.57" height="1.05" fill="#5a5a5a"/><rect x="149.36" y="744.80" width="2.35" height="1.05" fill="#5a5a5a"/><rect x="152.41" y="744.80" width="4.06" height="1.05" fill="#5a5a5a"/><rect x="157.30" y="744.80" width="2.66" height="1.05" fill="#5a5a5a"/><rect x="179.50" y="745.80" width="16.10" height="0.60" fill="#666"/><rect x="176.50" y="744.60" width="2.00" height="1.20" fill="#777"/><rect x="89.20" y="710.80" width="106.40" height="3.40" fill="#9a9a9a"/><rect x="115.00" y="711.80" width="2.46" height="1.20" fill="#333"/><rect x="118.26" y="711.80" width="4.99" height="1.20" fill="#333"/><rect x="124.04" y="711.80" width="2.65" height="1.20" fill="#333"/><rect x="127.58" y="711.80" width="4.06" height="1.20" fill="#333"/><rect x="132.59" y="711.80" width="4.73" height="1.20" fill="#333"/><rect x="138.39" y="711.80" width="7.20" height="1.20" fill="#333"/><rect x="146.23" y="711.80" width="6.18" height="1.20" fill="#333"/><rect x="153.37" y="711.80" width="3.63" height="1.20" fill="#333"/><rect x="157.65" y="711.80" width="4.63" height="1.20" fill="#333"/><rect x="163.06" y="711.80" width="6.06" height="1.20" fill="#333"/><rect x="192.60" y="710.30" width="3.00" height="4.40" fill="#222"/><rect x="100.00" y="721.80" width="50.00" height="0.50" fill="#777"/><rect x="100.00" y="721.80" width="0.40" height="6.20" fill="#777"/><rect x="149.60" y="721.80" width="0.40" height="6.20" fill="#777"/><rect x="89.20" y="748.00" width="106.40" height="0.80" fill="#333"/><rect x="89.20" y="750.30" width="4.74" height="1.30" fill="#2e2e2e"/><rect x="94.89" y="750.30" width="6.34" height="1.30" fill="#2e2e2e"/><rect x="102.12" y="750.30" width="3.63" height="1.30" fill="#2e2e2e"/><rect x="106.52" y="750.30" width="6.66" height="1.30" fill="#2e2e2e"/><rect x="114.04" y="750.30" width="2.28" height="1.30" fill="#2e2e2e"/><rect x="117.13" y="750.30" width="3.31" height="1.30" fill="#2e2e2e"/><rect x="121.37" y="750.30" width="2.40" height="1.30" fill="#2e2e2e"/><rect x="124.51" y="750.30" width="2.53" height="1.30" fill="#2e2e2e"/><rect x="127.87" y="750.30" width="2.59" height="1.30" fill="#2e2e2e"/><rect x="89.20" y="752.30" width="2.51" height="1.30" fill="#4a4a4a"/><rect x="92.48" y="752.30" width="6.46" height="1.30" fill="#4a4a4a"/><rect x="99.54" y="752.30" width="6.21" height="1.30" fill="#4a4a4a"/><rect x="106.54" y="752.30" width="2.09" height="1.30" fill="#4a4a4a"/><rect x="109.35" y="752.30" width="4.52" height="1.30" fill="#4a4a4a"/><rect x="114.67" y="752.30" width="4.84" height="1.30" fill="#4a4a4a"/><rect x="120.13" y="752.30" width="3.20" height="1.30" fill="#4a4a4a"/><rect x="124.42" y="752.30" width="4.43" height="1.30" fill="#4a4a4a"/><rect x="129.69" y="752.30" width="0.82" height="1.30" fill="#4a4a4a"/><rect x="89.20" y="754.30" width="4.79" height="1.30" fill="#4a4a4a"/><rect x="94.62" y="754.30" width="4.16" height="1.30" fill="#4a4a4a"/><rect x="99.77" y="754.30" width="4.39" height="1.30" fill="#4a4a4a"/><rect x="105.06" y="754.30" width="6.96" height="1.30" fill="#4a4a4a"/><rect x="112.94" y="754.30" width="5.50" height="1.30" fill="#4a4a4a"/><rect x="119.06" y="754.30" width="2.13" height="1.30" fill="#4a4a4a"/><rect x="122.17" y="754.30" width="4.27" height="1.30" fill="#4a4a4a"/><rect x="127.48" y="754.30" width="6.54" height="1.30" fill="#4a4a4a"/><rect x="135.08" y="754.30" width="2.37" height="1.30" fill="#4a4a4a"/><rect x="89.20" y="756.30" width="2.82" height="1.30" fill="#4a4a4a"/><rect x="93.01" y="756.30" width="4.32" height="1.30" fill="#4a4a4a"/><rect x="98.41" y="756.30" width="7.47" height="1.30" fill="#4a4a4a"/><rect x="106.59" y="756.30" width="4.32" height="1.30" fill="#4a4a4a"/><rect x="111.64" y="756.30" width="4.58" height="1.30" fill="#4a4a4a"/><rect x="116.97" y="756.30" width="5.67" height="1.30" fill="#4a4a4a"/><rect x="123.30" y="756.30" width="2.93" height="1.30" fill="#4a4a4a"/><rect x="127.06" y="756.30" width="2.41" height="1.30" fill="#4a4a4a"/><rect x="130.25" y="756.30" width="4.77" height="1.30" fill="#4a4a4a"/><rect x="89.20" y="758.30" width="6.56" height="1.30" fill="#2e2e2e"/><rect x="96.84" y="758.30" width="5.29" height="1.30" fill="#2e2e2e"/><rect x="102.80" y="758.30" width="3.30" height="1.30" fill="#2e2e2e"/><rect x="107.16" y="758.30" width="7.16" height="1.30" fill="#2e2e2e"/><rect x="114.93" y="758.30" width="3.02" height="1.30" fill="#2e2e2e"/><rect x="118.76" y="758.30" width="3.47" height="1.30" fill="#2e2e2e"/><rect x="123.21" y="758.30" width="4.05" height="1.30" fill="#2e2e2e"/><rect x="89.20" y="760.30" width="7.36" height="1.30" fill="#4a4a4a"/><rect x="97.51" y="760.30" width="2.50" height="1.30" fill="#4a4a4a"/><rect x="100.66" y="760.30" width="5.54" height="1.30" fill="#4a4a4a"/><rect x="106.99" y="760.30" width="4.03" height="1.30" fill="#4a4a4a"/><rect x="111.86" y="760.30" width="5.20" height="1.30" fill="#4a4a4a"/><rect x="118.14" y="760.30" width="3.33" height="1.30" fill="#4a4a4a"/><rect x="122.35" y="760.30" width="3.45" height="1.30" fill="#4a4a4a"/><rect x="126.67" y="760.30" width="0.99" height="1.30" fill="#4a4a4a"/><rect x="89.20" y="762.30" width="2.04" height="1.30" fill="#4a4a4a"/><rect x="92.23" y="762.30" width="4.30" height="1.30" fill="#4a4a4a"/><rect x="97.39" y="762.30" width="5.36" height="1.30" fill="#4a4a4a"/><rect x="103.74" y="762.30" width="2.31" height="1.30" fill="#4a4a4a"/><rect x="106.90" y="762.30" width="2.21" height="1.30" fill="#4a4a4a"/><rect x="109.90" y="762.30" width="3.90" height="1.30" fill="#4a4a4a"/><rect x="114.41" y="762.30" width="3.64" height="1.30" fill="#4a4a4a"/><rect x="118.88" y="762.30" width="5.60" height="1.30" fill="#4a4a4a"/><rect x="125.54" y="762.30" width="4.04" height="1.30" fill="#4a4a4a"/><rect x="130.44" y="762.30" width="1.23" height="1.30" fill="#4a4a4a"/><rect x="89.20" y="764.30" width="3.66" height="1.30" fill="#4a4a4a"/><rect x="93.54" y="764.30" width="7.13" height="1.30" fill="#4a4a4a"/><rect x="101.31" y="764.30" width="4.47" height="1.30" fill="#4a4a4a"/><rect x="106.74" y="764.30" width="4.91" height="1.30" fill="#4a4a4a"/><rect x="112.45" y="764.30" width="7.08" height="1.30" fill="#4a4a4a"/><rect x="120.28" y="764.30" width="5.03" height="1.30" fill="#4a4a4a"/><rect x="126.33" y="764.30" width="2.76" height="1.30" fill="#4a4a4a"/><rect x="129.86" y="764.30" width="4.72" height="1.30" fill="#4a4a4a"/><rect x="135.47" y="764.30" width="1.92" height="1.30" fill="#4a4a4a"/><rect x="89.20" y="766.30" width="3.88" height="1.30" fill="#2e2e2e"/><rect x="93.75" y="766.30" width="7.32" height="1.30" fill="#2e2e2e"/><rect x="101.81" y="766.30" width="3.52" height="1.30" fill="#2e2e2e"/><rect x="106.31" y="766.30" width="6.08" height="1.30" fill="#2e2e2e"/><rect x="113.12" y="766.30" width="6.56" height="1.30" fill="#2e2e2e"/><rect x="120.60" y="766.30" width="4.14" height="1.30" fill="#2e2e2e"/><rect x="125.65" y="766.30" width="0.88" height="1.30" fill="#2e2e2e"/><rect x="89.20" y="768.30" width="6.94" height="1.30" fill="#2e2e2e"/><rect x="96.82" y="768.30" width="2.76" height="1.30" fill="#2e2e2e"/><rect x="100.20" y="768.30" width="6.07" height="1.30" fill="#2e2e2e"/><rect x="107.15" y="768.30" width="2.05" height="1.30" fill="#2e2e2e"/><rect x="109.83" y="768.30" width="6.53" height="1.30" fill="#2e2e2e"/><rect x="117.21" y="768.30" width="6.79" height="1.30" fill="#2e2e2e"/><rect x="124.62" y="768.30" width="5.24" height="1.30" fill="#2e2e2e"/><rect x="130.52" y="768.30" width="5.97" height="1.30" fill="#2e2e2e"/><rect x="89.20" y="770.30" width="7.22" height="1.30" fill="#2e2e2e"/><rect x="97.08" y="770.30" width="2.35" height="1.30" fill="#2e2e2e"/><rect x="100.37" y="770.30" width="2.51" height="1.30" fill="#2e2e2e"/><rect x="103.51" y="770.30" width="4.53" height="1.30" fill="#2e2e2e"/><rect x="108.97" y="770.30" width="6.91" height="1.30" fill="#2e2e2e"/><rect x="116.84" y="770.30" width="2.38" height="1.30" fill="#2e2e2e"/><rect x="120.14" y="770.30" width="6.64" height="1.30" fill="#2e2e2e"/><rect x="127.44" y="770.30" width="5.83" height="1.30" fill="#2e2e2e"/><rect x="144.60" y="750.30" width="6.17" height="1.30" fill="#2e2e2e"/><rect x="151.63" y="750.30" width="6.96" height="1.30" fill="#2e2e2e"/><rect x="159.42" y="750.30" width="2.85" height="1.30" fill="#2e2e2e"/><rect x="162.98" y="750.30" width="3.45" height="1.30" fill="#2e2e2e"/><rect x="167.51" y="750.30" width="3.13" height="1.30" fill="#2e2e2e"/><rect x="171.28" y="750.30" width="3.94" height="1.30" fill="#2e2e2e"/><rect x="175.86" y="750.30" width="4.34" height="1.30" fill="#2e2e2e"/><rect x="181.11" y="750.30" width="5.55" height="1.30" fill="#2e2e2e"/><rect x="144.60" y="752.30" width="5.78" height="1.30" fill="#2e2e2e"/><rect x="151.20" y="752.30" width="5.15" height="1.30" fill="#2e2e2e"/><rect x="157.41" y="752.30" width="2.80" height="1.30" fill="#2e2e2e"/><rect x="160.94" y="752.30" width="4.72" height="1.30" fill="#2e2e2e"/><rect x="166.53" y="752.30" width="6.95" height="1.30" fill="#2e2e2e"/><rect x="174.36" y="752.30" width="5.64" height="1.30" fill="#2e2e2e"/><rect x="180.81" y="752.30" width="3.81" height="1.30" fill="#2e2e2e"/><rect x="144.60" y="754.30" width="3.43" height="1.30" fill="#2e2e2e"/><rect x="148.80" y="754.30" width="6.89" height="1.30" fill="#2e2e2e"/><rect x="156.43" y="754.30" width="5.46" height="1.30" fill="#2e2e2e"/><rect x="162.81" y="754.30" width="7.26" height="1.30" fill="#2e2e2e"/><rect x="170.73" y="754.30" width="6.23" height="1.30" fill="#2e2e2e"/><rect x="177.73" y="754.30" width="2.57" height="1.30" fill="#2e2e2e"/><rect x="181.21" y="754.30" width="5.38" height="1.30" fill="#2e2e2e"/><rect x="144.60" y="756.30" width="4.11" height="1.30" fill="#4a4a4a"/><rect x="149.63" y="756.30" width="5.98" height="1.30" fill="#4a4a4a"/><rect x="156.34" y="756.30" width="4.25" height="1.30" fill="#4a4a4a"/><rect x="161.35" y="756.30" width="2.53" height="1.30" fill="#4a4a4a"/><rect x="164.51" y="756.30" width="5.94" height="1.30" fill="#4a4a4a"/><rect x="171.26" y="756.30" width="6.78" height="1.30" fill="#4a4a4a"/><rect x="178.68" y="756.30" width="3.66" height="1.30" fill="#4a4a4a"/><rect x="144.60" y="758.30" width="6.93" height="1.30" fill="#4a4a4a"/><rect x="152.38" y="758.30" width="2.57" height="1.30" fill="#4a4a4a"/><rect x="155.76" y="758.30" width="3.24" height="1.30" fill="#4a4a4a"/><rect x="159.62" y="758.30" width="5.11" height="1.30" fill="#4a4a4a"/><rect x="165.47" y="758.30" width="2.59" height="1.30" fill="#4a4a4a"/><rect x="168.92" y="758.30" width="7.13" height="1.30" fill="#4a4a4a"/><rect x="177.13" y="758.30" width="4.56" height="1.30" fill="#4a4a4a"/><rect x="182.34" y="758.30" width="6.23" height="1.30" fill="#4a4a4a"/><rect x="189.23" y="758.30" width="4.96" height="1.30" fill="#4a4a4a"/><rect x="144.60" y="760.30" width="4.41" height="1.30" fill="#4a4a4a"/><rect x="149.74" y="760.30" width="5.03" height="1.30" fill="#4a4a4a"/><rect x="155.86" y="760.30" width="4.35" height="1.30" fill="#4a4a4a"/><rect x="160.92" y="760.30" width="4.83" height="1.30" fill="#4a4a4a"/><rect x="166.81" y="760.30" width="4.10" height="1.30" fill="#4a4a4a"/><rect x="171.82" y="760.30" width="7.05" height="1.30" fill="#4a4a4a"/><rect x="179.64" y="760.30" width="6.46" height="1.30" fill="#4a4a4a"/><rect x="186.96" y="760.30" width="2.77" height="1.30" fill="#4a4a4a"/><rect x="190.36" y="760.30" width="5.08" height="1.30" fill="#4a4a4a"/><rect x="144.60" y="762.30" width="5.16" height="1.30" fill="#4a4a4a"/><rect x="150.61" y="762.30" width="3.56" height="1.30" fill="#4a4a4a"/><rect x="155.14" y="762.30" width="3.41" height="1.30" fill="#4a4a4a"/><rect x="159.39" y="762.30" width="6.17" height="1.30" fill="#4a4a4a"/><rect x="166.46" y="762.30" width="2.74" height="1.30" fill="#4a4a4a"/><rect x="169.90" y="762.30" width="5.82" height="1.30" fill="#4a4a4a"/><rect x="176.69" y="762.30" width="2.56" height="1.30" fill="#4a4a4a"/><rect x="180.35" y="762.30" width="2.73" height="1.30" fill="#4a4a4a"/><rect x="183.77" y="762.30" width="2.49" height="1.30" fill="#4a4a4a"/><rect x="187.08" y="762.30" width="1.42" height="1.30" fill="#4a4a4a"/><rect x="144.60" y="764.30" width="2.58" height="1.30" fill="#4a4a4a"/><rect x="148.07" y="764.30" width="3.39" height="1.30" fill="#4a4a4a"/><rect x="152.23" y="764.30" width="2.29" height="1.30" fill="#4a4a4a"/><rect x="155.48" y="764.30" width="2.67" height="1.30" fill="#4a4a4a"/><rect x="159.14" y="764.30" width="3.85" height="1.30" fill="#4a4a4a"/><rect x="163.88" y="764.30" width="5.51" height="1.30" fill="#4a4a4a"/><rect x="170.24" y="764.30" width="6.81" height="1.30" fill="#4a4a4a"/><rect x="178.11" y="764.30" width="3.55" height="1.30" fill="#4a4a4a"/><rect x="182.43" y="764.30" width="2.51" height="1.30" fill="#4a4a4a"/><rect x="144.60" y="766.30" width="7.37" height="1.30" fill="#2e2e2e"/><rect x="152.63" y="766.30" width="5.60" height="1.30" fill="#2e2e2e"/><rect x="159.22" y="766.30" width="6.01" height="1.30" fill="#2e2e2e"/><rect x="165.82" y="766.30" width="7.19" height="1.30" fill="#2e2e2e"/><rect x="173.77" y="766.30" width="6.69" height="1.30" fill="#2e2e2e"/><rect x="181.39" y="766.30" width="4.31" height="1.30" fill="#2e2e2e"/><rect x="186.72" y="766.30" width="1.48" height="1.30" fill="#2e2e2e"/><rect x="144.60" y="768.30" width="5.91" height="1.30" fill="#4a4a4a"/><rect x="151.42" y="768.30" width="6.38" height="1.30" fill="#4a4a4a"/><rect x="158.48" y="768.30" width="4.72" height="1.30" fill="#4a4a4a"/><rect x="163.80" y="768.30" width="6.35" height="1.30" fill="#4a4a4a"/><rect x="171.13" y="768.30" width="6.60" height="1.30" fill="#4a4a4a"/><rect x="178.36" y="768.30" width="4.94" height="1.30" fill="#4a4a4a"/><rect x="184.14" y="768.30" width="2.66" height="1.30" fill="#4a4a4a"/><rect x="187.50" y="768.30" width="4.68" height="1.30" fill="#4a4a4a"/><rect x="144.60" y="770.30" width="5.58" height="1.30" fill="#4a4a4a"/><rect x="150.97" y="770.30" width="5.55" height="1.30" fill="#4a4a4a"/><rect x="157.23" y="770.30" width="3.51" height="1.30" fill="#4a4a4a"/><rect x="161.34" y="770.30" width="5.61" height="1.30" fill="#4a4a4a"/><rect x="167.85" y="770.30" width="6.09" height="1.30" fill="#4a4a4a"/><rect x="174.79" y="770.30" width="4.39" height="1.30" fill="#4a4a4a"/><rect x="179.93" y="770.30" width="5.95" height="1.30" fill="#4a4a4a"/></svg></div>
<div id="doc"><div class="r" style="left:271.00px;top:0.00px;width:798.00px;height:608.00px;background:#fff"></div>
<div class="r" style="left:420.75px;top:17.50px;width:1.30px;height:62.50px;background:#222"></div>
<div class="r" style="left:918.35px;top:17.70px;width:1.30px;height:62.30px;background:#222"></div>
<div class="r" style="left:919.00px;top:33.00px;width:104.00px;height:1.00px;background:#666"></div>
<div class="r" style="left:318.00px;top:79.40px;width:705.00px;height:1.60px;background:#222"></div>
<div class="t" style="left:345.4px;top:15.14px;font-size:31.6px;font-weight:bold;transform:scaleX(0.875);letter-spacing:-0.8px;-webkit-text-stroke:1.0px #111">W-4</div>
<div class="t" style="left:937.2px;top:42.50px;font-size:27.3px;font-weight:bold;letter-spacing:0.6px;transform:scaleX(1.06)"><span style="color:#fff;-webkit-text-stroke:0.8px #333;font-weight:normal">20</span><span style="letter-spacing:0.3px">22</span></div>
<div class="r" style="left:393.00px;top:80.00px;width:1.20px;height:141.00px;background:#222"></div>
<div class="r" style="left:627.30px;top:80.00px;width:1.40px;height:31.50px;background:#999"></div>
<div class="r" style="left:890.05px;top:80.00px;width:1.30px;height:94.20px;background:#222"></div>
<div class="r" style="left:395.30px;top:93.80px;width:231.20px;height:17.40px;background:#dae7fc;border:1px solid #b3cdf6;border-radius:1.5px"></div>
<div class="r" style="left:630.20px;top:93.80px;width:259.00px;height:17.40px;background:#dae7fc;border:1px solid #b3cdf6;border-radius:1.5px"></div>
<div class="r" style="left:892.75px;top:93.80px;width:129.55px;height:17.40px;background:#dae7fc;border:1px solid #b3cdf6;border-radius:1.5px"></div>
<div class="r" style="left:393.60px;top:111.05px;width:629.40px;height:1.10px;background:#8d9ab8"></div>
<div class="r" style="left:395.30px;top:125.10px;width:494.00px;height:17.50px;background:#dae7fc;border:1px solid #b3cdf6;border-radius:1.5px"></div>
<div class="r" style="left:393.60px;top:142.50px;width:497.10px;height:1.00px;background:#333"></div>
<div class="r" style="left:395.30px;top:156.50px;width:494.00px;height:17.20px;background:#dae7fc;border:1px solid #b3cdf6;border-radius:1.5px"></div>
<div class="r" style="left:393.60px;top:173.60px;width:629.40px;height:1.20px;background:#333"></div>
<div class="r" style="left:420.80px;top:176.50px;width:11.50px;height:11.50px;background:#dae7fc;border:1px solid #8e9bb3"></div>
<div class="r" style="left:420.80px;top:192.20px;width:11.50px;height:11.50px;background:#dae7fc;border:1px solid #8e9bb3"></div>
<div class="r" style="left:420.80px;top:207.00px;width:11.50px;height:11.50px;background:#dae7fc;border:1px solid #8e9bb3"></div>
<div class="r" style="left:318.00px;top:220.25px;width:705.00px;height:1.50px;background:#262626"></div>
<div class="r" style="left:427.00px;top:40.90px;width:0;height:0;border-left:8.00px solid #111;border-top:4.00px solid transparent;border-bottom:4.00px solid transparent"></div>
<div class="r" style="left:583.50px;top:53.60px;width:0;height:0;border-left:8.00px solid #111;border-top:4.00px solid transparent;border-bottom:4.00px solid transparent"></div>
<div class="r" style="left:545.00px;top:66.40px;width:0;height:0;border-left:8.00px solid #111;border-top:4.00px solid transparent;border-bottom:4.00px solid transparent"></div>
<div class="r" style="left:896.20px;top:115.60px;width:0;height:0;border-left:7.00px solid #111;border-top:3.60px solid transparent;border-bottom:3.60px solid transparent"></div>
<div class="r" style="left:318.00px;top:267.15px;width:705.00px;height:1.30px;background:#333"></div>
<div class="r" style="left:993.20px;top:390.40px;width:0;height:0;border-left:8.30px solid #111;border-top:4.15px solid transparent;border-bottom:4.15px solid transparent"></div>
<div class="r" style="left:960.60px;top:396.80px;width:1.60px;height:1.60px;background:#333"></div>
<div class="r" style="left:976.60px;top:396.80px;width:1.60px;height:1.60px;background:#333"></div>
<div class="r" style="left:1008.70px;top:388.20px;width:11.30px;height:11.30px;background:#dae7fc;border:1px solid #8e9bb3"></div>
<div class="r" style="left:318.00px;top:470.95px;width:705.00px;height:1.30px;background:#333"></div>
<div class="r" style="left:899.95px;top:471.60px;width:1.30px;height:136.40px;background:#222"></div>
<div class="r" style="left:927.65px;top:471.60px;width:1.30px;height:136.40px;background:#222"></div>
<div class="r" style="left:807.30px;top:495.00px;width:83.20px;height:15.70px;background:#dae7fc;border:1px solid #b3cdf6;border-radius:1.5px"></div>
<div class="r" style="left:796.50px;top:510.40px;width:95.00px;height:1.20px;background:#777"></div>
<div class="r" style="left:807.30px;top:518.30px;width:83.20px;height:15.90px;background:#dae7fc;border:1px solid #b3cdf6;border-radius:1.5px"></div>
<div class="r" style="left:796.50px;top:533.90px;width:95.00px;height:1.20px;background:#777"></div>
<div class="r" style="left:783.30px;top:498.80px;width:0;height:0;border-left:9.20px solid #111;border-top:4.40px solid transparent;border-bottom:4.40px solid transparent"></div>
<div class="r" style="left:783.30px;top:521.90px;width:0;height:0;border-left:9.20px solid #111;border-top:4.40px solid transparent;border-bottom:4.40px solid transparent"></div>
<div class="r" style="left:726.00px;top:529.60px;width:1.60px;height:1.60px;background:#333"></div>
<div class="r" style="left:741.70px;top:529.60px;width:1.60px;height:1.60px;background:#333"></div>
<div class="r" style="left:757.40px;top:529.60px;width:1.60px;height:1.60px;background:#333"></div>
<div class="r" style="left:773.10px;top:529.60px;width:1.60px;height:1.60px;background:#333"></div>
<div class="r" style="left:694.70px;top:552.80px;width:1.60px;height:1.60px;background:#333"></div>
<div class="r" style="left:710.34px;top:552.80px;width:1.60px;height:1.60px;background:#333"></div>
<div class="r" style="left:725.98px;top:552.80px;width:1.60px;height:1.60px;background:#333"></div>
<div class="r" style="left:741.62px;top:552.80px;width:1.60px;height:1.60px;background:#333"></div>
<div class="r" style="left:757.26px;top:552.80px;width:1.60px;height:1.60px;background:#333"></div>
<div class="r" style="left:772.90px;top:552.80px;width:1.60px;height:1.60px;background:#333"></div>
<div class="r" style="left:788.54px;top:552.80px;width:1.60px;height:1.60px;background:#333"></div>
<div class="r" style="left:804.18px;top:552.80px;width:1.60px;height:1.60px;background:#333"></div>
<div class="r" style="left:819.82px;top:552.80px;width:1.60px;height:1.60px;background:#333"></div>
<div class="r" style="left:835.46px;top:552.80px;width:1.60px;height:1.60px;background:#333"></div>
<div class="r" style="left:851.10px;top:552.80px;width:1.60px;height:1.60px;background:#333"></div>
<div class="r" style="left:866.74px;top:552.80px;width:1.60px;height:1.60px;background:#333"></div>
<div class="r" style="left:882.38px;top:552.80px;width:1.60px;height:1.60px;background:#333"></div>
<div class="r" style="left:939.00px;top:542.40px;width:83.30px;height:14.90px;background:#dae7fc;border:1px solid #b3cdf6;border-radius:1.5px"></div>
<div class="r" style="left:318.00px;top:557.00px;width:705.00px;height:1.60px;background:#3a3a3a"></div>
<div class="t" style="left:431.29999999999995px;top:563.83px;font-size:11.85px;width:460.20000000000005px;text-align:justify;text-align-last:justify;white-space:normal"><b>(a) Other income (not from jobs).</b> If you want tax withheld for other income you</div>
<div class="t" style="left:318.60px;top:34.12px;font-size:9.041px">Form</div>
<div class="t" style="left:318.60px;top:59.23px;font-size:8.199px">Department of the Treasury</div>
<div class="t" style="left:318.60px;top:69.36px;font-size:8.050px">Internal Revenue Service</div>
<div class="t" style="left:527.20px;top:18.12px;font-size:17.151px;font-weight:bold">Employee’s Withholding Certificate</div>
<div class="t" style="left:438.00px;top:40.52px;font-size:10.800px;font-weight:bold;transform:scaleX(0.9140)">Complete Form W-4 so that your employer can withhold the correct federal income tax from your pay.</div>
<div class="t" style="left:594.00px;top:53.02px;font-size:10.800px;font-weight:bold;transform:scaleX(0.9699)">Give Form W-4 to your employer.</div>
<div class="t" style="left:556.00px;top:65.72px;font-size:10.800px;font-weight:bold;transform:scaleX(0.9664)">Your withholding is subject to review by the IRS.</div>
<div class="t" style="left:928.75px;top:20.88px;font-size:9.201px">OMB No. 1545-0074</div>
<div class="t" style="left:318.60px;top:86.48px;font-size:12.846px;font-weight:bold">Step 1:</div>
<div class="t" style="left:318.60px;top:105.45px;font-size:12.646px;font-weight:bold">Enter</div>
<div class="t" style="left:318.60px;top:120.86px;font-size:12.512px;font-weight:bold">Personal</div>
<div class="t" style="left:318.60px;top:136.54px;font-size:12.540px;font-weight:bold">Information</div>
<div class="t" style="left:398.40px;top:82.86px;font-size:9.100px;font-weight:bold">(a)</div>
<div class="t" style="left:417.00px;top:82.62px;font-size:9.211px">First name and middle initial</div>
<div class="t" style="left:633.70px;top:82.71px;font-size:9.100px">Last name</div>
<div class="t" style="left:896.50px;top:82.71px;font-size:9.100px;font-weight:bold">(b)</div>
<div class="t" style="left:914.80px;top:82.70px;font-size:9.120px;font-weight:bold">Social security number</div>
<div class="t" style="left:399.00px;top:113.66px;font-size:9.100px">Address</div>
<div class="t" style="left:399.00px;top:144.87px;font-size:9.330px">City or town, state, and ZIP code</div>
<div class="t" style="left:398.00px;top:179.46px;font-size:9.100px;font-weight:bold">(c)</div>
<div class="t" style="left:435.70px;top:179.42px;font-size:9.159px"><b>Single</b> or <b>Married filing separately</b></div>
<div class="t" style="left:435.70px;top:194.78px;font-size:9.086px"><b>Married filing jointly</b> or <b>Qualifying widow(er)</b></div>
<div class="t" style="left:435.70px;top:209.67px;font-size:8.982px"><b>Head of household</b> (Check only if you’re unmarried and pay more than half the costs of keeping up a home for yourself and a qualifying individual.)</div>
<div class="t" style="left:905.30px;top:115.48px;font-size:8.849px;font-weight:bold">Does your name match the</div>
<div class="t" style="left:896.00px;top:125.00px;font-size:8.822px;font-weight:bold">name on your social security</div>
<div class="t" style="left:896.00px;top:134.21px;font-size:8.928px"><b>card?</b> If not, to ensure you get</div>
<div class="t" style="left:896.00px;top:143.51px;font-size:9.046px">credit for your earnings, contact</div>
<div class="t" style="left:896.00px;top:152.73px;font-size:9.023px">SSA at 800-772-1213 or go to</div>
<div class="t" style="left:896.00px;top:162.20px;font-size:9.058px"><i>www.ssa.gov</i>.</div>
<div class="t" style="left:318.60px;top:231.78px;font-size:11.787px"><b>Complete Steps 2–4 ONLY if they apply to you; otherwise, skip to Step 5.</b> See page 2 for more information on each step, who can</div>
<div class="t" style="left:318.60px;top:245.92px;font-size:11.982px">claim exemption from withholding, when to use the estimator at <i>www.irs.gov/W4App</i>, and privacy.</div>
<div class="t" style="left:318.60px;top:274.30px;font-size:12.700px;font-weight:bold">Step 2:</div>
<div class="t" style="left:318.60px;top:292.45px;font-size:13.004px;font-weight:bold">Multiple Jobs</div>
<div class="t" style="left:318.60px;top:308.50px;font-size:12.700px;font-weight:bold">or Spouse</div>
<div class="t" style="left:318.60px;top:323.91px;font-size:12.700px;font-weight:bold">Works</div>
<div class="t" style="left:431.40px;top:275.08px;font-size:11.789px">Complete this step if you (1) hold more than one job at a time, or (2) are married filing jointly and your spouse</div>
<div class="t" style="left:431.40px;top:288.98px;font-size:11.905px">also works. The correct amount of withholding depends on income earned from all of these jobs.</div>
<div class="t" style="left:431.40px;top:308.89px;font-size:11.778px">Do <b>only one</b> of the following.</div>
<div class="t" style="left:431.30px;top:326.13px;font-size:11.850px;font-weight:bold">(a)</div>
<div class="t" style="left:450.20px;top:326.09px;font-size:11.897px">Use the estimator at <i>www.irs.gov/W4App</i> for most accurate withholding for this step (and Steps 3–4); <b>or</b></div>
<div class="t" style="left:431.30px;top:343.53px;font-size:11.850px;font-weight:bold">(b)</div>
<div class="t" style="left:450.20px;top:343.54px;font-size:11.833px">Use the Multiple Jobs Worksheet on page 3 and enter the result in Step 4(c) below for roughly accurate</div>
<div class="t" style="left:450.20px;top:357.16px;font-size:11.928px">withholding; <b>or</b></div>
<div class="t" style="left:431.30px;top:374.03px;font-size:11.850px;font-weight:bold">(c)</div>
<div class="t" style="left:450.20px;top:374.00px;font-size:11.881px">If there are only two jobs total, you may check this box. Do the same on Form W-4 for the other job. This</div>
<div class="t" style="left:450.20px;top:388.60px;font-size:11.880px">option is accurate for jobs with similar pay; otherwise, more tax than necessary may be withheld</div>
<div class="t" style="left:431.40px;top:405.85px;font-size:11.829px"><b>TIP:</b> To be accurate, submit a 2022 Form W-4 for all other jobs. If you (or your spouse) have self-employment</div>
<div class="t" style="left:431.40px;top:419.96px;font-size:11.930px">income, including as an independent contractor, use the estimator.</div>
<div class="t" style="left:318.60px;top:439.36px;font-size:11.810px"><b>Complete Steps 3–4(b) on Form W-4 for only ONE of these jobs.</b> Leave those steps blank for the other jobs. (Your withholding will</div>
<div class="t" style="left:318.60px;top:453.03px;font-size:11.850px">be most accurate if you complete Steps 3–4(b) on the Form W-4 for the highest paying job.)</div>
<div class="t" style="left:318.60px;top:477.31px;font-size:12.700px;font-weight:bold">Step 3:</div>
<div class="t" style="left:318.60px;top:496.91px;font-size:12.700px;font-weight:bold">Claim</div>
<div class="t" style="left:318.60px;top:511.78px;font-size:13.080px;font-weight:bold">Dependents</div>
<div class="t" style="left:318.60px;top:563.11px;font-size:12.700px;font-weight:bold">Step 4</div>
<div class="t" style="left:431.30px;top:478.07px;font-size:11.795px">If your total income will be $200,000 or less ($400,000 or less if married filing jointly):</div>
<div class="t" style="left:449.75px;top:498.71px;font-size:11.405px">Multiply the number of qualifying children under age 17 by $2,000</div>
<div class="t" style="left:449.75px;top:521.31px;font-size:11.983px">Multiply the number of other dependents by $500</div>
<div class="t" style="left:431.30px;top:544.52px;font-size:11.861px">Add the amounts above and enter the total here</div>
<div class="t" style="left:911.70px;top:543.53px;font-size:11.850px;font-weight:bold">3</div>
<div class="t" style="left:799.00px;top:498.33px;font-size:11.850px">$</div>
<div class="t" style="left:799.00px;top:521.43px;font-size:11.850px">$</div>
<div class="t" style="left:930.40px;top:543.53px;font-size:11.850px">$</div></div>
</body></html>
